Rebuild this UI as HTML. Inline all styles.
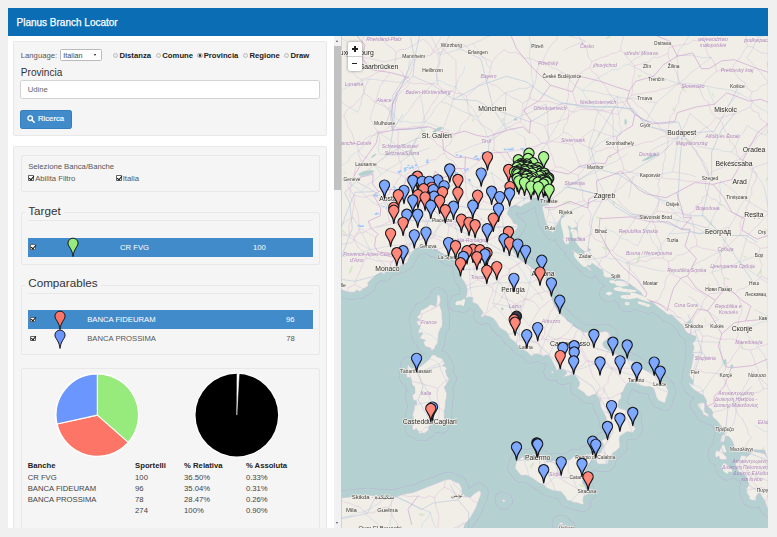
<!DOCTYPE html>
<html><head><meta charset="utf-8"><title>Planus Branch Locator</title>
<style>
html,body{margin:0;padding:0}
body{width:777px;height:537px;background:#f0f0f0;position:relative;overflow:hidden;font-family:"Liberation Sans","DejaVu Sans",sans-serif;font-size:7.7px;color:#444}
#page{position:absolute;left:8px;top:8px;width:760px;height:520px;background:#fff;overflow:hidden}
#blur{position:absolute;left:0;top:0;width:777px;height:537px;filter:blur(0.45px)}
.abs{position:absolute}
#hdr{left:0;top:0;width:760px;height:28px;background:#0b6db3}
#hdr span{position:absolute;left:8.5px;top:8.7px;font-size:10px;line-height:12px;color:#fff;font-weight:400;-webkit-text-stroke:0.25px #fff}
.well{position:absolute;background:#f5f5f5;border:1px solid #e8e8e8;border-radius:2px;box-sizing:border-box}
.t{position:absolute;white-space:nowrap;line-height:10px}
.b{font-weight:700;color:#222}
.leg{position:absolute;font-size:11.7px;line-height:14px;color:#333;white-space:nowrap}
.rad{position:absolute;width:5.4px;height:5.4px;border:0.7px solid #bdbdbd;border-radius:50%;background:#ececec;box-sizing:border-box}
.chk{position:absolute;width:5.6px;height:5.6px;border:0.7px solid #666;background:#fff;box-sizing:border-box;border-radius:0.8px}
.chk:after{content:"";position:absolute;left:0.9px;top:-1.2px;width:2px;height:4px;border:solid #111;border-width:0 1.1px 1.1px 0;transform:rotate(40deg)}
.row{position:absolute;left:19.7px;width:285px;height:19px}
.sel{background:#428bca}
.sel .t{color:#fff}
</style></head><body>
<div id="blur">
<div id="page">
<div id="hdr" class="abs"><span>Planus Branch Locator</span></div>

<!-- left panel (coords relative to #page: subtract 8) -->
<div class="well" style="left:5.3px;top:33px;width:313.5px;height:94.5px"></div>
<div class="t" style="left:12.8px;top:42.7px;color:#555">Language:</div>
<div class="abs" style="left:52.4px;top:41.3px;width:41.2px;height:11.4px;border:0.7px solid #bbb;background:#fff;box-sizing:border-box;border-radius:1.5px"></div>
<div class="t" style="left:55.3px;top:42.6px;font-size:7.2px;color:#444">Italian</div>
<div class="abs" style="left:86.3px;top:45.9px;width:0;height:0;border-left:1.7px solid transparent;border-right:1.7px solid transparent;border-top:2.6px solid #111"></div>

<div class="rad" style="left:105px;top:45px"></div><div class="t b" style="left:111.4px;top:43.2px">Distanza</div>
<div class="rad" style="left:147.8px;top:45px"></div><div class="t b" style="left:154.3px;top:43.2px">Comune</div>
<div class="rad" style="left:189.2px;top:45px;background:radial-gradient(circle,#222 0,#333 38%,#ddd 60%);border-color:#aaa"></div><div class="t b" style="left:195.7px;top:43.2px">Provincia</div>
<div class="rad" style="left:234.7px;top:45px"></div><div class="t b" style="left:241.5px;top:43.2px">Regione</div>
<div class="rad" style="left:276px;top:45px"></div><div class="t b" style="left:282.5px;top:43.2px">Draw</div>

<div class="leg" style="left:12.8px;top:57.6px;font-size:10.1px">Provincia</div>
<div class="abs" style="left:12.4px;top:71.6px;width:299.3px;height:19px;border:1px solid #d3d3d3;background:#fff;box-sizing:border-box;border-radius:2.2px"></div>
<div class="t" style="left:19.8px;top:76.9px;color:#666">Udine</div>
<div class="abs" style="left:12.4px;top:101.5px;width:51.4px;height:19px;background:#428bca;border:1px solid #357ebd;box-sizing:border-box;border-radius:2.2px"></div>
<svg class="abs" style="left:18.8px;top:106.6px" width="8" height="8" viewBox="0 0 8 8"><circle cx="3.2" cy="3.2" r="2.3" fill="none" stroke="#fff" stroke-width="1.3"/><path d="M4.9,4.9L7.2,7.2" stroke="#fff" stroke-width="1.5" stroke-linecap="round"/></svg>
<div class="t" style="left:30px;top:106.2px;color:#fff;-webkit-text-stroke:0.15px #fff">Ricerca</div>

<div class="well" style="left:5.1px;top:138.3px;width:313.6px;height:400px"></div>
<div class="well" style="left:12.9px;top:146.6px;width:298.7px;height:37px;background:#f5f5f5"></div>
<div class="t" style="left:20.2px;top:154.3px;color:#555">Selezione Banca/Banche</div>
<div class="chk" style="left:20.4px;top:167.2px"></div><div class="t" style="left:27.2px;top:165.6px;color:#555">Abilita Filtro</div>
<div class="chk" style="left:108px;top:167.2px"></div><div class="t" style="left:114.7px;top:165.6px;color:#555">Italia</div>

<!-- Target fieldset -->
<div class="well" style="left:12.9px;top:203.7px;width:298.7px;height:53px;background:#f5f5f5"></div>
<div class="leg" style="left:17.2px;top:195.8px;background:#f5f5f5;padding:0 3px">Target</div>
<div class="abs" style="left:19.7px;top:212px;width:285px;height:1px;background:#e8e8e8"></div>
<div class="row sel" style="top:230px">
 <div class="chk" style="left:2.8px;top:6.3px"></div>
 <div class="t" style="left:92.3px;top:4.6px">CR FVG</div>
 <div class="t" style="left:225.3px;top:4.6px">100</div>
</div>
<svg class="abs" style="left:57.4px;top:228.9px" width="16" height="21" viewBox="-8 -19.7 16 21"><path d="M0,-0.2L-0.45,-2.2C-0.55,-3.2 -0.8,-4.5 -1.3,-5.6C-1.9,-7 -3.0,-8.7 -3.75,-10.1A5.05,5.05 0 1 1 3.75,-10.1C3.0,-8.7 1.9,-7 1.3,-5.6C0.8,-4.5 0.55,-3.2 0.45,-2.2Z" fill="#97ea7c" stroke="#16161c" stroke-width="1"/></svg>

<!-- Comparables fieldset -->
<div class="well" style="left:12.9px;top:277px;width:298.7px;height:70.2px;background:#f5f5f5"></div>
<div class="leg" style="left:17.2px;top:268.2px;background:#f5f5f5;padding:0 3px">Comparables</div>
<div class="abs" style="left:19.7px;top:284.5px;width:285px;height:1px;background:#e8e8e8"></div>
<div class="row sel" style="top:302.3px">
 <div class="chk" style="left:2.8px;top:6.3px"></div>
 <div class="t" style="left:59.5px;top:4.6px">BANCA FIDEURAM</div>
 <div class="t" style="left:258.4px;top:4.6px">96</div>
</div>
<div class="row" style="top:321.3px">
 <div class="chk" style="left:2.8px;top:6.3px"></div>
 <div class="t" style="left:59.5px;top:4.6px;color:#555">BANCA PROSSIMA</div>
 <div class="t" style="left:258.6px;top:4.6px;color:#555">78</div>
</div>
<svg class="abs" style="left:43.5px;top:301.5px" width="16" height="40" viewBox="-8 -19.7 16 40"><path d="M0,-0.2L-0.45,-2.2C-0.55,-3.2 -0.8,-4.5 -1.3,-5.6C-1.9,-7 -3.0,-8.7 -3.75,-10.1A5.05,5.05 0 1 1 3.75,-10.1C3.0,-8.7 1.9,-7 1.3,-5.6C0.8,-4.5 0.55,-3.2 0.45,-2.2Z" fill="#fd7567" stroke="#16161c" stroke-width="1"/><path transform="translate(0,18.9)" d="M0,-0.2L-0.45,-2.2C-0.55,-3.2 -0.8,-4.5 -1.3,-5.6C-1.9,-7 -3.0,-8.7 -3.75,-10.1A5.05,5.05 0 1 1 3.75,-10.1C3.0,-8.7 1.9,-7 1.3,-5.6C0.8,-4.5 0.55,-3.2 0.45,-2.2Z" fill="#6b96fd" stroke="#16161c" stroke-width="1"/></svg>

<!-- chart well -->
<div class="well" style="left:12.9px;top:359.6px;width:298.7px;height:200px;background:#f5f5f5"></div>
<svg class="abs" style="left:40px;top:360px" width="250" height="95" viewBox="48 368 250 95">
 <circle cx="97.3" cy="415.1" r="42.2" fill="#fff"/>
 <g stroke="#fff" stroke-width="1.1" stroke-linejoin="round">
 <path d="M97.3,415.1 L97.30,373.90 A41.2,41.2 0 0 1 128.20,442.35 Z" fill="#97ea7c"/>
 <path d="M97.3,415.1 L128.20,442.35 A41.2,41.2 0 0 1 57.07,423.99 Z" fill="#fd7567"/>
 <path d="M97.3,415.1 L57.07,423.99 A41.2,41.2 0 0 1 97.30,373.90 Z" fill="#6b96fd"/>
 </g>
 <circle cx="236.8" cy="415.1" r="42.3" fill="#fff"/>
 <circle cx="236.8" cy="415.1" r="41.3" fill="#000"/>
 <path d="M236.8,415.1 L237.0,373.5 L239.2,373.6 Z" fill="#fff" stroke="#fff" stroke-width="0.5"/>
</svg>

<div class="t b" style="left:19.7px;top:453.1px">Banche</div><div class="t b" style="left:127.1px;top:453.1px">Sportelli</div><div class="t b" style="left:176.1px;top:453.1px">% Relativa</div><div class="t b" style="left:237.9px;top:453.1px">% Assoluta</div>
<div class="t" style="left:19.7px;top:464.8px">CR FVG</div><div class="t" style="left:127.1px;top:464.8px">100</div><div class="t" style="left:176.1px;top:464.8px">36.50%</div><div class="t" style="left:237.9px;top:464.8px">0.33%</div>
<div class="t" style="left:19.7px;top:476px">BANCA FIDEURAM</div><div class="t" style="left:127.1px;top:476px">96</div><div class="t" style="left:176.1px;top:476px">35.04%</div><div class="t" style="left:237.9px;top:476px">0.31%</div>
<div class="t" style="left:19.7px;top:486.8px">BANCA PROSSIMA</div><div class="t" style="left:127.1px;top:486.8px">78</div><div class="t" style="left:176.1px;top:486.8px">28.47%</div><div class="t" style="left:237.9px;top:486.8px">0.26%</div>
<div class="t" style="left:127.1px;top:498px">274</div><div class="t" style="left:176.1px;top:498px">100%</div><div class="t" style="left:237.9px;top:498px">0.90%</div>

<!-- scrollbar -->
<div class="abs" style="left:325.5px;top:28px;width:8px;height:492px;background:#f1f1f1"></div>
<div class="abs" style="left:325.8px;top:37.8px;width:7px;height:144.2px;background:#c1c1c1"></div>
<div class="abs" style="left:327.6px;top:32px;width:0;height:0;border-left:1.8px solid transparent;border-right:1.8px solid transparent;border-bottom:2.4px solid #555"></div>
<div class="abs" style="left:327.6px;top:513.5px;width:0;height:0;border-left:1.8px solid transparent;border-right:1.8px solid transparent;border-top:2.4px solid #555"></div>
</div>

<svg width="427" height="492" viewBox="341 36 427 492" style="position:absolute;left:341px;top:36px;display:block">
<defs><radialGradient id="gB" cx="0.5" cy="0.28" r="0.55"><stop offset="0" stop-color="#7ea9ff"/><stop offset="0.55" stop-color="#7ea9ff"/><stop offset="1" stop-color="#5c88f3"/></radialGradient><path id="pinB" d="M0,-0.2L-0.45,-2.2C-0.55,-3.2 -0.8,-4.5 -1.3,-5.6C-1.9,-7 -3.0,-8.7 -3.75,-10.1A5.05,5.05 0 1 1 3.75,-10.1C3.0,-8.7 1.9,-7 1.3,-5.6C0.8,-4.5 0.55,-3.2 0.45,-2.2Z" fill="url(#gB)" stroke="#14141a" stroke-width="1.15" stroke-linejoin="round"/><radialGradient id="gR" cx="0.5" cy="0.28" r="0.55"><stop offset="0" stop-color="#ff8a7c"/><stop offset="0.55" stop-color="#ff8a7c"/><stop offset="1" stop-color="#f3604f"/></radialGradient><path id="pinR" d="M0,-0.2L-0.45,-2.2C-0.55,-3.2 -0.8,-4.5 -1.3,-5.6C-1.9,-7 -3.0,-8.7 -3.75,-10.1A5.05,5.05 0 1 1 3.75,-10.1C3.0,-8.7 1.9,-7 1.3,-5.6C0.8,-4.5 0.55,-3.2 0.45,-2.2Z" fill="url(#gR)" stroke="#14141a" stroke-width="1.15" stroke-linejoin="round"/><radialGradient id="gG" cx="0.5" cy="0.28" r="0.55"><stop offset="0" stop-color="#a9f58f"/><stop offset="0.55" stop-color="#a9f58f"/><stop offset="1" stop-color="#7fdc63"/></radialGradient><path id="pinG" d="M0,-0.2L-0.45,-2.2C-0.55,-3.2 -0.8,-4.5 -1.3,-5.6C-1.9,-7 -3.0,-8.7 -3.75,-10.1A5.05,5.05 0 1 1 3.75,-10.1C3.0,-8.7 1.9,-7 1.3,-5.6C0.8,-4.5 0.55,-3.2 0.45,-2.2Z" fill="url(#gG)" stroke="#14141a" stroke-width="1.15" stroke-linejoin="round"/><radialGradient id="gD" cx="0.5" cy="0.28" r="0.55"><stop offset="0" stop-color="#3a3a48"/><stop offset="0.55" stop-color="#3a3a48"/><stop offset="1" stop-color="#15151c"/></radialGradient><path id="pinD" d="M0,-0.2L-0.45,-2.2C-0.55,-3.2 -0.8,-4.5 -1.3,-5.6C-1.9,-7 -3.0,-8.7 -3.75,-10.1A5.05,5.05 0 1 1 3.75,-10.1C3.0,-8.7 1.9,-7 1.3,-5.6C0.8,-4.5 0.55,-3.2 0.45,-2.2Z" fill="url(#gD)" stroke="#14141a" stroke-width="1.15" stroke-linejoin="round"/></defs>
<rect x="341" y="36" width="427" height="492" fill="#b5d0d0"/>
<g fill="none" stroke="#b9b3d6" stroke-width="15" stroke-linejoin="round">
<path d="M585.1,264.5 587.6,266.6 591.4,270.1 590.6,270.8 586.8,267.3 584.6,265.2Z"/>
<path d="M572.4,250.4 575.0,251.8 577.5,253.9 576.7,254.6 573.7,252.5 571.9,251.1Z"/>
<path d="M563.1,238.4 565.3,240.5 567.4,243.7 566.6,244.4 564.3,241.6 562.3,239.1Z"/>
<path d="M341.5,289.8 347.9,292.0 353.9,292.3 357.0,290.0 359.8,291.5 363.0,289.0 365.8,287.6 368.5,285.5 367.5,283.0 371.0,279.4 376.2,274.9 380.7,272.7 384.5,274.0 386.0,271.5 384.4,270.8 388.2,269.8 391.0,268.0 392.8,267.6 397.4,266.9 403.7,264.5 407.2,262.0 408.5,258.5 410.5,255.0 414.0,250.4 415.1,249.3 418.6,247.2 421.9,245.5 426.4,245.8 430.2,247.6 433.5,249.7 434.0,248.3 438.1,250.8 441.4,253.2 445.9,256.1 449.2,258.5 449.7,256.8 451.7,258.2 454.5,259.2 457.1,261.3 459.6,264.8 460.3,269.1 460.3,272.6 461.1,276.0 461.9,278.8 464.4,282.0 466.2,285.4 467.2,290.0 466.9,294.5 465.9,297.2 466.7,298.3 468.2,296.9 470.7,296.9 473.0,298.3 472.0,301.7 473.8,303.1 475.8,303.4 478.3,305.2 479.1,306.9 480.8,308.9 482.1,310.7 483.1,313.4 481.3,314.4 480.8,316.5 482.6,317.2 484.1,316.2 485.1,315.1 486.2,315.8 490.2,316.8 493.5,318.6 496.5,322.3 498.8,326.4 500.8,328.5 505.9,331.2 508.4,334.6 509.7,338.0 511.2,339.0 515.5,342.4 518.0,345.8 519.8,348.1 521.1,347.8 523.6,349.5 526.9,351.8 529.9,354.2 530.7,355.9 532.2,355.5 534.0,354.2 536.0,353.8 540.3,354.5 542.6,355.9 544.1,356.5 544.9,354.9 548.6,355.2 551.7,359.6 552.9,362.6 555.7,367.6 556.5,370.6 557.8,369.3 561.0,368.9 563.3,369.9 566.1,371.6 566.9,373.6 564.3,375.6 562.8,377.6 564.8,376.6 566.9,376.0 569.9,375.6 573.9,374.3 577.5,378.3 579.5,382.6 579.5,384.9 577.5,388.3 580.8,390.6 583.8,392.2 586.8,395.9 589.4,396.5 592.4,394.9 596.0,394.2 598.0,397.2 599.8,400.2 600.0,402.8 600.8,407.1 603.5,412.3 606.1,417.6 607.1,425.1 609.1,430.9 610.6,432.2 609.4,438.1 606.1,438.1 602.8,439.7 601.0,441.7 603.5,443.9 602.5,448.1 601.3,450.1 600.3,452.3 598.2,453.3 596.2,454.6 596.2,458.1 596.5,461.0 597.2,463.2 599.8,464.2 603.3,463.9 606.8,464.2 608.4,462.3 609.1,458.8 609.9,456.8 611.9,453.9 613.7,452.3 616.2,451.0 620.0,447.2 619.7,443.3 619.2,439.4 619.7,436.5 621.3,435.2 627.1,431.6 631.1,432.2 632.9,432.6 635.7,428.3 633.9,426.7 633.7,422.1 634.4,416.3 630.6,414.3 629.4,413.0 625.1,409.7 621.3,409.0 618.7,407.7 618.0,404.8 618.7,400.8 621.3,397.8 621.0,393.2 623.5,390.9 624.3,388.3 626.1,384.9 627.8,382.6 631.9,380.3 636.2,380.6 635.7,382.9 639.5,384.9 645.0,386.6 649.6,386.6 653.4,387.9 654.1,389.6 655.7,394.5 656.4,397.2 658.7,400.5 662.2,402.1 665.0,403.1 666.0,398.8 666.8,396.5 668.3,391.6 667.6,389.2 666.8,387.6 663.8,383.6 659.0,380.0 655.9,376.0 654.4,374.6 650.9,372.6 642.5,368.6 638.2,364.9 636.2,363.3 632.9,361.2 627.3,358.9 620.5,356.2 615.9,353.8 612.4,352.5 609.1,350.5 604.3,347.8 602.8,344.7 603.3,342.0 606.8,339.3 610.1,336.9 609.9,333.6 605.8,331.2 602.3,331.9 597.7,332.2 588.9,332.2 583.6,332.2 580.0,329.5 576.2,327.8 572.9,325.7 572.9,323.7 567.4,320.9 565.1,317.2 560.3,313.4 557.5,310.7 555.2,306.5 553.7,303.8 551.9,296.9 550.7,291.7 549.7,288.9 547.9,284.4 546.4,280.2 545.1,276.0 542.3,273.6 539.5,273.2 535.0,270.1 529.9,265.9 527.1,263.4 523.3,261.3 518.5,258.2 514.2,253.2 513.0,251.1 511.2,245.5 510.4,240.8 511.7,236.2 513.2,231.9 515.5,230.5 518.0,226.2 516.3,224.1 513.5,223.4 512.2,220.5 510.4,217.6 507.4,214.0 508.2,209.7 510.9,206.8 515.5,205.0 518.8,206.1 520.6,206.8 523.6,205.0 526.6,203.2 530.2,201.8 531.4,198.2 535.7,197.4 539.5,198.9 540.8,200.3 542.8,198.9 543.1,196.7 544.6,197.1 547.1,199.6 548.6,201.4 548.9,203.2 547.6,205.0 543.8,205.8 542.1,206.8 542.6,209.4 543.6,213.3 544.3,216.6 545.1,220.1 545.4,221.9 548.4,226.6 550.2,229.4 552.4,233.0 553.7,231.2 554.7,228.4 556.0,225.9 558.8,221.9 560.0,220.1 560.8,218.4 561.0,216.2 562.3,212.6 565.8,213.0 568.4,214.0 569.1,215.1 572.2,218.7 574.7,220.5 577.5,225.2 577.5,230.2 578.0,235.2 581.8,241.6 586.3,246.2 591.1,250.1 588.9,250.8 584.6,251.5 583.8,253.6 585.6,256.1 587.9,258.5 591.1,262.4 597.0,266.6 599.8,268.7 602.5,269.8 603.3,272.6 603.3,275.0 604.6,277.1 607.8,277.8 611.6,277.4 616.4,277.8 619.2,279.2 622.8,279.9 627.6,282.3 631.1,285.1 635.2,288.6 639.2,291.7 641.5,293.4 642.0,294.8 644.8,296.9 646.3,297.9 648.3,300.0 650.4,301.0 653.1,302.4 655.9,305.2 658.2,307.2 661.5,309.6 664.3,311.7 666.8,314.1 669.1,315.8 669.6,314.4 671.6,315.1 673.6,316.8 677.2,319.9 679.7,322.3 682.0,324.7 683.5,326.4 685.0,329.8 686.3,331.9 688.8,333.6 690.6,334.6 693.9,335.6 696.1,336.3 695.9,338.6 694.4,341.4 692.3,343.7 693.9,345.8 693.9,349.1 692.3,352.8 693.9,354.5 693.1,358.2 692.3,362.2 691.8,365.6 690.6,369.9 689.3,375.3 691.3,378.3 693.4,381.3 692.9,384.9 691.3,383.9 688.8,382.3 689.6,384.6 691.8,387.6 694.4,389.9 697.2,391.6 699.9,393.6 703.0,394.9 705.3,398.2 706.5,400.8 706.5,404.1 707.3,406.7 709.6,408.1 711.1,409.0 712.1,411.0 713.1,413.0 712.1,415.3 713.6,417.9 716.6,420.2 719.2,423.4 721.7,426.7 724.2,429.3 725.5,430.9 724.7,433.9 722.2,435.2 720.9,439.1 720.2,443.3 721.7,441.7 723.7,442.0 724.7,439.7 725.5,435.8 728.8,436.5 731.8,440.0 733.8,444.6 734.3,448.1 734.3,451.0 737.4,452.0 740.7,451.3 744.5,452.0 748.3,451.3 751.3,450.7 754.6,449.4 759.6,450.1 764.7,450.1 768.0,461.0 768.0,30.0 341.5,30.0Z"/>
<path d="M768.0,459.0 764.7,453.9 759.6,452.6 754.6,451.7 751.6,452.0 750.3,453.6 747.0,456.5 741.4,455.2 739.4,460.0 735.1,463.9 736.9,468.1 739.7,473.2 743.2,474.5 747.0,477.6 748.5,485.6 746.5,488.8 747.0,492.9 749.3,496.4 749.5,499.2 752.1,500.2 756.1,500.5 755.9,496.7 757.9,493.5 760.2,492.9 761.4,496.1 763.4,498.3 765.5,502.4 766.5,506.2 768.0,509.0Z"/>
<path d="M596.5,453.0 594.2,455.5 589.4,463.2 587.4,466.5 585.3,470.3 584.3,474.1 582.3,477.6 582.3,480.8 582.5,483.7 585.6,486.2 586.8,490.0 587.4,491.6 588.4,493.5 583.6,496.4 583.1,498.0 583.1,501.8 583.6,503.7 582.3,504.6 576.2,502.4 574.2,502.7 570.9,501.1 567.1,500.2 565.6,497.0 561.0,491.6 553.2,490.4 547.9,488.5 542.8,484.3 539.3,483.1 536.5,481.1 531.4,477.6 527.1,475.4 525.1,475.1 520.8,475.4 519.0,472.9 515.0,468.1 516.8,461.0 521.1,458.1 522.6,455.9 524.9,459.4 526.4,460.7 529.7,460.0 531.4,456.8 531.9,455.5 537.5,454.6 538.8,457.8 543.1,458.1 545.9,461.6 547.1,462.0 555.2,460.4 558.5,461.0 563.6,461.0 570.7,459.4 573.7,456.5 579.3,456.8 581.3,457.1 585.6,455.2 585.8,453.0 586.6,454.9 590.9,453.9 593.2,452.0Z"/>
<path d="M434.0,354.5 437.8,357.2 441.4,358.2 442.4,359.2 444.7,363.6 442.1,365.9 444.7,366.3 446.7,368.6 445.2,371.0 446.2,373.0 446.7,375.6 449.2,379.0 446.4,384.3 444.2,387.3 446.9,393.9 446.2,398.5 445.4,401.8 445.2,406.1 444.2,412.0 444.2,419.5 442.6,421.2 442.4,425.1 441.4,426.1 440.4,425.1 437.8,425.1 434.0,422.5 431.3,422.5 430.0,425.4 428.7,427.0 428.7,430.0 424.4,433.2 423.2,432.9 419.4,433.5 417.8,430.6 416.1,428.3 414.3,430.6 412.5,429.3 412.3,425.7 413.5,425.1 412.5,422.8 413.8,419.9 413.0,416.3 412.5,414.6 414.3,409.7 414.6,404.1 416.1,405.8 416.8,403.1 416.1,399.8 413.8,401.1 413.0,398.2 412.3,395.2 415.1,393.2 414.8,386.9 412.5,385.3 411.3,380.6 410.8,378.0 408.2,377.3 407.0,378.0 406.7,375.6 406.2,372.0 407.5,366.6 408.2,364.3 409.2,366.3 411.0,368.3 413.0,368.6 415.1,369.3 418.1,367.9 420.9,366.3 424.9,362.9 427.0,361.2 429.7,358.9 431.8,355.2 433.0,355.2Z"/>
<path d="M438.6,294.8 439.9,296.5 440.6,300.3 440.4,303.1 439.6,305.5 440.9,308.9 441.9,312.4 441.9,316.8 442.4,322.0 442.1,326.1 439.6,330.2 438.3,334.2 438.3,336.9 437.8,340.7 437.6,343.0 436.8,344.7 435.3,345.4 435.0,347.4 432.8,350.8 432.3,350.1 430.7,350.1 430.2,347.8 426.4,346.8 424.4,345.1 423.4,342.0 425.7,340.3 422.9,339.3 419.6,338.3 422.9,333.6 421.6,332.2 418.1,333.6 418.4,331.2 420.4,325.7 417.8,325.0 416.6,321.3 420.4,320.3 416.8,316.8 419.4,315.1 421.1,309.6 422.1,310.0 424.7,308.6 426.7,307.6 430.7,304.5 435.8,306.2 436.8,302.8 437.1,296.5 437.3,295.2Z"/>
<path d="M456.0,303.8 457.3,301.7 460.3,301.4 461.9,301.4 463.9,299.6 464.4,300.0 463.6,303.4 463.1,305.2 461.1,304.1 459.6,304.1 457.3,304.5Z"/>
<path d="M697.2,404.8 699.7,403.1 702.7,402.5 704.5,403.5 704.7,405.8 704.5,409.0 704.5,411.7 708.5,414.6 709.3,417.2 706.5,415.9 703.2,414.3 702.5,411.3 698.9,407.4Z"/>
<path d="M721.2,446.8 723.0,452.0 723.0,453.6 726.3,456.8 726.8,459.4 723.0,459.7 719.7,459.1 718.9,455.9 717.4,456.8 716.4,457.5 715.1,455.9 715.6,452.0 716.9,450.4 718.4,451.3 719.9,450.7 720.2,449.4Z"/>
<path d="M723.0,445.5 724.2,447.2 724.7,449.7 725.5,451.3 724.2,451.7 723.5,449.4 722.5,447.2Z"/>
<path d="M724.2,463.9 727.5,466.5 729.3,468.4 731.6,470.6 731.3,471.3 728.5,470.6 727.0,472.9 724.2,470.6 722.2,467.4Z"/>
<path d="M563.8,218.7 565.3,221.2 566.1,226.6 567.9,231.9 568.1,238.0 567.4,242.6 566.1,241.9 564.8,233.7 563.6,228.4 562.3,223.0 562.8,219.4Z"/>
<path d="M566.1,216.6 569.9,216.2 572.4,220.1 575.5,225.5 572.4,226.6 570.4,224.8 567.4,223.7 565.6,221.2Z"/>
<path d="M571.9,230.2 575.0,231.2 576.7,235.5 574.5,234.8Z"/>
<path d="M573.7,235.5 578.8,240.8 583.8,245.5 586.8,249.0 585.6,249.7 581.3,246.9 579.5,244.4 576.2,239.8Z"/>
<path d="M575.5,254.3 577.5,256.1 581.3,260.3 585.6,264.8 584.6,265.2 580.0,261.0 576.2,256.8Z"/>
<path d="M581.3,255.0 585.1,258.5 590.1,263.1 589.1,263.8 584.6,259.6 581.0,256.1Z"/>
<path d="M615.4,283.0 616.7,281.6 621.8,281.6 627.6,282.7 628.1,284.8 621.8,286.1 616.7,284.8Z"/>
<path d="M610.1,281.3 612.9,280.9 614.9,282.0 612.9,282.7 610.4,282.0Z"/>
<path d="M614.7,288.6 619.2,287.5 623.0,289.3 630.6,290.3 635.7,291.0 630.6,291.7 623.0,291.0 616.7,290.0 614.7,289.3Z"/>
<path d="M606.6,293.4 609.1,292.4 611.6,293.4 609.1,294.8Z"/>
<path d="M621.3,296.2 626.8,295.5 634.4,296.5 635.7,297.6 628.1,298.6 621.8,297.6Z"/>
<path d="M648.8,300.0 642.0,296.5 635.7,294.1 631.1,293.4 631.4,295.5 638.2,297.6 643.3,299.6 648.8,301.4Z"/>
<path d="M638.7,302.1 644.5,303.4 649.6,305.5 648.3,306.2 643.3,304.5 638.7,303.1Z"/>
<path d="M625.6,303.1 628.6,303.1 628.6,304.5 625.6,304.1Z"/>
<path d="M502.3,498.9 504.9,499.9 505.4,501.4 503.6,502.1 502.3,500.5Z"/>
<path d="M559.3,522.8 562.3,522.5 563.3,524.1 561.0,524.7 559.3,524.1Z"/>
<path d="M563.1,525.3 564.8,525.6 567.9,527.5 569.1,529.7 567.4,531.3 564.8,530.6 563.1,528.1Z"/>
<path d="M550.9,371.6 553.5,371.3 553.7,373.0 551.7,373.3Z"/>
<path d="M341.5,498.0 355.0,496.5 368.3,495.2 382.0,497.0 396.6,496.6 405.0,494.0 413.6,492.4 427.8,486.7 439.0,482.5 445.0,480.0 449.0,479.3 452.0,480.0 456.0,482.5 459.0,483.0 461.7,488.1 462.0,493.0 466.0,496.6 470.2,497.5 474.0,494.0 478.7,490.5 481.0,492.0 480.7,495.2 478.0,502.0 475.9,508.0 470.2,517.9 464.6,524.9 463.0,531.0 341.5,531.0Z"/>
</g><g fill="none" stroke="#b5d0d0" stroke-width="14" stroke-linejoin="round">
<path d="M585.1,264.5 587.6,266.6 591.4,270.1 590.6,270.8 586.8,267.3 584.6,265.2Z"/>
<path d="M572.4,250.4 575.0,251.8 577.5,253.9 576.7,254.6 573.7,252.5 571.9,251.1Z"/>
<path d="M563.1,238.4 565.3,240.5 567.4,243.7 566.6,244.4 564.3,241.6 562.3,239.1Z"/>
<path d="M341.5,289.8 347.9,292.0 353.9,292.3 357.0,290.0 359.8,291.5 363.0,289.0 365.8,287.6 368.5,285.5 367.5,283.0 371.0,279.4 376.2,274.9 380.7,272.7 384.5,274.0 386.0,271.5 384.4,270.8 388.2,269.8 391.0,268.0 392.8,267.6 397.4,266.9 403.7,264.5 407.2,262.0 408.5,258.5 410.5,255.0 414.0,250.4 415.1,249.3 418.6,247.2 421.9,245.5 426.4,245.8 430.2,247.6 433.5,249.7 434.0,248.3 438.1,250.8 441.4,253.2 445.9,256.1 449.2,258.5 449.7,256.8 451.7,258.2 454.5,259.2 457.1,261.3 459.6,264.8 460.3,269.1 460.3,272.6 461.1,276.0 461.9,278.8 464.4,282.0 466.2,285.4 467.2,290.0 466.9,294.5 465.9,297.2 466.7,298.3 468.2,296.9 470.7,296.9 473.0,298.3 472.0,301.7 473.8,303.1 475.8,303.4 478.3,305.2 479.1,306.9 480.8,308.9 482.1,310.7 483.1,313.4 481.3,314.4 480.8,316.5 482.6,317.2 484.1,316.2 485.1,315.1 486.2,315.8 490.2,316.8 493.5,318.6 496.5,322.3 498.8,326.4 500.8,328.5 505.9,331.2 508.4,334.6 509.7,338.0 511.2,339.0 515.5,342.4 518.0,345.8 519.8,348.1 521.1,347.8 523.6,349.5 526.9,351.8 529.9,354.2 530.7,355.9 532.2,355.5 534.0,354.2 536.0,353.8 540.3,354.5 542.6,355.9 544.1,356.5 544.9,354.9 548.6,355.2 551.7,359.6 552.9,362.6 555.7,367.6 556.5,370.6 557.8,369.3 561.0,368.9 563.3,369.9 566.1,371.6 566.9,373.6 564.3,375.6 562.8,377.6 564.8,376.6 566.9,376.0 569.9,375.6 573.9,374.3 577.5,378.3 579.5,382.6 579.5,384.9 577.5,388.3 580.8,390.6 583.8,392.2 586.8,395.9 589.4,396.5 592.4,394.9 596.0,394.2 598.0,397.2 599.8,400.2 600.0,402.8 600.8,407.1 603.5,412.3 606.1,417.6 607.1,425.1 609.1,430.9 610.6,432.2 609.4,438.1 606.1,438.1 602.8,439.7 601.0,441.7 603.5,443.9 602.5,448.1 601.3,450.1 600.3,452.3 598.2,453.3 596.2,454.6 596.2,458.1 596.5,461.0 597.2,463.2 599.8,464.2 603.3,463.9 606.8,464.2 608.4,462.3 609.1,458.8 609.9,456.8 611.9,453.9 613.7,452.3 616.2,451.0 620.0,447.2 619.7,443.3 619.2,439.4 619.7,436.5 621.3,435.2 627.1,431.6 631.1,432.2 632.9,432.6 635.7,428.3 633.9,426.7 633.7,422.1 634.4,416.3 630.6,414.3 629.4,413.0 625.1,409.7 621.3,409.0 618.7,407.7 618.0,404.8 618.7,400.8 621.3,397.8 621.0,393.2 623.5,390.9 624.3,388.3 626.1,384.9 627.8,382.6 631.9,380.3 636.2,380.6 635.7,382.9 639.5,384.9 645.0,386.6 649.6,386.6 653.4,387.9 654.1,389.6 655.7,394.5 656.4,397.2 658.7,400.5 662.2,402.1 665.0,403.1 666.0,398.8 666.8,396.5 668.3,391.6 667.6,389.2 666.8,387.6 663.8,383.6 659.0,380.0 655.9,376.0 654.4,374.6 650.9,372.6 642.5,368.6 638.2,364.9 636.2,363.3 632.9,361.2 627.3,358.9 620.5,356.2 615.9,353.8 612.4,352.5 609.1,350.5 604.3,347.8 602.8,344.7 603.3,342.0 606.8,339.3 610.1,336.9 609.9,333.6 605.8,331.2 602.3,331.9 597.7,332.2 588.9,332.2 583.6,332.2 580.0,329.5 576.2,327.8 572.9,325.7 572.9,323.7 567.4,320.9 565.1,317.2 560.3,313.4 557.5,310.7 555.2,306.5 553.7,303.8 551.9,296.9 550.7,291.7 549.7,288.9 547.9,284.4 546.4,280.2 545.1,276.0 542.3,273.6 539.5,273.2 535.0,270.1 529.9,265.9 527.1,263.4 523.3,261.3 518.5,258.2 514.2,253.2 513.0,251.1 511.2,245.5 510.4,240.8 511.7,236.2 513.2,231.9 515.5,230.5 518.0,226.2 516.3,224.1 513.5,223.4 512.2,220.5 510.4,217.6 507.4,214.0 508.2,209.7 510.9,206.8 515.5,205.0 518.8,206.1 520.6,206.8 523.6,205.0 526.6,203.2 530.2,201.8 531.4,198.2 535.7,197.4 539.5,198.9 540.8,200.3 542.8,198.9 543.1,196.7 544.6,197.1 547.1,199.6 548.6,201.4 548.9,203.2 547.6,205.0 543.8,205.8 542.1,206.8 542.6,209.4 543.6,213.3 544.3,216.6 545.1,220.1 545.4,221.9 548.4,226.6 550.2,229.4 552.4,233.0 553.7,231.2 554.7,228.4 556.0,225.9 558.8,221.9 560.0,220.1 560.8,218.4 561.0,216.2 562.3,212.6 565.8,213.0 568.4,214.0 569.1,215.1 572.2,218.7 574.7,220.5 577.5,225.2 577.5,230.2 578.0,235.2 581.8,241.6 586.3,246.2 591.1,250.1 588.9,250.8 584.6,251.5 583.8,253.6 585.6,256.1 587.9,258.5 591.1,262.4 597.0,266.6 599.8,268.7 602.5,269.8 603.3,272.6 603.3,275.0 604.6,277.1 607.8,277.8 611.6,277.4 616.4,277.8 619.2,279.2 622.8,279.9 627.6,282.3 631.1,285.1 635.2,288.6 639.2,291.7 641.5,293.4 642.0,294.8 644.8,296.9 646.3,297.9 648.3,300.0 650.4,301.0 653.1,302.4 655.9,305.2 658.2,307.2 661.5,309.6 664.3,311.7 666.8,314.1 669.1,315.8 669.6,314.4 671.6,315.1 673.6,316.8 677.2,319.9 679.7,322.3 682.0,324.7 683.5,326.4 685.0,329.8 686.3,331.9 688.8,333.6 690.6,334.6 693.9,335.6 696.1,336.3 695.9,338.6 694.4,341.4 692.3,343.7 693.9,345.8 693.9,349.1 692.3,352.8 693.9,354.5 693.1,358.2 692.3,362.2 691.8,365.6 690.6,369.9 689.3,375.3 691.3,378.3 693.4,381.3 692.9,384.9 691.3,383.9 688.8,382.3 689.6,384.6 691.8,387.6 694.4,389.9 697.2,391.6 699.9,393.6 703.0,394.9 705.3,398.2 706.5,400.8 706.5,404.1 707.3,406.7 709.6,408.1 711.1,409.0 712.1,411.0 713.1,413.0 712.1,415.3 713.6,417.9 716.6,420.2 719.2,423.4 721.7,426.7 724.2,429.3 725.5,430.9 724.7,433.9 722.2,435.2 720.9,439.1 720.2,443.3 721.7,441.7 723.7,442.0 724.7,439.7 725.5,435.8 728.8,436.5 731.8,440.0 733.8,444.6 734.3,448.1 734.3,451.0 737.4,452.0 740.7,451.3 744.5,452.0 748.3,451.3 751.3,450.7 754.6,449.4 759.6,450.1 764.7,450.1 768.0,461.0 768.0,30.0 341.5,30.0Z"/>
<path d="M768.0,459.0 764.7,453.9 759.6,452.6 754.6,451.7 751.6,452.0 750.3,453.6 747.0,456.5 741.4,455.2 739.4,460.0 735.1,463.9 736.9,468.1 739.7,473.2 743.2,474.5 747.0,477.6 748.5,485.6 746.5,488.8 747.0,492.9 749.3,496.4 749.5,499.2 752.1,500.2 756.1,500.5 755.9,496.7 757.9,493.5 760.2,492.9 761.4,496.1 763.4,498.3 765.5,502.4 766.5,506.2 768.0,509.0Z"/>
<path d="M596.5,453.0 594.2,455.5 589.4,463.2 587.4,466.5 585.3,470.3 584.3,474.1 582.3,477.6 582.3,480.8 582.5,483.7 585.6,486.2 586.8,490.0 587.4,491.6 588.4,493.5 583.6,496.4 583.1,498.0 583.1,501.8 583.6,503.7 582.3,504.6 576.2,502.4 574.2,502.7 570.9,501.1 567.1,500.2 565.6,497.0 561.0,491.6 553.2,490.4 547.9,488.5 542.8,484.3 539.3,483.1 536.5,481.1 531.4,477.6 527.1,475.4 525.1,475.1 520.8,475.4 519.0,472.9 515.0,468.1 516.8,461.0 521.1,458.1 522.6,455.9 524.9,459.4 526.4,460.7 529.7,460.0 531.4,456.8 531.9,455.5 537.5,454.6 538.8,457.8 543.1,458.1 545.9,461.6 547.1,462.0 555.2,460.4 558.5,461.0 563.6,461.0 570.7,459.4 573.7,456.5 579.3,456.8 581.3,457.1 585.6,455.2 585.8,453.0 586.6,454.9 590.9,453.9 593.2,452.0Z"/>
<path d="M434.0,354.5 437.8,357.2 441.4,358.2 442.4,359.2 444.7,363.6 442.1,365.9 444.7,366.3 446.7,368.6 445.2,371.0 446.2,373.0 446.7,375.6 449.2,379.0 446.4,384.3 444.2,387.3 446.9,393.9 446.2,398.5 445.4,401.8 445.2,406.1 444.2,412.0 444.2,419.5 442.6,421.2 442.4,425.1 441.4,426.1 440.4,425.1 437.8,425.1 434.0,422.5 431.3,422.5 430.0,425.4 428.7,427.0 428.7,430.0 424.4,433.2 423.2,432.9 419.4,433.5 417.8,430.6 416.1,428.3 414.3,430.6 412.5,429.3 412.3,425.7 413.5,425.1 412.5,422.8 413.8,419.9 413.0,416.3 412.5,414.6 414.3,409.7 414.6,404.1 416.1,405.8 416.8,403.1 416.1,399.8 413.8,401.1 413.0,398.2 412.3,395.2 415.1,393.2 414.8,386.9 412.5,385.3 411.3,380.6 410.8,378.0 408.2,377.3 407.0,378.0 406.7,375.6 406.2,372.0 407.5,366.6 408.2,364.3 409.2,366.3 411.0,368.3 413.0,368.6 415.1,369.3 418.1,367.9 420.9,366.3 424.9,362.9 427.0,361.2 429.7,358.9 431.8,355.2 433.0,355.2Z"/>
<path d="M438.6,294.8 439.9,296.5 440.6,300.3 440.4,303.1 439.6,305.5 440.9,308.9 441.9,312.4 441.9,316.8 442.4,322.0 442.1,326.1 439.6,330.2 438.3,334.2 438.3,336.9 437.8,340.7 437.6,343.0 436.8,344.7 435.3,345.4 435.0,347.4 432.8,350.8 432.3,350.1 430.7,350.1 430.2,347.8 426.4,346.8 424.4,345.1 423.4,342.0 425.7,340.3 422.9,339.3 419.6,338.3 422.9,333.6 421.6,332.2 418.1,333.6 418.4,331.2 420.4,325.7 417.8,325.0 416.6,321.3 420.4,320.3 416.8,316.8 419.4,315.1 421.1,309.6 422.1,310.0 424.7,308.6 426.7,307.6 430.7,304.5 435.8,306.2 436.8,302.8 437.1,296.5 437.3,295.2Z"/>
<path d="M456.0,303.8 457.3,301.7 460.3,301.4 461.9,301.4 463.9,299.6 464.4,300.0 463.6,303.4 463.1,305.2 461.1,304.1 459.6,304.1 457.3,304.5Z"/>
<path d="M697.2,404.8 699.7,403.1 702.7,402.5 704.5,403.5 704.7,405.8 704.5,409.0 704.5,411.7 708.5,414.6 709.3,417.2 706.5,415.9 703.2,414.3 702.5,411.3 698.9,407.4Z"/>
<path d="M721.2,446.8 723.0,452.0 723.0,453.6 726.3,456.8 726.8,459.4 723.0,459.7 719.7,459.1 718.9,455.9 717.4,456.8 716.4,457.5 715.1,455.9 715.6,452.0 716.9,450.4 718.4,451.3 719.9,450.7 720.2,449.4Z"/>
<path d="M723.0,445.5 724.2,447.2 724.7,449.7 725.5,451.3 724.2,451.7 723.5,449.4 722.5,447.2Z"/>
<path d="M724.2,463.9 727.5,466.5 729.3,468.4 731.6,470.6 731.3,471.3 728.5,470.6 727.0,472.9 724.2,470.6 722.2,467.4Z"/>
<path d="M563.8,218.7 565.3,221.2 566.1,226.6 567.9,231.9 568.1,238.0 567.4,242.6 566.1,241.9 564.8,233.7 563.6,228.4 562.3,223.0 562.8,219.4Z"/>
<path d="M566.1,216.6 569.9,216.2 572.4,220.1 575.5,225.5 572.4,226.6 570.4,224.8 567.4,223.7 565.6,221.2Z"/>
<path d="M571.9,230.2 575.0,231.2 576.7,235.5 574.5,234.8Z"/>
<path d="M573.7,235.5 578.8,240.8 583.8,245.5 586.8,249.0 585.6,249.7 581.3,246.9 579.5,244.4 576.2,239.8Z"/>
<path d="M575.5,254.3 577.5,256.1 581.3,260.3 585.6,264.8 584.6,265.2 580.0,261.0 576.2,256.8Z"/>
<path d="M581.3,255.0 585.1,258.5 590.1,263.1 589.1,263.8 584.6,259.6 581.0,256.1Z"/>
<path d="M615.4,283.0 616.7,281.6 621.8,281.6 627.6,282.7 628.1,284.8 621.8,286.1 616.7,284.8Z"/>
<path d="M610.1,281.3 612.9,280.9 614.9,282.0 612.9,282.7 610.4,282.0Z"/>
<path d="M614.7,288.6 619.2,287.5 623.0,289.3 630.6,290.3 635.7,291.0 630.6,291.7 623.0,291.0 616.7,290.0 614.7,289.3Z"/>
<path d="M606.6,293.4 609.1,292.4 611.6,293.4 609.1,294.8Z"/>
<path d="M621.3,296.2 626.8,295.5 634.4,296.5 635.7,297.6 628.1,298.6 621.8,297.6Z"/>
<path d="M648.8,300.0 642.0,296.5 635.7,294.1 631.1,293.4 631.4,295.5 638.2,297.6 643.3,299.6 648.8,301.4Z"/>
<path d="M638.7,302.1 644.5,303.4 649.6,305.5 648.3,306.2 643.3,304.5 638.7,303.1Z"/>
<path d="M625.6,303.1 628.6,303.1 628.6,304.5 625.6,304.1Z"/>
<path d="M502.3,498.9 504.9,499.9 505.4,501.4 503.6,502.1 502.3,500.5Z"/>
<path d="M559.3,522.8 562.3,522.5 563.3,524.1 561.0,524.7 559.3,524.1Z"/>
<path d="M563.1,525.3 564.8,525.6 567.9,527.5 569.1,529.7 567.4,531.3 564.8,530.6 563.1,528.1Z"/>
<path d="M550.9,371.6 553.5,371.3 553.7,373.0 551.7,373.3Z"/>
<path d="M341.5,498.0 355.0,496.5 368.3,495.2 382.0,497.0 396.6,496.6 405.0,494.0 413.6,492.4 427.8,486.7 439.0,482.5 445.0,480.0 449.0,479.3 452.0,480.0 456.0,482.5 459.0,483.0 461.7,488.1 462.0,493.0 466.0,496.6 470.2,497.5 474.0,494.0 478.7,490.5 481.0,492.0 480.7,495.2 478.0,502.0 475.9,508.0 470.2,517.9 464.6,524.9 463.0,531.0 341.5,531.0Z"/>
</g>
<g fill="#f1eee8" stroke="#cdc3da" stroke-width="0.5">
<path d="M585.1,264.5 587.6,266.6 591.4,270.1 590.6,270.8 586.8,267.3 584.6,265.2Z"/>
<path d="M572.4,250.4 575.0,251.8 577.5,253.9 576.7,254.6 573.7,252.5 571.9,251.1Z"/>
<path d="M563.1,238.4 565.3,240.5 567.4,243.7 566.6,244.4 564.3,241.6 562.3,239.1Z"/>
<path d="M341.5,289.8 347.9,292.0 353.9,292.3 357.0,290.0 359.8,291.5 363.0,289.0 365.8,287.6 368.5,285.5 367.5,283.0 371.0,279.4 376.2,274.9 380.7,272.7 384.5,274.0 386.0,271.5 384.4,270.8 388.2,269.8 391.0,268.0 392.8,267.6 397.4,266.9 403.7,264.5 407.2,262.0 408.5,258.5 410.5,255.0 414.0,250.4 415.1,249.3 418.6,247.2 421.9,245.5 426.4,245.8 430.2,247.6 433.5,249.7 434.0,248.3 438.1,250.8 441.4,253.2 445.9,256.1 449.2,258.5 449.7,256.8 451.7,258.2 454.5,259.2 457.1,261.3 459.6,264.8 460.3,269.1 460.3,272.6 461.1,276.0 461.9,278.8 464.4,282.0 466.2,285.4 467.2,290.0 466.9,294.5 465.9,297.2 466.7,298.3 468.2,296.9 470.7,296.9 473.0,298.3 472.0,301.7 473.8,303.1 475.8,303.4 478.3,305.2 479.1,306.9 480.8,308.9 482.1,310.7 483.1,313.4 481.3,314.4 480.8,316.5 482.6,317.2 484.1,316.2 485.1,315.1 486.2,315.8 490.2,316.8 493.5,318.6 496.5,322.3 498.8,326.4 500.8,328.5 505.9,331.2 508.4,334.6 509.7,338.0 511.2,339.0 515.5,342.4 518.0,345.8 519.8,348.1 521.1,347.8 523.6,349.5 526.9,351.8 529.9,354.2 530.7,355.9 532.2,355.5 534.0,354.2 536.0,353.8 540.3,354.5 542.6,355.9 544.1,356.5 544.9,354.9 548.6,355.2 551.7,359.6 552.9,362.6 555.7,367.6 556.5,370.6 557.8,369.3 561.0,368.9 563.3,369.9 566.1,371.6 566.9,373.6 564.3,375.6 562.8,377.6 564.8,376.6 566.9,376.0 569.9,375.6 573.9,374.3 577.5,378.3 579.5,382.6 579.5,384.9 577.5,388.3 580.8,390.6 583.8,392.2 586.8,395.9 589.4,396.5 592.4,394.9 596.0,394.2 598.0,397.2 599.8,400.2 600.0,402.8 600.8,407.1 603.5,412.3 606.1,417.6 607.1,425.1 609.1,430.9 610.6,432.2 609.4,438.1 606.1,438.1 602.8,439.7 601.0,441.7 603.5,443.9 602.5,448.1 601.3,450.1 600.3,452.3 598.2,453.3 596.2,454.6 596.2,458.1 596.5,461.0 597.2,463.2 599.8,464.2 603.3,463.9 606.8,464.2 608.4,462.3 609.1,458.8 609.9,456.8 611.9,453.9 613.7,452.3 616.2,451.0 620.0,447.2 619.7,443.3 619.2,439.4 619.7,436.5 621.3,435.2 627.1,431.6 631.1,432.2 632.9,432.6 635.7,428.3 633.9,426.7 633.7,422.1 634.4,416.3 630.6,414.3 629.4,413.0 625.1,409.7 621.3,409.0 618.7,407.7 618.0,404.8 618.7,400.8 621.3,397.8 621.0,393.2 623.5,390.9 624.3,388.3 626.1,384.9 627.8,382.6 631.9,380.3 636.2,380.6 635.7,382.9 639.5,384.9 645.0,386.6 649.6,386.6 653.4,387.9 654.1,389.6 655.7,394.5 656.4,397.2 658.7,400.5 662.2,402.1 665.0,403.1 666.0,398.8 666.8,396.5 668.3,391.6 667.6,389.2 666.8,387.6 663.8,383.6 659.0,380.0 655.9,376.0 654.4,374.6 650.9,372.6 642.5,368.6 638.2,364.9 636.2,363.3 632.9,361.2 627.3,358.9 620.5,356.2 615.9,353.8 612.4,352.5 609.1,350.5 604.3,347.8 602.8,344.7 603.3,342.0 606.8,339.3 610.1,336.9 609.9,333.6 605.8,331.2 602.3,331.9 597.7,332.2 588.9,332.2 583.6,332.2 580.0,329.5 576.2,327.8 572.9,325.7 572.9,323.7 567.4,320.9 565.1,317.2 560.3,313.4 557.5,310.7 555.2,306.5 553.7,303.8 551.9,296.9 550.7,291.7 549.7,288.9 547.9,284.4 546.4,280.2 545.1,276.0 542.3,273.6 539.5,273.2 535.0,270.1 529.9,265.9 527.1,263.4 523.3,261.3 518.5,258.2 514.2,253.2 513.0,251.1 511.2,245.5 510.4,240.8 511.7,236.2 513.2,231.9 515.5,230.5 518.0,226.2 516.3,224.1 513.5,223.4 512.2,220.5 510.4,217.6 507.4,214.0 508.2,209.7 510.9,206.8 515.5,205.0 518.8,206.1 520.6,206.8 523.6,205.0 526.6,203.2 530.2,201.8 531.4,198.2 535.7,197.4 539.5,198.9 540.8,200.3 542.8,198.9 543.1,196.7 544.6,197.1 547.1,199.6 548.6,201.4 548.9,203.2 547.6,205.0 543.8,205.8 542.1,206.8 542.6,209.4 543.6,213.3 544.3,216.6 545.1,220.1 545.4,221.9 548.4,226.6 550.2,229.4 552.4,233.0 553.7,231.2 554.7,228.4 556.0,225.9 558.8,221.9 560.0,220.1 560.8,218.4 561.0,216.2 562.3,212.6 565.8,213.0 568.4,214.0 569.1,215.1 572.2,218.7 574.7,220.5 577.5,225.2 577.5,230.2 578.0,235.2 581.8,241.6 586.3,246.2 591.1,250.1 588.9,250.8 584.6,251.5 583.8,253.6 585.6,256.1 587.9,258.5 591.1,262.4 597.0,266.6 599.8,268.7 602.5,269.8 603.3,272.6 603.3,275.0 604.6,277.1 607.8,277.8 611.6,277.4 616.4,277.8 619.2,279.2 622.8,279.9 627.6,282.3 631.1,285.1 635.2,288.6 639.2,291.7 641.5,293.4 642.0,294.8 644.8,296.9 646.3,297.9 648.3,300.0 650.4,301.0 653.1,302.4 655.9,305.2 658.2,307.2 661.5,309.6 664.3,311.7 666.8,314.1 669.1,315.8 669.6,314.4 671.6,315.1 673.6,316.8 677.2,319.9 679.7,322.3 682.0,324.7 683.5,326.4 685.0,329.8 686.3,331.9 688.8,333.6 690.6,334.6 693.9,335.6 696.1,336.3 695.9,338.6 694.4,341.4 692.3,343.7 693.9,345.8 693.9,349.1 692.3,352.8 693.9,354.5 693.1,358.2 692.3,362.2 691.8,365.6 690.6,369.9 689.3,375.3 691.3,378.3 693.4,381.3 692.9,384.9 691.3,383.9 688.8,382.3 689.6,384.6 691.8,387.6 694.4,389.9 697.2,391.6 699.9,393.6 703.0,394.9 705.3,398.2 706.5,400.8 706.5,404.1 707.3,406.7 709.6,408.1 711.1,409.0 712.1,411.0 713.1,413.0 712.1,415.3 713.6,417.9 716.6,420.2 719.2,423.4 721.7,426.7 724.2,429.3 725.5,430.9 724.7,433.9 722.2,435.2 720.9,439.1 720.2,443.3 721.7,441.7 723.7,442.0 724.7,439.7 725.5,435.8 728.8,436.5 731.8,440.0 733.8,444.6 734.3,448.1 734.3,451.0 737.4,452.0 740.7,451.3 744.5,452.0 748.3,451.3 751.3,450.7 754.6,449.4 759.6,450.1 764.7,450.1 768.0,461.0 768.0,30.0 341.5,30.0Z"/>
<path d="M768.0,459.0 764.7,453.9 759.6,452.6 754.6,451.7 751.6,452.0 750.3,453.6 747.0,456.5 741.4,455.2 739.4,460.0 735.1,463.9 736.9,468.1 739.7,473.2 743.2,474.5 747.0,477.6 748.5,485.6 746.5,488.8 747.0,492.9 749.3,496.4 749.5,499.2 752.1,500.2 756.1,500.5 755.9,496.7 757.9,493.5 760.2,492.9 761.4,496.1 763.4,498.3 765.5,502.4 766.5,506.2 768.0,509.0Z"/>
<path d="M596.5,453.0 594.2,455.5 589.4,463.2 587.4,466.5 585.3,470.3 584.3,474.1 582.3,477.6 582.3,480.8 582.5,483.7 585.6,486.2 586.8,490.0 587.4,491.6 588.4,493.5 583.6,496.4 583.1,498.0 583.1,501.8 583.6,503.7 582.3,504.6 576.2,502.4 574.2,502.7 570.9,501.1 567.1,500.2 565.6,497.0 561.0,491.6 553.2,490.4 547.9,488.5 542.8,484.3 539.3,483.1 536.5,481.1 531.4,477.6 527.1,475.4 525.1,475.1 520.8,475.4 519.0,472.9 515.0,468.1 516.8,461.0 521.1,458.1 522.6,455.9 524.9,459.4 526.4,460.7 529.7,460.0 531.4,456.8 531.9,455.5 537.5,454.6 538.8,457.8 543.1,458.1 545.9,461.6 547.1,462.0 555.2,460.4 558.5,461.0 563.6,461.0 570.7,459.4 573.7,456.5 579.3,456.8 581.3,457.1 585.6,455.2 585.8,453.0 586.6,454.9 590.9,453.9 593.2,452.0Z"/>
<path d="M434.0,354.5 437.8,357.2 441.4,358.2 442.4,359.2 444.7,363.6 442.1,365.9 444.7,366.3 446.7,368.6 445.2,371.0 446.2,373.0 446.7,375.6 449.2,379.0 446.4,384.3 444.2,387.3 446.9,393.9 446.2,398.5 445.4,401.8 445.2,406.1 444.2,412.0 444.2,419.5 442.6,421.2 442.4,425.1 441.4,426.1 440.4,425.1 437.8,425.1 434.0,422.5 431.3,422.5 430.0,425.4 428.7,427.0 428.7,430.0 424.4,433.2 423.2,432.9 419.4,433.5 417.8,430.6 416.1,428.3 414.3,430.6 412.5,429.3 412.3,425.7 413.5,425.1 412.5,422.8 413.8,419.9 413.0,416.3 412.5,414.6 414.3,409.7 414.6,404.1 416.1,405.8 416.8,403.1 416.1,399.8 413.8,401.1 413.0,398.2 412.3,395.2 415.1,393.2 414.8,386.9 412.5,385.3 411.3,380.6 410.8,378.0 408.2,377.3 407.0,378.0 406.7,375.6 406.2,372.0 407.5,366.6 408.2,364.3 409.2,366.3 411.0,368.3 413.0,368.6 415.1,369.3 418.1,367.9 420.9,366.3 424.9,362.9 427.0,361.2 429.7,358.9 431.8,355.2 433.0,355.2Z"/>
<path d="M438.6,294.8 439.9,296.5 440.6,300.3 440.4,303.1 439.6,305.5 440.9,308.9 441.9,312.4 441.9,316.8 442.4,322.0 442.1,326.1 439.6,330.2 438.3,334.2 438.3,336.9 437.8,340.7 437.6,343.0 436.8,344.7 435.3,345.4 435.0,347.4 432.8,350.8 432.3,350.1 430.7,350.1 430.2,347.8 426.4,346.8 424.4,345.1 423.4,342.0 425.7,340.3 422.9,339.3 419.6,338.3 422.9,333.6 421.6,332.2 418.1,333.6 418.4,331.2 420.4,325.7 417.8,325.0 416.6,321.3 420.4,320.3 416.8,316.8 419.4,315.1 421.1,309.6 422.1,310.0 424.7,308.6 426.7,307.6 430.7,304.5 435.8,306.2 436.8,302.8 437.1,296.5 437.3,295.2Z"/>
<path d="M456.0,303.8 457.3,301.7 460.3,301.4 461.9,301.4 463.9,299.6 464.4,300.0 463.6,303.4 463.1,305.2 461.1,304.1 459.6,304.1 457.3,304.5Z"/>
<path d="M697.2,404.8 699.7,403.1 702.7,402.5 704.5,403.5 704.7,405.8 704.5,409.0 704.5,411.7 708.5,414.6 709.3,417.2 706.5,415.9 703.2,414.3 702.5,411.3 698.9,407.4Z"/>
<path d="M721.2,446.8 723.0,452.0 723.0,453.6 726.3,456.8 726.8,459.4 723.0,459.7 719.7,459.1 718.9,455.9 717.4,456.8 716.4,457.5 715.1,455.9 715.6,452.0 716.9,450.4 718.4,451.3 719.9,450.7 720.2,449.4Z"/>
<path d="M723.0,445.5 724.2,447.2 724.7,449.7 725.5,451.3 724.2,451.7 723.5,449.4 722.5,447.2Z"/>
<path d="M724.2,463.9 727.5,466.5 729.3,468.4 731.6,470.6 731.3,471.3 728.5,470.6 727.0,472.9 724.2,470.6 722.2,467.4Z"/>
<path d="M563.8,218.7 565.3,221.2 566.1,226.6 567.9,231.9 568.1,238.0 567.4,242.6 566.1,241.9 564.8,233.7 563.6,228.4 562.3,223.0 562.8,219.4Z"/>
<path d="M566.1,216.6 569.9,216.2 572.4,220.1 575.5,225.5 572.4,226.6 570.4,224.8 567.4,223.7 565.6,221.2Z"/>
<path d="M571.9,230.2 575.0,231.2 576.7,235.5 574.5,234.8Z"/>
<path d="M573.7,235.5 578.8,240.8 583.8,245.5 586.8,249.0 585.6,249.7 581.3,246.9 579.5,244.4 576.2,239.8Z"/>
<path d="M575.5,254.3 577.5,256.1 581.3,260.3 585.6,264.8 584.6,265.2 580.0,261.0 576.2,256.8Z"/>
<path d="M581.3,255.0 585.1,258.5 590.1,263.1 589.1,263.8 584.6,259.6 581.0,256.1Z"/>
<path d="M615.4,283.0 616.7,281.6 621.8,281.6 627.6,282.7 628.1,284.8 621.8,286.1 616.7,284.8Z"/>
<path d="M610.1,281.3 612.9,280.9 614.9,282.0 612.9,282.7 610.4,282.0Z"/>
<path d="M614.7,288.6 619.2,287.5 623.0,289.3 630.6,290.3 635.7,291.0 630.6,291.7 623.0,291.0 616.7,290.0 614.7,289.3Z"/>
<path d="M606.6,293.4 609.1,292.4 611.6,293.4 609.1,294.8Z"/>
<path d="M621.3,296.2 626.8,295.5 634.4,296.5 635.7,297.6 628.1,298.6 621.8,297.6Z"/>
<path d="M648.8,300.0 642.0,296.5 635.7,294.1 631.1,293.4 631.4,295.5 638.2,297.6 643.3,299.6 648.8,301.4Z"/>
<path d="M638.7,302.1 644.5,303.4 649.6,305.5 648.3,306.2 643.3,304.5 638.7,303.1Z"/>
<path d="M625.6,303.1 628.6,303.1 628.6,304.5 625.6,304.1Z"/>
<path d="M502.3,498.9 504.9,499.9 505.4,501.4 503.6,502.1 502.3,500.5Z"/>
<path d="M559.3,522.8 562.3,522.5 563.3,524.1 561.0,524.7 559.3,524.1Z"/>
<path d="M563.1,525.3 564.8,525.6 567.9,527.5 569.1,529.7 567.4,531.3 564.8,530.6 563.1,528.1Z"/>
<path d="M550.9,371.6 553.5,371.3 553.7,373.0 551.7,373.3Z"/>
<path d="M341.5,498.0 355.0,496.5 368.3,495.2 382.0,497.0 396.6,496.6 405.0,494.0 413.6,492.4 427.8,486.7 439.0,482.5 445.0,480.0 449.0,479.3 452.0,480.0 456.0,482.5 459.0,483.0 461.7,488.1 462.0,493.0 466.0,496.6 470.2,497.5 474.0,494.0 478.7,490.5 481.0,492.0 480.7,495.2 478.0,502.0 475.9,508.0 470.2,517.9 464.6,524.9 463.0,531.0 341.5,531.0Z"/>
</g>
<g fill="#f1eee8" stroke="#f1eee8" stroke-width="1.5" stroke-linejoin="round">
<path d="M563.8,218.7 565.3,221.2 566.1,226.6 567.9,231.9 568.1,238.0 567.4,242.6 566.1,241.9 564.8,233.7 563.6,228.4 562.3,223.0 562.8,219.4Z" stroke-width="3.2"/>
<path d="M566.1,216.6 569.9,216.2 572.4,220.1 575.5,225.5 572.4,226.6 570.4,224.8 567.4,223.7 565.6,221.2Z" stroke-width="3.2"/>
<path d="M571.9,230.2 575.0,231.2 576.7,235.5 574.5,234.8Z" stroke-width="3.2"/>
<path d="M573.7,235.5 578.8,240.8 583.8,245.5 586.8,249.0 585.6,249.7 581.3,246.9 579.5,244.4 576.2,239.8Z" stroke-width="3.2"/>
<path d="M575.5,254.3 577.5,256.1 581.3,260.3 585.6,264.8 584.6,265.2 580.0,261.0 576.2,256.8Z" stroke-width="3.2"/>
<path d="M581.3,255.0 585.1,258.5 590.1,263.1 589.1,263.8 584.6,259.6 581.0,256.1Z" stroke-width="3.2"/>
<path d="M615.4,283.0 616.7,281.6 621.8,281.6 627.6,282.7 628.1,284.8 621.8,286.1 616.7,284.8Z"/>
<path d="M610.1,281.3 612.9,280.9 614.9,282.0 612.9,282.7 610.4,282.0Z"/>
<path d="M614.7,288.6 619.2,287.5 623.0,289.3 630.6,290.3 635.7,291.0 630.6,291.7 623.0,291.0 616.7,290.0 614.7,289.3Z"/>
<path d="M606.6,293.4 609.1,292.4 611.6,293.4 609.1,294.8Z"/>
<path d="M621.3,296.2 626.8,295.5 634.4,296.5 635.7,297.6 628.1,298.6 621.8,297.6Z"/>
<path d="M648.8,300.0 642.0,296.5 635.7,294.1 631.1,293.4 631.4,295.5 638.2,297.6 643.3,299.6 648.8,301.4Z"/>
<path d="M638.7,302.1 644.5,303.4 649.6,305.5 648.3,306.2 643.3,304.5 638.7,303.1Z"/>
<path d="M625.6,303.1 628.6,303.1 628.6,304.5 625.6,304.1Z"/>
<path d="M723.0,445.5 724.2,447.2 724.7,449.7 725.5,451.3 724.2,451.7 723.5,449.4 722.5,447.2Z"/>
<path d="M724.2,463.9 727.5,466.5 729.3,468.4 731.6,470.6 731.3,471.3 728.5,470.6 727.0,472.9 724.2,470.6 722.2,467.4Z"/>
<path d="M456.0,303.8 457.3,301.7 460.3,301.4 461.9,301.4 463.9,299.6 464.4,300.0 463.6,303.4 463.1,305.2 461.1,304.1 459.6,304.1 457.3,304.5Z"/>
</g>
<clipPath id="landclip">
<path d="M585.1,264.5 587.6,266.6 591.4,270.1 590.6,270.8 586.8,267.3 584.6,265.2Z"/>
<path d="M572.4,250.4 575.0,251.8 577.5,253.9 576.7,254.6 573.7,252.5 571.9,251.1Z"/>
<path d="M563.1,238.4 565.3,240.5 567.4,243.7 566.6,244.4 564.3,241.6 562.3,239.1Z"/>
<path d="M341.5,289.8 347.9,292.0 353.9,292.3 357.0,290.0 359.8,291.5 363.0,289.0 365.8,287.6 368.5,285.5 367.5,283.0 371.0,279.4 376.2,274.9 380.7,272.7 384.5,274.0 386.0,271.5 384.4,270.8 388.2,269.8 391.0,268.0 392.8,267.6 397.4,266.9 403.7,264.5 407.2,262.0 408.5,258.5 410.5,255.0 414.0,250.4 415.1,249.3 418.6,247.2 421.9,245.5 426.4,245.8 430.2,247.6 433.5,249.7 434.0,248.3 438.1,250.8 441.4,253.2 445.9,256.1 449.2,258.5 449.7,256.8 451.7,258.2 454.5,259.2 457.1,261.3 459.6,264.8 460.3,269.1 460.3,272.6 461.1,276.0 461.9,278.8 464.4,282.0 466.2,285.4 467.2,290.0 466.9,294.5 465.9,297.2 466.7,298.3 468.2,296.9 470.7,296.9 473.0,298.3 472.0,301.7 473.8,303.1 475.8,303.4 478.3,305.2 479.1,306.9 480.8,308.9 482.1,310.7 483.1,313.4 481.3,314.4 480.8,316.5 482.6,317.2 484.1,316.2 485.1,315.1 486.2,315.8 490.2,316.8 493.5,318.6 496.5,322.3 498.8,326.4 500.8,328.5 505.9,331.2 508.4,334.6 509.7,338.0 511.2,339.0 515.5,342.4 518.0,345.8 519.8,348.1 521.1,347.8 523.6,349.5 526.9,351.8 529.9,354.2 530.7,355.9 532.2,355.5 534.0,354.2 536.0,353.8 540.3,354.5 542.6,355.9 544.1,356.5 544.9,354.9 548.6,355.2 551.7,359.6 552.9,362.6 555.7,367.6 556.5,370.6 557.8,369.3 561.0,368.9 563.3,369.9 566.1,371.6 566.9,373.6 564.3,375.6 562.8,377.6 564.8,376.6 566.9,376.0 569.9,375.6 573.9,374.3 577.5,378.3 579.5,382.6 579.5,384.9 577.5,388.3 580.8,390.6 583.8,392.2 586.8,395.9 589.4,396.5 592.4,394.9 596.0,394.2 598.0,397.2 599.8,400.2 600.0,402.8 600.8,407.1 603.5,412.3 606.1,417.6 607.1,425.1 609.1,430.9 610.6,432.2 609.4,438.1 606.1,438.1 602.8,439.7 601.0,441.7 603.5,443.9 602.5,448.1 601.3,450.1 600.3,452.3 598.2,453.3 596.2,454.6 596.2,458.1 596.5,461.0 597.2,463.2 599.8,464.2 603.3,463.9 606.8,464.2 608.4,462.3 609.1,458.8 609.9,456.8 611.9,453.9 613.7,452.3 616.2,451.0 620.0,447.2 619.7,443.3 619.2,439.4 619.7,436.5 621.3,435.2 627.1,431.6 631.1,432.2 632.9,432.6 635.7,428.3 633.9,426.7 633.7,422.1 634.4,416.3 630.6,414.3 629.4,413.0 625.1,409.7 621.3,409.0 618.7,407.7 618.0,404.8 618.7,400.8 621.3,397.8 621.0,393.2 623.5,390.9 624.3,388.3 626.1,384.9 627.8,382.6 631.9,380.3 636.2,380.6 635.7,382.9 639.5,384.9 645.0,386.6 649.6,386.6 653.4,387.9 654.1,389.6 655.7,394.5 656.4,397.2 658.7,400.5 662.2,402.1 665.0,403.1 666.0,398.8 666.8,396.5 668.3,391.6 667.6,389.2 666.8,387.6 663.8,383.6 659.0,380.0 655.9,376.0 654.4,374.6 650.9,372.6 642.5,368.6 638.2,364.9 636.2,363.3 632.9,361.2 627.3,358.9 620.5,356.2 615.9,353.8 612.4,352.5 609.1,350.5 604.3,347.8 602.8,344.7 603.3,342.0 606.8,339.3 610.1,336.9 609.9,333.6 605.8,331.2 602.3,331.9 597.7,332.2 588.9,332.2 583.6,332.2 580.0,329.5 576.2,327.8 572.9,325.7 572.9,323.7 567.4,320.9 565.1,317.2 560.3,313.4 557.5,310.7 555.2,306.5 553.7,303.8 551.9,296.9 550.7,291.7 549.7,288.9 547.9,284.4 546.4,280.2 545.1,276.0 542.3,273.6 539.5,273.2 535.0,270.1 529.9,265.9 527.1,263.4 523.3,261.3 518.5,258.2 514.2,253.2 513.0,251.1 511.2,245.5 510.4,240.8 511.7,236.2 513.2,231.9 515.5,230.5 518.0,226.2 516.3,224.1 513.5,223.4 512.2,220.5 510.4,217.6 507.4,214.0 508.2,209.7 510.9,206.8 515.5,205.0 518.8,206.1 520.6,206.8 523.6,205.0 526.6,203.2 530.2,201.8 531.4,198.2 535.7,197.4 539.5,198.9 540.8,200.3 542.8,198.9 543.1,196.7 544.6,197.1 547.1,199.6 548.6,201.4 548.9,203.2 547.6,205.0 543.8,205.8 542.1,206.8 542.6,209.4 543.6,213.3 544.3,216.6 545.1,220.1 545.4,221.9 548.4,226.6 550.2,229.4 552.4,233.0 553.7,231.2 554.7,228.4 556.0,225.9 558.8,221.9 560.0,220.1 560.8,218.4 561.0,216.2 562.3,212.6 565.8,213.0 568.4,214.0 569.1,215.1 572.2,218.7 574.7,220.5 577.5,225.2 577.5,230.2 578.0,235.2 581.8,241.6 586.3,246.2 591.1,250.1 588.9,250.8 584.6,251.5 583.8,253.6 585.6,256.1 587.9,258.5 591.1,262.4 597.0,266.6 599.8,268.7 602.5,269.8 603.3,272.6 603.3,275.0 604.6,277.1 607.8,277.8 611.6,277.4 616.4,277.8 619.2,279.2 622.8,279.9 627.6,282.3 631.1,285.1 635.2,288.6 639.2,291.7 641.5,293.4 642.0,294.8 644.8,296.9 646.3,297.9 648.3,300.0 650.4,301.0 653.1,302.4 655.9,305.2 658.2,307.2 661.5,309.6 664.3,311.7 666.8,314.1 669.1,315.8 669.6,314.4 671.6,315.1 673.6,316.8 677.2,319.9 679.7,322.3 682.0,324.7 683.5,326.4 685.0,329.8 686.3,331.9 688.8,333.6 690.6,334.6 693.9,335.6 696.1,336.3 695.9,338.6 694.4,341.4 692.3,343.7 693.9,345.8 693.9,349.1 692.3,352.8 693.9,354.5 693.1,358.2 692.3,362.2 691.8,365.6 690.6,369.9 689.3,375.3 691.3,378.3 693.4,381.3 692.9,384.9 691.3,383.9 688.8,382.3 689.6,384.6 691.8,387.6 694.4,389.9 697.2,391.6 699.9,393.6 703.0,394.9 705.3,398.2 706.5,400.8 706.5,404.1 707.3,406.7 709.6,408.1 711.1,409.0 712.1,411.0 713.1,413.0 712.1,415.3 713.6,417.9 716.6,420.2 719.2,423.4 721.7,426.7 724.2,429.3 725.5,430.9 724.7,433.9 722.2,435.2 720.9,439.1 720.2,443.3 721.7,441.7 723.7,442.0 724.7,439.7 725.5,435.8 728.8,436.5 731.8,440.0 733.8,444.6 734.3,448.1 734.3,451.0 737.4,452.0 740.7,451.3 744.5,452.0 748.3,451.3 751.3,450.7 754.6,449.4 759.6,450.1 764.7,450.1 768.0,461.0 768.0,30.0 341.5,30.0Z"/>
<path d="M768.0,459.0 764.7,453.9 759.6,452.6 754.6,451.7 751.6,452.0 750.3,453.6 747.0,456.5 741.4,455.2 739.4,460.0 735.1,463.9 736.9,468.1 739.7,473.2 743.2,474.5 747.0,477.6 748.5,485.6 746.5,488.8 747.0,492.9 749.3,496.4 749.5,499.2 752.1,500.2 756.1,500.5 755.9,496.7 757.9,493.5 760.2,492.9 761.4,496.1 763.4,498.3 765.5,502.4 766.5,506.2 768.0,509.0Z"/>
<path d="M596.5,453.0 594.2,455.5 589.4,463.2 587.4,466.5 585.3,470.3 584.3,474.1 582.3,477.6 582.3,480.8 582.5,483.7 585.6,486.2 586.8,490.0 587.4,491.6 588.4,493.5 583.6,496.4 583.1,498.0 583.1,501.8 583.6,503.7 582.3,504.6 576.2,502.4 574.2,502.7 570.9,501.1 567.1,500.2 565.6,497.0 561.0,491.6 553.2,490.4 547.9,488.5 542.8,484.3 539.3,483.1 536.5,481.1 531.4,477.6 527.1,475.4 525.1,475.1 520.8,475.4 519.0,472.9 515.0,468.1 516.8,461.0 521.1,458.1 522.6,455.9 524.9,459.4 526.4,460.7 529.7,460.0 531.4,456.8 531.9,455.5 537.5,454.6 538.8,457.8 543.1,458.1 545.9,461.6 547.1,462.0 555.2,460.4 558.5,461.0 563.6,461.0 570.7,459.4 573.7,456.5 579.3,456.8 581.3,457.1 585.6,455.2 585.8,453.0 586.6,454.9 590.9,453.9 593.2,452.0Z"/>
<path d="M434.0,354.5 437.8,357.2 441.4,358.2 442.4,359.2 444.7,363.6 442.1,365.9 444.7,366.3 446.7,368.6 445.2,371.0 446.2,373.0 446.7,375.6 449.2,379.0 446.4,384.3 444.2,387.3 446.9,393.9 446.2,398.5 445.4,401.8 445.2,406.1 444.2,412.0 444.2,419.5 442.6,421.2 442.4,425.1 441.4,426.1 440.4,425.1 437.8,425.1 434.0,422.5 431.3,422.5 430.0,425.4 428.7,427.0 428.7,430.0 424.4,433.2 423.2,432.9 419.4,433.5 417.8,430.6 416.1,428.3 414.3,430.6 412.5,429.3 412.3,425.7 413.5,425.1 412.5,422.8 413.8,419.9 413.0,416.3 412.5,414.6 414.3,409.7 414.6,404.1 416.1,405.8 416.8,403.1 416.1,399.8 413.8,401.1 413.0,398.2 412.3,395.2 415.1,393.2 414.8,386.9 412.5,385.3 411.3,380.6 410.8,378.0 408.2,377.3 407.0,378.0 406.7,375.6 406.2,372.0 407.5,366.6 408.2,364.3 409.2,366.3 411.0,368.3 413.0,368.6 415.1,369.3 418.1,367.9 420.9,366.3 424.9,362.9 427.0,361.2 429.7,358.9 431.8,355.2 433.0,355.2Z"/>
<path d="M438.6,294.8 439.9,296.5 440.6,300.3 440.4,303.1 439.6,305.5 440.9,308.9 441.9,312.4 441.9,316.8 442.4,322.0 442.1,326.1 439.6,330.2 438.3,334.2 438.3,336.9 437.8,340.7 437.6,343.0 436.8,344.7 435.3,345.4 435.0,347.4 432.8,350.8 432.3,350.1 430.7,350.1 430.2,347.8 426.4,346.8 424.4,345.1 423.4,342.0 425.7,340.3 422.9,339.3 419.6,338.3 422.9,333.6 421.6,332.2 418.1,333.6 418.4,331.2 420.4,325.7 417.8,325.0 416.6,321.3 420.4,320.3 416.8,316.8 419.4,315.1 421.1,309.6 422.1,310.0 424.7,308.6 426.7,307.6 430.7,304.5 435.8,306.2 436.8,302.8 437.1,296.5 437.3,295.2Z"/>
<path d="M456.0,303.8 457.3,301.7 460.3,301.4 461.9,301.4 463.9,299.6 464.4,300.0 463.6,303.4 463.1,305.2 461.1,304.1 459.6,304.1 457.3,304.5Z"/>
<path d="M697.2,404.8 699.7,403.1 702.7,402.5 704.5,403.5 704.7,405.8 704.5,409.0 704.5,411.7 708.5,414.6 709.3,417.2 706.5,415.9 703.2,414.3 702.5,411.3 698.9,407.4Z"/>
<path d="M721.2,446.8 723.0,452.0 723.0,453.6 726.3,456.8 726.8,459.4 723.0,459.7 719.7,459.1 718.9,455.9 717.4,456.8 716.4,457.5 715.1,455.9 715.6,452.0 716.9,450.4 718.4,451.3 719.9,450.7 720.2,449.4Z"/>
<path d="M723.0,445.5 724.2,447.2 724.7,449.7 725.5,451.3 724.2,451.7 723.5,449.4 722.5,447.2Z"/>
<path d="M724.2,463.9 727.5,466.5 729.3,468.4 731.6,470.6 731.3,471.3 728.5,470.6 727.0,472.9 724.2,470.6 722.2,467.4Z"/>
<path d="M563.8,218.7 565.3,221.2 566.1,226.6 567.9,231.9 568.1,238.0 567.4,242.6 566.1,241.9 564.8,233.7 563.6,228.4 562.3,223.0 562.8,219.4Z"/>
<path d="M566.1,216.6 569.9,216.2 572.4,220.1 575.5,225.5 572.4,226.6 570.4,224.8 567.4,223.7 565.6,221.2Z"/>
<path d="M571.9,230.2 575.0,231.2 576.7,235.5 574.5,234.8Z"/>
<path d="M573.7,235.5 578.8,240.8 583.8,245.5 586.8,249.0 585.6,249.7 581.3,246.9 579.5,244.4 576.2,239.8Z"/>
<path d="M575.5,254.3 577.5,256.1 581.3,260.3 585.6,264.8 584.6,265.2 580.0,261.0 576.2,256.8Z"/>
<path d="M581.3,255.0 585.1,258.5 590.1,263.1 589.1,263.8 584.6,259.6 581.0,256.1Z"/>
<path d="M615.4,283.0 616.7,281.6 621.8,281.6 627.6,282.7 628.1,284.8 621.8,286.1 616.7,284.8Z"/>
<path d="M610.1,281.3 612.9,280.9 614.9,282.0 612.9,282.7 610.4,282.0Z"/>
<path d="M614.7,288.6 619.2,287.5 623.0,289.3 630.6,290.3 635.7,291.0 630.6,291.7 623.0,291.0 616.7,290.0 614.7,289.3Z"/>
<path d="M606.6,293.4 609.1,292.4 611.6,293.4 609.1,294.8Z"/>
<path d="M621.3,296.2 626.8,295.5 634.4,296.5 635.7,297.6 628.1,298.6 621.8,297.6Z"/>
<path d="M648.8,300.0 642.0,296.5 635.7,294.1 631.1,293.4 631.4,295.5 638.2,297.6 643.3,299.6 648.8,301.4Z"/>
<path d="M638.7,302.1 644.5,303.4 649.6,305.5 648.3,306.2 643.3,304.5 638.7,303.1Z"/>
<path d="M625.6,303.1 628.6,303.1 628.6,304.5 625.6,304.1Z"/>
<path d="M502.3,498.9 504.9,499.9 505.4,501.4 503.6,502.1 502.3,500.5Z"/>
<path d="M559.3,522.8 562.3,522.5 563.3,524.1 561.0,524.7 559.3,524.1Z"/>
<path d="M563.1,525.3 564.8,525.6 567.9,527.5 569.1,529.7 567.4,531.3 564.8,530.6 563.1,528.1Z"/>
<path d="M550.9,371.6 553.5,371.3 553.7,373.0 551.7,373.3Z"/>
<path d="M341.5,498.0 355.0,496.5 368.3,495.2 382.0,497.0 396.6,496.6 405.0,494.0 413.6,492.4 427.8,486.7 439.0,482.5 445.0,480.0 449.0,479.3 452.0,480.0 456.0,482.5 459.0,483.0 461.7,488.1 462.0,493.0 466.0,496.6 470.2,497.5 474.0,494.0 478.7,490.5 481.0,492.0 480.7,495.2 478.0,502.0 475.9,508.0 470.2,517.9 464.6,524.9 463.0,531.0 341.5,531.0Z"/>
</clipPath><g clip-path="url(#landclip)">
<g fill="none" stroke="#cfa0d6" stroke-width="0.5" opacity="0.62" stroke-linejoin="round">
<path d="M368.5,513.1 373.8,512.7 378.6,510.1 383.4,507.4 388.9,507.4 M422.1,578.8 420.6,573.7 416.7,569.7 414.9,564.8 414.4,559.2 410.2,555.4 409.7,549.8 406.0,545.8 405.2,540.3 401.9,536.1 400.1,531.1 398.3,526.2 396.1,521.4 392.5,517.3 391.6,511.9 388.9,507.4 M756.9,173.2 756.4,178.4 754.6,183.2 751.6,187.6 751.9,193.1 749.7,197.7 749.1,202.9 746.2,207.3 745.9,212.6 743.5,217.2 M368.5,513.1 363.6,511.0 359.8,506.9 354.4,505.8 349.9,503.2 344.5,502.0 340.2,498.9 335.3,496.8 331.4,493.0 326.1,491.7 322.0,488.3 M666.0,556.5 662.3,552.6 659.3,548.1 657.9,542.7 654.7,538.4 650.9,534.5 648.1,530.0 645.1,525.6 642.9,520.7 640.0,516.2 636.0,512.5 634.0,507.4 M634.0,507.4 630.0,510.6 624.8,511.6 620.8,514.8 615.8,516.0 611.9,519.5 607.5,522.0 603.0,524.3 597.9,525.4 M540.6,565.2 543.7,560.7 545.0,555.5 545.7,550.0 548.7,545.5 551.6,541.0 552.6,535.6 556.4,531.5 557.7,526.2 M597.9,525.4 592.6,522.9 589.1,518.1 M557.7,526.2 562.9,525.0 568.2,523.7 573.2,521.3 579.0,522.2 583.9,519.6 589.1,518.1 M609.1,477.7 604.7,481.9 598.6,483.5 594.8,488.6 588.7,490.2 584.0,493.9 M609.1,477.7 612.8,482.1 617.6,485.3 623.2,487.5 627.5,491.3 630.4,496.7 635.5,499.6 M635.5,499.6 634.0,507.4 M589.1,518.1 588.9,511.8 585.9,506.1 586.6,499.7 584.0,493.9 M690.2,213.9 694.3,210.7 696.2,205.4 701.4,203.1 702.8,197.5 707.4,194.6 M690.2,213.9 691.7,219.1 693.1,224.4 694.2,229.7 694.4,235.2 696.8,240.2 696.5,245.8 M707.4,194.6 710.9,198.8 716.5,199.9 720.0,204.0 724.9,206.2 728.2,210.6 733.1,212.7 737.5,215.5 741.8,218.5 M696.5,245.8 702.0,248.2 707.9,249.2 713.7,250.4 719.4,252.2 M719.4,252.2 723.0,247.8 728.4,245.7 732.2,241.7 736.1,237.7 740.4,234.2 M741.8,218.5 739.9,223.6 741.0,229.0 740.4,234.2 M743.5,217.2 741.8,218.5 M760.0,248.3 755.5,244.2 749.6,242.1 745.0,238.1 740.4,234.2 M760.0,248.3 765.0,248.0 769.8,246.2 775.1,247.7 780.0,246.9 784.8,245.2 789.8,244.7 794.6,242.7 799.7,243.5 804.7,243.1 809.5,241.2 814.5,240.8 819.5,240.3 824.3,238.4 829.1,237.1 834.2,236.8 839.3,237.2 844.3,236.8 849.3,236.7 854.0,234.3 858.9,233.3 864.0,233.4 868.8,231.9 873.8,231.5 878.9,231.5 883.9,231.3 888.6,228.9 893.6,228.4 898.7,228.6 903.7,228.1 908.5,226.3 913.6,227.1 918.5,226.1 923.7,226.6 928.6,225.8 933.4,224.2 938.2,221.9 943.3,222.5 948.1,221.0 953.1,220.3 958.0,219.0 963.2,220.2 968.1,219.4 972.9,217.5 977.8,216.7 983.1,218.3 987.9,216.2 992.9,216.0 997.7,213.9 1002.9,215.3 1007.8,213.9 1012.6,212.6 1017.4,210.7 1022.5,211.0 1027.3,209.1 1032.3,208.9 1037.5,209.9 1042.2,207.2 1047.2,206.8 1052.2,206.5 1057.4,207.7 1062.0,204.6 1067.1,204.6 1072.1,204.3 1076.8,202.1 1082.0,203.0 1086.8,200.8 1091.8,200.9 1096.8,200.2 1102.0,201.5 1106.7,199.1 1111.6,198.0 1116.6,197.4 1121.5,196.6 1126.4,195.5 1131.4,195.2 1136.6,195.7 1141.4,194.0 1146.3,192.9 1151.1,191.6 1156.4,193.1 1161.2,191.0 1166.1,190.2 1171.3,191.2 1176.3,190.9 1181.1,188.9 1185.8,186.8 1191.1,188.4 1196.0,187.5 1200.7,184.6 1205.7,184.7 1210.9,185.6 1215.7,183.8 1220.6,182.2 1225.9,183.9 1230.5,180.9 1235.4,180.1 1240.6,181.0 1245.7,181.1 1250.5,179.6 1255.2,176.9 1260.1,176.2 1265.2,176.0 1270.3,176.7 1275.4,176.9 1280.1,174.8 M740.6,158.5 737.1,154.6 736.2,149.3 733.8,144.9 729.7,141.3 729.6,135.6 725.6,132.0 723.4,127.5 722.1,122.4 718.9,118.4 M740.6,158.5 744.1,154.3 747.7,150.2 749.9,144.9 754.6,141.8 757.0,136.7 762.0,133.7 765.3,129.4 768.1,124.7 M718.9,118.4 724.3,116.9 729.5,114.9 735.1,113.9 740.2,111.5 745.3,109.3 750.4,106.7 M768.1,124.7 764.2,121.4 760.0,118.5 758.5,112.8 753.0,111.2 750.4,106.7 M740.5,159.2 740.6,158.5 M740.5,159.2 745.5,161.7 748.5,166.4 751.8,170.8 756.9,173.2 M705.9,181.5 700.3,181.2 694.8,181.4 689.2,181.5 683.7,180.6 678.2,179.5 672.7,179.1 667.2,178.9 661.7,177.7 M705.9,181.5 708.8,174.5 M708.8,174.5 707.3,169.2 705.0,164.3 702.4,159.6 697.8,156.0 696.5,150.5 692.5,146.5 690.9,141.3 M661.7,177.7 662.4,172.6 663.2,167.6 663.5,162.5 665.6,157.6 664.7,152.3 667.2,147.5 667.8,142.5 667.8,137.3 M667.8,137.3 673.5,138.7 679.5,138.1 685.3,139.2 690.9,141.3 M740.5,159.2 735.6,160.6 730.8,162.3 727.3,166.4 722.2,167.5 717.5,169.4 712.9,171.3 708.8,174.5 M707.4,194.6 705.5,188.2 705.9,181.5 M715.9,117.6 718.9,118.4 M715.9,117.6 712.3,122.2 708.4,126.5 703.0,129.0 699.5,133.7 694.6,136.9 690.9,141.3 M690.2,213.9 684.5,214.5 679.1,212.6 673.4,213.3 667.9,212.3 662.3,211.4 656.7,211.3 M661.7,177.7 659.6,179.4 M659.6,179.4 657.8,184.6 659.6,190.1 657.3,195.3 659.0,200.8 658.2,206.1 656.7,211.3 M668.4,261.6 673.4,259.5 677.2,255.2 683.0,254.6 687.7,252.1 691.4,247.7 696.5,245.8 M668.4,261.6 663.3,258.4 M663.3,258.4 662.4,252.9 660.8,247.7 660.3,242.1 657.4,237.1 655.6,231.9 655.6,226.2 652.4,221.4 651.6,215.8 M656.7,211.3 651.6,215.8 M768.5,491.3 763.6,488.1 757.9,487.3 M768.5,491.3 773.4,490.0 778.4,489.2 783.7,489.6 788.6,488.4 793.3,485.8 798.6,486.3 803.7,486.4 808.4,483.8 813.5,483.3 818.6,482.7 823.6,482.0 828.4,480.2 833.4,479.2 838.3,477.7 843.5,478.2 848.4,476.4 853.6,476.8 858.2,473.7 863.6,475.0 868.3,472.3 873.7,473.5 878.7,472.4 883.4,470.2 888.3,468.5 893.3,467.9 898.3,467.0 903.7,468.4 908.7,467.0 913.2,463.8 918.2,462.9 923.5,463.6 928.5,462.4 933.5,461.8 938.7,461.7 943.7,460.8 948.3,457.8 953.7,459.4 958.5,457.0 963.5,456.1 968.3,454.3 973.4,453.7 978.3,452.6 983.4,452.0 988.5,451.7 M751.2,437.7 747.9,442.0 745.4,446.8 742.2,451.2 738.4,455.1 M757.9,487.3 754.2,483.3 751.3,478.8 750.6,472.9 746.6,469.0 743.9,464.4 740.3,460.3 738.4,455.1 M750.4,106.7 752.4,101.9 750.1,96.5 752.2,91.7 M796.8,67.0 792.0,68.8 788.6,73.2 783.8,75.0 779.0,76.9 774.6,79.5 769.8,81.3 765.5,84.1 760.8,86.2 757.3,90.4 752.2,91.7 M377.9,468.4 371.8,468.0 365.7,467.2 359.7,465.6 353.7,464.6 M377.9,468.4 379.6,463.4 380.6,458.1 382.6,453.2 384.3,448.2 386.1,443.3 389.7,439.0 392.4,434.4 393.3,429.1 394.9,424.1 M353.7,464.6 352.0,459.6 352.4,454.3 351.3,449.2 349.9,444.2 350.7,438.9 348.3,434.0 348.3,428.8 M394.9,424.1 389.8,425.2 384.7,426.5 379.4,426.4 374.0,424.9 369.0,426.8 363.7,426.5 358.6,427.8 353.5,429.0 348.3,428.8 M428.2,203.9 432.0,207.4 435.1,211.6 439.0,215.1 442.0,219.3 446.6,222.2 449.0,227.0 M428.2,203.9 431.9,200.3 435.3,196.4 439.9,193.9 443.9,190.7 448.6,188.2 452.5,184.8 456.4,181.5 459.5,177.2 463.5,174.0 M449.0,227.0 453.0,223.3 458.3,221.5 461.4,216.5 466.2,214.0 469.9,210.0 475.6,208.6 479.8,205.3 483.8,201.5 M463.5,174.0 465.9,179.3 471.0,182.6 472.8,188.3 476.5,192.7 480.3,197.0 483.8,201.5 M421.8,258.9 426.1,255.9 431.1,253.9 434.9,250.3 440.1,248.6 444.5,245.7 448.2,241.8 M421.8,258.9 424.6,263.5 426.7,268.5 429.5,273.2 430.8,278.7 433.4,283.4 437.1,287.6 439.7,292.3 441.9,297.3 M448.2,241.8 453.3,244.1 457.6,247.8 462.5,250.6 467.4,253.3 472.5,255.7 M441.9,297.3 446.4,295.2 451.1,293.3 454.7,289.3 459.8,288.4 464.6,286.7 469.1,284.6 473.7,282.6 477.8,279.6 M472.5,255.7 474.6,261.5 473.9,267.9 475.1,273.9 477.8,279.6 M347.8,186.6 350.7,181.5 353.9,176.6 354.9,170.5 357.5,165.2 361.0,160.4 M361.0,160.4 358.8,155.4 358.4,150.0 356.9,144.8 M354.7,143.4 356.9,144.8 M591.8,285.8 595.6,289.3 600.7,290.5 604.2,294.5 608.7,296.8 614.2,297.3 618.6,299.9 621.4,304.9 626.5,306.2 M591.8,285.8 591.2,280.4 590.6,275.0 M590.6,275.0 594.5,271.4 597.9,267.5 599.8,262.4 602.4,257.8 607.6,255.4 610.0,250.6 M626.5,306.2 628.1,300.8 626.8,295.3 627.9,289.9 626.2,284.3 629.3,279.0 628.6,273.5 630.0,268.1 628.9,262.6 M628.9,262.6 625.1,259.1 620.4,256.9 615.9,254.4 612.4,250.6 M612.4,250.6 610.0,250.6 M574.5,305.2 578.0,301.4 582.3,298.2 585.0,293.6 588.5,289.7 591.8,285.8 M574.5,305.2 578.2,310.1 581.3,315.3 583.3,321.2 M628.3,309.6 624.2,313.8 619.5,317.3 614.6,320.6 610.0,324.1 M628.3,309.6 626.5,306.2 M583.3,321.2 588.5,323.1 594.0,321.7 599.4,322.1 604.6,324.3 610.0,324.1 M591.5,234.3 595.3,239.4 601.3,241.9 605.8,246.1 610.0,250.6 M591.5,234.3 586.3,236.6 581.4,239.7 576.0,241.8 570.2,242.6 565.2,245.6 559.6,246.9 M559.6,246.9 562.3,253.0 562.5,259.7 565.3,265.7 M565.3,265.7 570.4,267.5 575.4,269.6 580.3,271.7 585.3,273.8 590.6,275.0 M663.3,258.4 657.4,257.9 651.6,258.4 646.2,261.7 640.2,260.5 634.8,263.3 628.9,262.6 M635.8,215.9 641.0,214.8 646.3,215.1 651.6,215.8 M635.8,215.9 633.8,220.9 630.8,225.2 627.7,229.4 623.3,232.7 620.4,237.1 618.2,241.9 615.2,246.2 612.4,250.6 M449.0,227.0 447.8,234.3 448.2,241.8 M483.8,201.5 491.8,204.5 M472.5,255.7 476.6,252.4 479.6,247.8 484.3,245.1 487.8,241.1 492.3,238.2 497.3,235.8 500.3,231.2 M491.8,204.5 494.4,209.5 495.7,215.0 496.7,220.6 498.1,226.0 500.3,231.2 M522.1,259.8 522.7,252.5 524.4,245.3 M522.1,259.8 518.5,263.5 514.5,266.7 509.9,269.2 507.9,274.6 502.4,276.1 499.3,280.3 494.8,283.0 491.9,287.3 M491.9,287.3 487.0,285.0 482.7,281.8 477.8,279.6 M500.3,231.2 505.8,232.8 510.4,236.1 514.6,240.0 519.9,242.0 524.4,245.3 M631.6,310.7 633.9,315.5 635.0,321.0 638.5,325.2 640.5,330.2 643.2,334.9 646.4,339.3 646.8,345.1 650.8,349.2 652.8,354.2 M631.6,310.7 636.1,307.4 641.5,306.6 646.6,304.6 651.4,302.1 656.7,301.0 M652.8,354.2 656.3,350.5 659.1,346.2 664.6,344.5 667.3,340.1 670.4,336.0 674.6,333.1 678.3,329.6 681.5,325.7 685.3,322.4 M685.3,322.4 681.8,318.6 677.1,316.4 673.8,312.2 669.4,309.5 665.2,306.7 660.2,304.9 656.7,301.0 M668.4,261.6 668.8,267.3 670.3,272.8 M628.3,309.6 631.6,310.7 M670.3,272.8 666.8,276.8 665.0,281.8 664.8,287.5 661.8,291.9 660.3,297.0 656.7,301.0 M684.3,472.6 681.1,477.3 677.7,481.9 675.5,487.2 673.2,492.5 M684.3,472.6 689.6,475.3 695.2,477.2 700.5,480.0 706.2,481.8 711.8,484.0 M673.2,492.5 674.5,497.6 678.4,501.6 679.7,506.7 681.4,511.7 685.1,515.8 686.0,521.1 M686.0,521.1 691.1,519.3 696.6,518.3 700.7,514.0 706.4,513.8 711.5,511.8 716.3,509.2 M711.8,484.0 713.0,489.7 715.1,495.1 718.7,499.9 M716.3,509.2 718.7,499.9 M666.0,556.5 668.8,552.3 671.2,547.8 673.4,543.2 675.9,538.7 678.8,534.5 680.6,529.7 684.3,525.9 686.0,521.1 M635.5,499.6 640.4,495.3 M640.4,495.3 645.9,494.9 651.3,494.1 656.8,493.9 662.3,494.0 667.8,493.9 673.2,492.5 M743.8,546.6 741.5,541.9 738.2,537.9 734.0,534.6 730.3,530.8 727.6,526.5 724.4,522.4 722.4,517.5 718.3,514.1 716.3,509.2 M757.9,487.3 753.1,489.0 747.9,489.7 743.3,492.2 738.0,492.6 733.5,495.6 728.5,496.8 723.8,499.0 718.7,499.9 M738.4,455.1 733.4,457.2 727.9,457.0 M727.9,457.0 725.0,461.4 723.5,466.6 720.7,471.0 717.7,475.3 713.9,479.1 711.8,484.0 M743.8,546.6 747.1,542.6 747.1,537.0 749.2,532.4 753.3,528.7 754.3,523.6 756.9,519.3 759.5,514.9 760.7,509.9 761.6,504.8 765.7,501.1 767.5,496.4 768.5,491.3 M605.9,362.2 605.0,356.6 608.4,351.5 608.1,345.9 607.4,340.4 608.7,335.0 608.8,329.5 610.0,324.1 M605.9,362.2 612.0,367.3 M652.6,356.8 648.1,359.4 644.8,363.6 641.4,367.6 636.7,369.9 M652.6,356.8 652.8,354.2 M612.0,367.3 618.1,369.1 624.4,368.1 630.6,368.3 636.7,369.9 M727.9,457.0 723.5,453.2 717.9,451.2 714.0,446.7 709.0,443.8 704.4,440.3 M684.3,472.6 681.0,466.2 679.8,459.2 M679.8,459.2 684.7,457.1 688.3,453.3 691.3,448.7 696.9,447.6 700.5,443.8 704.4,440.3 M734.5,405.7 736.0,410.7 738.5,415.2 742.5,418.9 744.5,423.7 747.3,428.1 748.0,433.6 751.2,437.7 M734.5,405.7 729.2,406.2 724.9,409.1 720.1,410.7 715.0,411.6 710.7,414.7 706.0,416.6 M706.0,416.6 705.8,422.5 705.9,428.5 703.3,434.3 704.4,440.3 M715.9,117.6 712.1,113.2 709.6,108.2 708.6,102.3 703.7,98.6 701.4,93.4 699.5,88.0 M699.5,88.0 703.8,83.9 707.3,79.2 711.8,75.4 716.3,71.5 M752.2,91.7 747.2,88.2 744.6,82.4 739.3,79.1 735.8,74.2 732.3,69.3 M716.3,71.5 721.5,69.6 727.0,70.6 732.3,69.3 M796.8,67.0 791.6,65.7 787.1,62.7 781.6,62.0 777.3,58.5 772.1,57.0 767.9,53.3 762.2,53.2 757.4,50.8 753.1,47.1 747.8,46.1 M732.3,69.3 734.3,63.9 738.5,60.0 741.6,55.3 744.2,50.4 747.8,46.1 M629.3,98.2 634.0,101.3 637.4,105.8 642.4,108.6 646.4,112.3 649.9,116.7 653.8,120.7 658.0,124.2 661.1,129.0 665.6,132.3 M629.3,98.2 631.3,95.6 M631.3,95.6 636.2,94.2 641.2,93.7 646.2,92.5 651.2,91.8 656.3,91.3 660.9,89.1 666.0,88.4 670.8,86.9 675.4,84.3 680.6,84.5 M665.6,132.3 668.5,127.6 669.6,122.2 670.2,116.6 674.2,112.2 675.5,106.9 678.7,102.3 679.2,96.6 681.3,91.6 683.4,86.5 M683.4,86.5 680.6,84.5 M666.4,136.0 665.6,132.3 M666.4,136.0 667.8,137.3 M699.5,88.0 694.2,86.3 688.9,85.7 683.4,86.5 M631.3,95.6 632.6,90.7 632.1,85.6 632.6,80.5 634.0,75.6 635.0,70.7 634.3,65.5 M680.6,84.5 678.4,79.3 676.9,73.8 674.4,68.8 672.3,63.6 669.2,58.8 667.9,53.3 M667.9,53.3 663.3,55.6 658.5,57.5 653.0,57.2 649.2,61.6 644.2,62.8 639.4,64.6 634.3,65.5 M437.8,388.7 437.0,394.0 437.6,399.3 438.9,404.6 439.7,409.8 438.2,415.2 438.9,420.4 M437.8,388.7 432.6,386.5 427.2,385.3 422.0,383.6 416.5,382.4 411.1,381.2 M421.4,431.5 425.0,427.5 430.6,426.7 435.1,424.1 438.9,420.4 M421.4,431.5 415.8,430.9 410.8,428.8 406.0,425.5 400.8,424.0 395.1,423.9 M395.1,423.9 394.9,417.7 393.8,411.6 390.6,406.0 390.4,399.8 M411.1,381.2 406.2,384.1 402.2,387.9 399.3,393.0 393.7,395.1 390.4,399.8 M504.5,49.8 499.7,53.3 495.3,57.3 492.0,62.4 M504.5,49.8 509.2,52.8 515.2,52.4 520.2,54.5 524.6,58.2 530.4,58.3 535.3,60.6 540.3,62.9 M540.3,62.9 538.0,67.8 536.4,72.9 536.2,78.4 534.8,83.5 532.5,88.4 530.2,93.2 530.2,98.7 M522.8,103.4 530.2,98.7 M522.8,103.4 518.5,100.2 513.5,98.1 508.8,95.5 504.2,92.8 500.4,88.9 496.1,85.8 490.8,84.2 486.7,80.7 M486.7,80.7 489.2,74.8 490.6,68.6 492.0,62.4 M492.0,62.4 487.4,59.4 482.6,56.7 477.8,54.2 472.4,52.5 468.5,48.3 464.0,45.2 459.1,42.8 M393.0,125.3 392.5,119.6 391.1,114.3 388.1,109.5 M393.0,125.3 388.3,127.3 384.5,131.0 379.0,131.6 375.1,135.2 369.8,136.2 365.3,138.7 362.0,143.4 356.9,144.8 M343.8,116.0 346.2,111.4 349.6,107.6 354.3,105.1 357.3,101.0 361.0,97.5 364.1,93.5 M343.8,116.0 346.5,121.3 347.9,127.1 351.5,132.0 353.4,137.6 354.7,143.4 M388.1,109.5 383.7,105.7 378.0,103.7 373.1,100.8 369.1,96.3 364.1,93.5 M428.1,203.9 425.8,199.0 422.3,195.1 418.8,191.3 415.0,187.7 410.1,185.1 407.0,180.9 404.4,176.2 M428.1,203.9 428.2,203.9 M463.5,174.0 463.4,173.2 M463.4,173.2 459.8,169.0 455.9,165.1 452.8,160.5 447.3,158.2 444.5,153.2 M444.5,153.2 439.9,155.4 436.2,159.4 430.7,160.2 427.3,164.5 422.2,166.0 417.4,167.8 412.6,169.9 408.4,172.9 404.4,176.2 M361.0,160.4 365.7,163.1 371.2,163.5 375.9,166.3 381.0,167.9 386.0,169.6 390.9,171.7 396.1,173.1 401.1,175.1 M393.0,125.3 397.8,128.2 M397.8,128.2 398.5,133.4 397.7,138.7 398.4,143.9 397.8,149.1 398.3,154.3 399.1,159.5 401.5,164.6 400.7,169.9 401.1,175.1 M347.8,186.6 350.9,191.0 354.0,195.3 M354.0,195.3 359.0,196.6 364.1,197.4 369.3,195.7 374.4,195.6 379.3,198.5 384.5,197.9 M384.5,197.9 389.0,194.3 390.9,188.7 394.9,184.7 397.8,179.8 401.4,175.6 M401.1,175.1 401.4,175.6 M437.8,388.7 441.5,384.4 446.1,380.9 450.2,377.0 454.6,373.4 457.8,368.6 M473.7,431.1 468.6,429.9 463.8,428.1 458.7,426.7 454.2,423.6 448.8,423.4 444.2,420.8 438.9,420.4 M473.7,431.1 478.1,427.3 479.0,421.1 484.0,417.7 485.6,412.0 489.8,408.0 M457.8,368.6 461.0,372.5 463.9,376.7 468.4,379.6 470.4,384.5 473.4,388.7 477.4,392.0 480.1,396.3 483.6,399.9 487.4,403.4 489.8,408.0 M439.7,303.9 444.0,307.6 446.1,313.2 450.5,316.8 454.4,320.7 458.2,324.8 M439.7,303.9 441.9,297.3 M491.9,287.3 493.1,290.1 M458.2,324.8 464.3,324.8 470.2,323.9 476.1,322.7 481.9,320.9 M493.1,290.1 491.5,295.3 489.3,300.3 488.0,305.7 486.9,311.1 482.6,315.3 481.9,320.9 M444.8,472.7 445.7,480.0 444.1,487.3 M444.8,472.7 440.4,469.5 437.0,465.0 431.8,462.9 428.7,458.1 423.7,455.6 M423.7,455.6 420.7,460.1 416.5,463.1 411.9,465.8 407.6,468.7 403.3,471.7 399.2,474.9 395.4,478.4 392.1,482.5 M434.4,497.8 438.6,491.9 444.1,487.3 M434.4,497.8 429.6,495.8 424.3,498.2 419.4,496.4 414.4,496.2 409.3,496.7 404.4,495.7 399.7,492.8 394.5,493.8 M392.1,482.5 391.9,488.4 394.5,493.8 M473.7,431.1 475.8,437.2 475.6,444.0 478.7,449.8 M421.4,431.5 421.2,437.6 423.9,443.4 422.8,449.6 423.7,455.6 M478.7,449.8 475.0,453.4 470.6,456.1 465.6,457.8 462.3,462.0 457.8,464.5 454.1,468.2 449.4,470.2 444.8,472.7 M395.1,423.9 394.9,424.1 M377.9,468.4 383.1,472.7 388.2,477.0 392.1,482.5 M422.1,578.8 423.4,573.2 426.6,568.5 428.0,563.0 432.7,559.0 433.2,553.1 435.8,548.1 437.3,542.7 440.9,538.1 M388.9,507.4 392.6,500.9 394.5,493.8 M440.9,538.1 439.1,533.2 438.0,528.3 438.1,523.1 438.9,517.8 438.1,512.7 435.9,507.9 435.5,502.8 434.4,497.8 M322.0,488.3 325.7,483.9 331.7,482.5 336.0,478.8 339.6,474.2 345.2,472.2 348.5,467.2 353.7,464.6 M494.0,134.6 493.9,139.7 494.3,144.7 493.4,149.7 M494.0,134.6 499.4,132.2 504.3,128.8 509.9,127.0 514.8,123.7 520.4,121.8 M493.4,149.7 498.6,151.8 502.7,155.4 505.7,160.3 510.6,162.8 514.8,166.2 M520.4,121.8 524.6,126.0 528.4,130.5 533.5,133.9 537.8,138.0 541.3,142.9 M541.3,142.9 537.7,146.4 533.2,149.0 529.5,152.3 526.2,156.3 522.1,159.3 519.0,163.4 514.8,166.2 M463.4,173.2 468.5,170.9 472.2,166.8 476.8,163.9 480.3,159.5 485.0,156.6 489.5,153.6 493.4,149.7 M491.8,204.5 496.9,201.3 502.3,198.6 506.5,194.1 512.3,192.2 516.9,188.2 M514.8,166.2 515.8,171.6 515.8,177.2 517.4,182.6 516.9,188.2 M548.6,209.6 545.2,205.8 543.3,200.9 538.1,198.6 536.2,193.7 M548.6,209.6 548.3,215.3 546.0,220.5 544.5,225.9 543.2,231.4 542.5,237.0 M542.5,237.0 536.3,239.2 530.2,241.9 524.4,245.3 M536.2,193.7 531.4,192.0 526.2,192.0 521.7,189.5 516.9,188.2 M763.7,388.8 761.4,384.2 758.9,379.6 758.6,374.3 758.2,369.0 755.1,364.6 754.2,359.5 752.1,354.8 750.1,350.0 M763.7,388.8 768.9,388.1 773.6,390.4 778.4,392.4 783.5,392.1 788.6,391.7 793.3,394.2 798.4,394.2 803.2,395.7 808.2,396.2 813.3,396.1 818.3,396.5 823.2,397.3 828.2,397.4 833.0,399.7 838.2,398.3 842.8,401.5 848.1,400.3 853.0,401.3 857.9,402.5 862.9,402.3 867.8,403.9 873.0,403.0 877.6,406.1 882.8,404.5 887.5,407.5 892.4,408.2 897.4,408.7 902.4,409.3 907.6,408.3 912.4,410.1 917.6,409.3 922.2,412.0 927.2,412.9 932.4,411.9 937.2,413.3 942.3,412.9 947.0,415.3 952.0,416.1 957.2,414.9 961.9,417.3 966.8,418.8 972.0,417.4 976.7,420.3 981.9,419.1 987.0,419.0 991.9,419.9 996.6,422.6 1001.8,421.7 1006.4,424.3 1011.6,423.8 1016.7,423.4 1021.3,426.3 1026.5,425.6 1031.5,425.7 1036.5,426.0 1041.4,427.6 1046.3,428.8 1051.2,429.6 1056.1,430.6 1061.3,429.8 1066.3,430.2 1070.9,433.6 1076.0,432.9 1080.8,434.5 1085.7,435.7 1090.8,435.5 1095.7,436.6 1100.9,435.8 1105.8,436.5 1110.7,438.1 1115.4,440.2 1120.4,440.8 1125.7,439.4 1130.5,440.9 M750.1,350.0 755.1,348.9 759.8,346.4 764.8,345.0 769.6,343.3 775.2,343.8 779.6,340.5 784.6,339.2 789.2,336.6 794.8,337.2 799.1,333.5 804.7,334.1 809.1,330.9 814.1,329.3 818.8,327.2 824.0,326.6 829.5,326.8 834.1,323.9 M734.5,405.7 735.4,403.7 M735.4,403.7 739.9,400.9 744.6,398.3 749.9,396.9 753.9,393.1 759.4,392.0 763.7,388.8 M760.0,248.3 758.9,253.9 759.6,259.5 762.3,264.9 760.4,270.6 761.6,276.1 M761.6,276.1 766.2,278.5 771.0,280.0 776.0,280.9 781.3,281.1 785.6,284.3 790.6,285.5 795.5,286.8 800.1,289.1 805.4,289.0 810.1,291.0 814.7,293.3 819.3,295.6 824.1,297.4 829.0,298.6 834.4,298.4 839.1,300.4 843.8,302.2 848.7,303.5 853.9,304.0 858.5,306.3 862.8,309.5 868.2,309.4 872.6,312.4 877.4,313.9 882.6,314.4 887.0,317.1 891.8,318.8 897.1,318.9 M685.6,374.1 686.8,379.2 684.8,384.1 683.5,389.1 685.2,394.3 684.8,399.3 684.2,404.3 M685.6,374.1 693.7,369.2 M735.4,403.7 732.1,399.3 731.8,393.5 728.7,389.0 726.5,384.1 724.2,379.2 721.7,374.5 M684.2,404.3 688.0,407.8 692.9,409.3 697.2,411.8 701.7,414.0 706.0,416.6 M693.7,369.2 699.4,369.8 704.6,372.7 710.4,372.8 716.1,373.4 721.7,374.5 M750.1,350.0 744.7,349.3 740.3,346.3 M721.7,374.5 725.1,370.0 726.7,364.3 730.9,360.3 733.4,355.2 736.9,350.8 740.3,346.3 M685.6,374.1 680.5,372.3 675.7,369.9 671.3,366.8 666.2,365.2 661.7,362.4 657.6,358.7 652.6,356.8 M636.7,369.9 638.7,374.8 637.4,380.3 639.5,385.2 641.0,390.3 641.0,395.5 M684.2,404.3 679.1,405.9 675.0,409.3 670.1,411.2 M641.0,395.5 646.0,397.8 651.4,399.4 656.0,402.5 659.8,407.2 665.3,408.6 670.1,411.2 M734.8,-19.2 732.5,-14.6 729.7,-10.3 728.6,-5.1 726.0,-0.7 721.7,2.8 719.9,7.6 718.3,12.6 714.4,16.3 713.5,21.6 710.7,25.9 707.3,29.9 704.7,34.3 703.2,39.3 M703.2,39.3 698.5,41.1 693.1,40.3 688.8,43.7 683.9,44.7 678.9,45.2 673.9,46.2 669.1,47.5 M667.9,53.3 669.1,47.5 M634.3,65.5 631.0,61.7 627.5,58.1 624.8,53.7 620.8,50.6 M620.8,50.6 621.0,45.5 622.4,40.6 624.0,35.8 625.6,30.9 624.6,25.6 625.8,20.7 627.1,15.8 627.4,10.8 629.0,5.9 631.2,1.2 630.0,-4.1 632.7,-8.8 633.8,-13.7 633.5,-18.9 634.0,-23.9 635.3,-28.8 M591.8,61.7 588.5,57.4 587.4,52.0 585.9,46.9 582.4,42.7 579.8,38.0 579.1,32.5 575.0,28.6 573.8,23.3 572.1,18.2 569.1,13.7 M591.8,61.7 596.6,59.9 601.2,57.4 606.4,56.4 611.0,53.8 616.1,52.9 620.8,50.6 M569.1,13.7 570.1,8.8 570.2,3.8 570.3,-1.2 568.4,-6.3 569.0,-11.3 570.3,-16.3 570.3,-21.3 571.2,-26.2 569.9,-31.3 568.9,-36.3 569.1,-41.3 569.1,-46.3 570.7,-51.3 570.2,-56.3 569.4,-61.3 572.2,-66.2 569.7,-71.3 570.7,-76.3 572.1,-81.3 571.9,-86.3 570.7,-91.3 573.0,-96.2 571.6,-101.3 572.8,-106.3 571.7,-111.3 572.5,-116.3 573.6,-121.3 571.0,-126.3 572.6,-131.3 572.8,-136.3 574.1,-141.3 573.1,-146.3 572.2,-151.3 571.9,-156.3 573.3,-161.3 572.2,-166.3 572.9,-171.3 574.8,-176.3 572.6,-181.3 572.8,-186.3 574.3,-191.3 573.9,-196.3 575.3,-201.3 573.6,-206.3 575.0,-211.3 574.1,-216.3 576.0,-221.3 575.9,-226.3 573.8,-231.3 574.5,-236.3 574.9,-241.3 575.0,-246.3 575.5,-251.3 575.9,-256.3 574.4,-261.3 576.0,-266.3 576.6,-271.3 575.5,-276.3 575.2,-281.3 575.3,-286.3 576.4,-291.3 575.1,-296.3 575.5,-301.3 575.9,-306.3 577.1,-311.3 577.4,-316.3 576.9,-321.3 575.9,-326.3 576.6,-331.3 575.8,-336.3 578.8,-341.3 577.3,-346.3 578.5,-351.3 576.9,-356.3 577.1,-361.3 576.8,-366.3 577.6,-371.3 578.6,-376.3 578.3,-381.3 577.8,-386.3 577.3,-391.4 577.9,-396.3 579.5,-401.3 577.8,-406.4 578.9,-411.3 M716.3,71.5 715.5,65.6 712.9,60.4 708.8,55.8 706.2,50.6 706.3,44.3 703.2,39.3 M747.8,46.1 745.5,41.3 746.3,35.9 744.8,31.0 743.5,26.0 743.0,20.9 740.4,16.2 741.5,10.8 740.8,5.7 737.4,1.1 737.2,-4.0 737.8,-9.4 734.9,-14.0 734.8,-19.2 M423.3,39.4 428.8,43.3 432.2,49.4 437.5,53.4 M459.1,42.8 453.0,44.1 447.6,46.8 443.3,51.6 437.5,53.4 M540.3,62.9 542.8,62.2 M542.8,62.2 544.3,57.2 546.3,52.7 549.0,48.4 551.9,44.3 556.0,40.8 557.8,36.1 558.7,30.9 561.7,26.8 564.4,22.6 565.8,17.7 569.1,13.7 M354.0,195.3 354.7,201.1 353.6,206.6 352.6,212.2 352.8,217.8 349.3,223.1 348.7,228.7 349.4,234.4 M349.4,234.4 344.3,235.3 339.2,236.2 333.9,236.7 328.6,236.7 323.7,238.7 318.3,238.0 313.1,238.7 308.3,241.6 303.0,241.5 297.6,241.2 292.8,243.9 287.3,242.7 282.4,245.0 277.1,245.3 272.2,247.8 266.9,247.7 261.7,247.8 256.7,249.9 251.2,248.4 246.3,251.0 241.1,251.3 235.9,252.3 M455.4,360.0 458.4,365.3 M455.4,360.0 450.8,357.1 445.2,356.3 440.7,353.1 435.8,350.9 430.8,348.6 425.3,347.8 420.4,345.6 415.6,343.0 M411.1,381.2 410.2,376.1 408.6,371.2 407.5,366.1 406.6,361.0 405.9,355.8 404.0,351.0 M457.8,368.6 458.4,365.3 M415.6,343.0 410.4,347.9 404.0,351.0 M439.7,303.9 435.8,307.2 431.6,309.9 426.6,311.4 422.3,313.9 M458.2,324.8 458.7,329.9 456.1,334.8 457.9,340.0 456.8,345.0 455.4,349.9 456.5,355.1 455.4,360.0 M415.6,343.0 415.7,336.9 417.5,331.2 420.2,325.7 420.5,319.6 422.3,313.9 M401.5,228.3 396.1,223.6 389.4,221.3 M401.5,228.3 404.3,233.7 405.7,239.5 407.0,245.4 409.3,250.9 410.7,256.7 M389.4,221.3 384.5,224.0 379.7,226.7 374.1,227.8 368.7,229.3 364.1,232.6 358.2,233.1 353.7,236.6 M401.0,263.0 396.1,262.0 391.0,262.0 386.0,261.3 380.9,260.9 375.8,260.7 371.0,258.9 366.0,258.1 M401.0,263.0 405.9,260.0 410.7,256.7 M366.0,258.1 363.7,252.3 358.8,248.0 355.6,242.7 353.7,236.6 M428.1,203.9 423.5,206.5 420.8,211.2 416.3,213.9 412.1,217.0 409.6,221.8 406.0,225.5 401.5,228.3 M384.5,197.9 384.9,203.9 387.5,209.4 388.2,215.4 389.4,221.3 M404.4,176.2 401.4,175.6 M421.8,258.9 415.9,259.3 410.7,256.7 M349.4,234.4 353.7,236.6 M354.6,284.7 359.4,287.2 364.5,289.2 369.7,290.9 374.6,293.2 378.5,297.6 383.5,299.9 388.9,301.1 M354.6,284.7 356.4,279.1 358.7,273.8 361.0,268.5 363.3,263.2 366.0,258.1 M390.3,300.5 388.9,301.1 M390.3,300.5 391.5,295.1 394.7,290.2 393.5,284.1 396.0,279.0 398.1,273.8 399.8,268.5 401.0,263.0 M422.3,313.9 416.8,312.1 411.9,308.8 406.2,307.4 400.6,305.9 396.1,301.6 390.3,300.5 M354.6,284.7 347.8,287.9 M470.1,114.3 467.9,118.9 463.8,122.2 460.4,125.9 459.4,131.4 455.1,134.5 452.2,138.6 450.4,143.4 446.1,146.6 444.3,151.4 M470.1,114.3 467.8,108.5 467.7,102.3 466.5,96.4 M466.5,96.4 462.0,93.6 456.7,93.5 452.2,91.1 446.9,91.0 442.1,89.3 M442.1,89.3 438.9,93.8 436.4,98.7 433.0,103.0 430.1,107.6 427.3,112.3 424.3,116.9 422.9,122.4 419.3,126.6 M419.3,126.6 422.5,130.5 425.8,134.3 429.5,137.8 434.3,140.1 437.0,144.4 441.8,146.9 444.3,151.4 M494.0,134.6 491.0,130.2 486.3,127.5 481.6,125.0 478.3,120.8 473.7,118.1 470.1,114.3 M444.5,153.2 444.3,151.4 M520.4,121.8 521.4,115.6 522.8,109.6 522.8,103.4 M486.7,80.7 482.0,83.0 477.7,85.8 474.3,89.7 470.4,93.1 466.5,96.4 M437.6,84.4 437.7,79.2 436.6,74.1 436.2,68.9 438.7,63.7 439.0,58.6 437.5,53.4 M437.6,84.4 442.1,89.3 M437.6,84.4 432.2,83.1 426.5,84.6 421.0,83.0 415.4,83.9 409.9,82.6 M409.9,82.6 406.7,87.4 401.9,91.0 398.0,95.2 396.5,101.4 391.1,104.5 388.1,109.5 M397.8,128.2 403.2,128.4 408.6,128.0 413.8,125.9 419.3,126.6 M396.0,52.9 395.7,58.9 394.4,64.8 M396.0,52.9 393.2,48.7 388.6,46.1 385.1,42.4 382.4,38.0 378.3,34.9 375.1,31.0 371.4,27.4 368.8,23.0 M394.4,64.8 390.0,67.7 385.4,70.0 380.3,71.2 375.6,73.5 371.1,76.1 366.3,78.1 361.2,79.3 M368.8,23.0 367.0,28.2 365.8,33.6 363.0,38.4 361.6,43.8 357.6,48.1 357.2,53.9 354.1,58.5 353.0,64.0 349.8,68.6 M349.8,68.6 353.2,72.6 356.4,76.8 361.2,79.3 M423.3,39.4 418.5,41.1 414.8,45.0 410.1,47.0 405.6,49.3 400.1,49.6 396.0,52.9 M409.9,82.6 405.1,79.0 402.7,73.2 398.9,68.7 394.4,64.8 M364.1,93.5 363.6,86.2 361.2,79.3 M522.1,259.8 525.6,264.2 528.9,268.7 532.3,273.0 534.9,278.0 538.6,282.2 541.4,287.1 545.2,291.2 M493.1,290.1 497.6,292.8 501.3,296.6 506.1,298.9 511.0,300.9 515.0,304.3 M515.0,304.3 520.0,301.9 524.8,299.2 530.6,298.9 534.6,294.4 540.0,293.2 545.2,291.2 M574.5,305.2 569.5,304.5 564.6,303.1 559.3,303.6 554.6,301.6 M565.3,265.7 561.9,269.8 560.1,275.0 556.7,279.1 553.5,283.4 551.1,288.1 546.9,291.7 M554.6,301.6 551.9,295.7 546.9,291.7 M559.6,246.9 553.2,244.8 548.8,239.2 542.5,237.0 M545.2,291.2 546.9,291.7 M482.7,504.2 485.6,511.1 M482.7,504.2 484.1,499.4 485.7,494.5 485.5,489.4 486.2,484.4 486.8,479.4 487.9,474.5 488.1,469.4 488.5,464.4 490.3,459.6 M489.3,513.4 494.4,513.2 499.5,513.5 504.6,513.6 509.7,513.0 514.6,511.4 M489.3,513.4 485.6,511.1 M514.6,511.4 518.7,508.2 521.8,503.8 526.4,501.0 529.5,496.6 534.8,494.7 537.9,490.4 M500.4,459.9 495.4,459.0 490.3,459.6 M500.4,459.9 504.8,462.9 509.1,466.2 512.2,470.8 517.3,473.1 522.1,475.6 525.2,480.4 529.8,483.1 534.6,485.8 538.0,490.0 M538.0,490.0 537.9,490.4 M440.9,538.1 445.9,536.3 449.4,532.0 453.8,529.2 458.8,527.4 462.9,524.0 467.5,521.5 472.1,519.1 477.3,517.6 481.3,514.0 485.6,511.1 M444.1,487.3 449.0,489.2 453.4,492.5 458.1,494.8 462.9,496.9 468.8,496.6 472.7,500.8 477.6,502.9 482.7,504.2 M478.7,449.8 482.2,453.6 486.0,456.8 490.3,459.6 M540.6,565.2 538.7,560.1 535.1,555.8 534.7,550.0 531.9,545.3 528.1,541.1 526.5,535.8 523.2,531.4 521.0,526.4 519.7,521.0 516.0,516.8 514.6,511.4 M557.7,526.2 553.9,522.5 553.0,517.1 550.6,512.6 548.9,507.7 544.1,504.5 542.4,499.6 539.4,495.4 537.9,490.4 M489.8,408.0 495.0,407.6 499.6,405.7 503.7,402.2 508.7,401.5 513.5,400.0 M513.5,400.0 516.5,404.6 520.0,408.7 523.7,412.8 527.0,417.1 531.2,420.8 534.9,424.8 537.3,429.9 M537.3,429.9 533.8,434.0 529.1,436.5 525.7,440.7 520.2,442.3 517.2,447.0 513.6,451.0 508.3,452.9 504.2,456.2 500.4,459.9 M559.3,460.8 557.5,465.8 557.3,471.1 556.1,476.2 M559.3,460.8 557.3,455.2 553.7,450.6 551.3,445.3 547.9,440.6 543.6,436.5 541.1,431.2 M556.1,476.2 551.7,479.8 547.6,483.8 542.3,486.3 538.0,490.0 M541.1,431.2 537.3,429.9 M556.1,476.2 560.9,478.9 565.5,482.0 570.3,484.7 575.2,487.2 579.2,491.2 584.0,493.9 M666.4,136.0 661.3,136.9 656.8,139.5 652.1,141.7 646.8,141.8 641.9,143.3 637.1,145.1 632.0,145.8 627.0,147.1 622.3,149.1 617.6,151.4 M659.6,179.4 654.6,177.7 649.8,175.3 644.4,175.0 639.2,173.7 633.8,173.2 628.8,171.5 623.8,169.5 M617.6,151.4 620.1,157.3 622.4,163.3 623.8,169.5 M635.8,215.9 631.0,212.5 626.5,208.8 622.0,205.1 618.6,200.2 614.1,196.4 M623.8,169.5 622.1,175.0 619.1,180.0 617.4,185.4 614.8,190.6 614.1,196.4 M591.5,234.3 592.3,229.1 589.4,224.1 590.6,218.9 590.9,213.7 587.9,208.8 588.7,203.5 M614.1,196.4 609.3,198.9 604.3,200.6 599.1,201.6 593.4,200.8 588.7,203.5 M548.6,209.6 553.9,209.5 558.5,206.1 563.6,204.5 568.7,203.5 574.4,204.5 579.1,201.7 584.4,201.0 M588.7,203.5 584.4,201.0 M547.4,143.8 549.2,149.6 551.8,155.1 553.6,160.8 555.4,166.6 M547.4,143.8 553.0,140.3 558.8,137.2 563.4,132.3 M563.4,132.3 568.7,133.9 572.8,137.6 577.0,141.1 581.6,144.1 586.5,146.5 591.7,148.3 596.0,151.7 M555.4,166.6 561.5,167.4 567.0,170.1 572.2,173.2 577.9,175.1 M577.9,175.1 582.5,171.2 585.4,165.9 589.0,161.2 592.1,156.2 596.0,151.7 M541.3,142.9 547.4,143.8 M536.2,193.7 540.0,189.6 543.7,185.5 545.7,180.1 549.3,175.9 552.3,171.1 555.4,166.6 M584.4,201.0 582.4,196.0 583.0,190.4 579.3,185.8 579.0,180.4 577.9,175.1 M617.6,151.4 613.3,147.8 M613.3,147.8 607.2,147.9 601.7,150.2 596.0,151.7 M617.7,103.1 612.6,110.4 M617.7,103.1 614.3,99.3 610.8,95.8 608.1,91.5 605.9,86.9 602.6,83.1 599.4,79.3 597.0,74.8 592.6,71.9 589.8,67.8 M612.6,110.4 607.2,111.1 601.7,110.1 596.2,109.3 590.8,110.0 585.3,109.6 579.9,109.7 574.4,112.2 568.9,110.8 M589.8,67.8 584.7,70.0 580.4,73.6 575.0,75.0 570.4,78.0 M570.4,78.0 568.7,83.5 567.8,89.0 568.8,94.9 567.4,100.3 566.2,105.8 M566.2,105.8 568.9,110.8 M629.3,98.2 623.9,101.6 617.7,103.1 M613.3,147.8 614.2,142.5 613.7,137.1 613.2,131.8 613.1,126.4 613.5,121.1 612.6,115.7 612.6,110.4 M591.8,61.7 589.8,67.8 M563.4,132.3 563.8,126.7 567.5,121.9 568.3,116.4 568.9,110.8 M542.8,62.2 547.4,64.8 551.9,67.6 557.1,69.3 561.6,72.1 566.5,74.2 570.4,78.0 M530.2,98.7 535.2,100.2 540.3,101.7 545.7,101.1 550.9,101.9 555.9,103.6 561.1,104.2 566.2,105.8 M736.4,340.1 730.9,338.7 725.1,339.5 719.6,338.8 714.0,337.8 708.6,335.8 702.8,336.2 M736.4,340.1 738.0,334.7 737.2,328.9 738.2,323.5 738.9,318.0 741.6,312.8 742.1,307.3 M706.3,296.8 703.1,301.6 701.5,307.3 698.4,312.2 694.0,316.4 692.1,322.0 M706.3,296.8 710.4,293.5 715.8,293.4 720.6,291.6 724.8,288.7 M692.1,322.0 695.3,327.0 699.7,331.1 702.8,336.2 M742.1,307.3 740.3,302.4 738.4,297.6 734.9,293.7 M724.8,288.7 729.8,291.4 734.9,293.7 M693.7,369.2 695.6,363.8 697.1,358.3 699.5,353.1 701.2,347.6 701.8,341.8 702.8,336.2 M740.3,346.3 736.4,340.1 M685.3,322.4 692.1,322.0 M670.3,272.8 674.9,275.7 680.0,277.8 683.8,281.7 688.4,284.6 692.5,288.2 697.3,290.7 702.2,293.1 706.3,296.8 M719.4,252.2 721.1,257.3 720.2,262.7 721.5,267.9 721.7,273.2 724.2,278.1 724.2,283.5 724.8,288.7 M761.6,276.1 757.8,280.0 753.2,282.8 748.5,285.3 744.2,288.4 738.6,289.6 734.9,293.7 M612.0,367.3 611.4,372.6 608.5,377.1 607.9,382.4 603.9,386.5 604.3,392.1 600.4,396.3 600.2,401.7 598.3,406.5 596.1,411.3 M641.0,395.5 638.6,400.2 634.0,403.1 632.0,408.1 627.3,410.9 624.4,415.1 M624.4,415.1 618.7,414.3 613.0,414.2 607.5,412.4 601.9,411.4 596.1,411.3 M559.3,460.8 563.5,457.6 569.2,457.9 573.8,455.7 578.4,453.5 583.3,451.8 587.3,448.1 592.2,446.5 M573.5,405.5 570.1,409.6 565.5,412.1 560.5,414.2 556.9,417.9 554.0,422.5 548.7,424.2 544.6,427.2 541.1,431.2 M573.5,405.5 578.4,407.2 583.1,409.6 587.8,412.0 593.1,412.8 M593.1,412.8 593.2,418.4 591.9,424.0 592.4,429.6 591.6,435.2 591.3,440.9 592.2,446.5 M609.1,477.7 608.0,472.7 608.1,467.7 609.3,462.6 609.1,457.6 M592.2,446.5 596.6,448.9 600.9,451.6 605.7,453.6 609.1,457.6 M678.6,458.5 676.0,453.4 675.0,447.6 670.9,443.2 667.9,438.3 665.8,432.9 663.7,427.6 M678.6,458.5 673.3,459.1 668.3,461.7 663.0,462.1 657.5,461.9 652.4,463.3 647.0,463.8 M663.7,427.6 657.8,428.8 652.6,432.3 647.0,434.3 640.5,433.7 635.2,436.7 M647.0,463.8 643.7,459.3 639.6,455.6 635.7,451.7 631.6,448.0 M631.6,448.0 632.5,442.1 635.2,436.7 M679.8,459.2 678.6,458.5 M670.1,411.2 669.0,417.1 666.0,422.2 663.7,427.6 M640.4,495.3 642.1,490.1 642.5,484.7 643.7,479.5 643.6,474.0 647.2,469.3 647.0,463.8 M624.4,415.1 627.8,420.2 630.1,425.7 631.7,431.7 635.2,436.7 M609.1,457.6 615.2,456.4 620.2,452.4 625.9,450.3 631.6,448.0 M593.1,412.8 596.1,411.3 M348.3,428.8 344.8,423.8 339.8,420.3 334.8,416.8 331.4,411.8 M390.4,399.8 384.8,397.2 379.8,393.6 374.8,389.9 M374.8,389.9 370.7,393.7 365.8,396.0 359.8,396.2 355.1,398.7 350.3,401.2 346.2,405.0 341.3,407.3 335.7,408.2 331.4,411.8 M331.4,411.8 326.2,411.4 321.8,408.6 316.9,407.1 312.5,404.4 307.7,402.9 303.2,400.3 298.4,398.7 293.3,398.1 288.8,395.5 283.7,394.8 278.6,394.2 274.1,391.7 269.1,390.7 264.9,387.2 260.0,385.9 254.6,386.2 250.3,382.9 245.5,381.3 240.9,379.3 235.5,379.4 231.1,376.7 M458.4,365.3 463.5,363.9 468.2,360.9 473.5,360.1 478.5,358.3 483.5,356.7 488.6,355.2 493.8,353.9 498.4,351.1 503.8,350.5 M513.5,400.0 514.2,398.2 M514.2,398.2 513.1,392.9 510.7,387.9 511.3,382.2 508.2,377.3 508.4,371.8 505.8,366.8 507.0,361.0 506.3,355.6 503.8,350.5 M481.9,320.9 484.6,325.4 488.5,328.9 491.8,332.9 494.3,337.5 499.2,340.3 501.8,344.8 504.7,349.1 M515.0,304.3 515.8,309.4 517.4,314.4 517.3,319.7 518.3,324.8 519.6,329.8 519.0,335.1 519.9,340.2 M519.9,340.2 514.9,343.4 510.3,347.1 504.7,349.1 M503.8,350.5 504.7,349.1 M388.4,348.8 385.6,344.6 382.0,341.0 380.0,336.2 376.5,332.4 374.0,328.0 M388.4,348.8 384.3,352.5 380.9,356.9 378.6,362.2 374.2,365.6 370.1,369.4 M370.1,369.4 365.5,367.3 360.2,367.1 355.7,364.5 350.9,362.9 346.1,361.3 341.1,360.4 335.9,360.0 331.1,358.5 325.9,358.2 321.2,356.3 316.3,355.0 311.6,352.9 M374.0,328.0 368.5,326.9 363.0,326.8 357.5,327.2 351.9,326.6 346.4,327.3 M346.4,327.3 342.2,330.7 337.4,333.4 333.6,337.3 329.8,341.3 324.6,343.3 319.6,345.6 315.9,349.7 311.6,352.9 M404.0,351.0 399.0,349.1 393.6,349.9 388.4,348.8 M388.9,301.1 387.1,306.0 384.8,310.6 381.7,314.7 379.5,319.3 377.5,324.1 374.0,328.0 M374.8,389.9 373.1,384.9 373.8,379.4 372.1,374.3 370.1,369.4 M347.8,287.9 347.8,293.6 348.2,299.2 347.2,304.8 347.5,310.5 346.4,316.0 347.2,321.7 346.4,327.3 M541.7,339.0 538.1,341.6 M541.7,339.0 547.0,339.5 552.3,339.9 557.7,338.5 563.1,338.4 568.4,339.5 573.8,339.3 M538.1,341.6 540.0,346.8 541.2,352.2 543.5,357.2 546.6,361.8 548.6,366.9 549.9,372.3 552.7,377.1 M573.8,339.3 576.6,344.9 580.9,349.6 583.3,355.4 586.0,361.0 M586.0,361.0 583.0,365.2 578.2,367.2 574.2,370.3 570.7,374.0 568.1,378.6 563.5,380.9 M563.5,380.9 558.0,379.2 552.7,377.1 M554.6,301.6 554.1,307.4 550.4,312.1 548.3,317.4 548.0,323.3 544.7,328.1 544.8,334.1 541.7,339.0 M519.9,340.2 526.1,339.6 531.9,342.4 538.1,341.6 M583.3,321.2 581.7,326.1 578.1,330.0 575.0,334.2 573.8,339.3 M514.2,398.2 519.4,396.3 523.8,392.8 528.5,390.1 533.3,387.4 537.8,384.1 543.5,383.1 548.0,379.8 552.7,377.1 M605.9,362.2 599.3,361.0 592.6,361.5 586.0,361.0 M573.5,405.5 570.7,400.9 568.8,395.9 566.4,391.2 566.1,385.6 563.5,380.9"/>
</g>
<path d="M698.5,415.1 699.6,406.9 702.6,399.1 703.4,390.8 M698.5,415.1 692.0,420.5 686.6,427.0 679.8,432.1 M744.9,199.3 740.5,205.9 737.2,213.2 733.5,220.3 729.2,226.9 M423.5,446.8 428.9,453.1 435.4,458.5 441.6,464.1 M747.1,236.1 744.6,244.7 742.4,253.4 739.6,262.0 M440.1,55.1 437.2,48.5 434.0,42.0 430.8,35.4 428.0,28.7 M419.3,202.9 414.1,208.0 408.8,213.1 403.1,217.7 397.5,222.4 M759.1,37.0 754.8,43.9 751.4,51.2 746.8,57.8 M538.7,414.9 544.9,406.4 549.6,397.0 M441.1,101.7 448.5,94.4 455.7,86.9 M363.0,512.1 370.7,508.4 377.9,503.7 384.6,498.2 392.3,494.4 M547.6,335.3 554.9,339.2 562.9,341.8 569.6,346.8 577.5,349.7 M389.5,310.8 384.1,316.1 378.3,321.1 373.6,327.1 368.1,332.4 M696.1,176.7 688.3,174.4 680.3,173.1 672.3,171.9 M690.4,533.2 685.6,527.0 681.5,520.4 677.1,514.0 673.8,506.8 669.0,500.8 M436.4,80.3 431.1,85.6 426.0,91.1 420.0,95.5 M740.7,395.3 739.3,402.5 736.4,409.3 735.4,416.6 733.7,423.7 M605.7,256.7 595.8,258.8 585.7,259.7 M769.1,212.7 760.7,208.9 752.7,204.1 744.9,199.3 M649.6,436.2 642.4,439.4 634.9,441.5 627.7,444.5 620.2,446.7 M489.3,249.9 482.5,254.5 476.3,259.9 469.0,263.9 M775.2,319.3 768.0,316.4 761.2,312.9 754.3,309.6 M645.3,123.5 640.0,117.9 634.6,112.4 628.3,107.8 622.7,102.5 617.6,96.7 M676.7,55.9 679.5,49.3 684.2,43.8 687.9,37.8 690.4,31.0 694.2,25.0 M646.5,227.4 642.1,236.5 637.9,245.8 M649.6,436.2 657.1,434.5 664.7,434.2 672.2,432.6 679.8,432.1 M411.7,54.3 404.9,56.7 398.0,58.5 391.0,60.3 384.0,61.8 M608.6,316.8 616.9,315.2 625.2,313.0 633.4,310.8 641.8,309.3 M335.3,66.6 333.0,75.6 332.3,84.8 330.4,93.8 M754.9,476.7 764.6,479.5 773.9,483.5 M740.5,530.8 743.8,524.0 745.7,516.6 748.4,509.6 751.7,502.7 M488.5,455.7 492.0,448.7 494.9,441.4 498.0,434.2 500.6,426.8 504.0,419.7 M619.8,531.8 628.6,533.3 637.1,535.8 645.6,538.4 M470.3,287.7 470.1,279.8 469.3,271.8 469.0,263.9 M335.8,229.1 343.9,222.6 352.7,217.1 M752.8,168.0 751.3,175.9 748.9,183.7 746.9,191.5 744.9,199.3 M505.0,233.5 512.7,236.4 519.9,240.5 527.3,244.1 534.8,247.5 M771.3,461.6 771.4,469.0 772.9,476.2 773.9,483.5 M680.5,317.9 672.9,315.5 665.1,313.9 657.4,312.3 649.4,311.6 641.8,309.3 M425.1,121.8 423.4,113.0 422.5,104.1 420.0,95.5 M551.7,434.9 548.0,427.8 542.5,421.9 538.7,414.9 M358.4,299.3 348.1,300.6 337.8,302.4 M722.4,365.4 717.6,371.7 712.2,377.6 707.8,384.2 703.4,390.8 M622.9,502.2 619.1,495.8 614.7,489.6 609.8,483.9 M535.2,514.4 534.6,506.2 533.0,498.2 531.5,490.2 529.9,482.2 528.4,474.2 M410.6,243.7 402.6,245.1 394.4,245.3 386.4,246.4 378.4,248.3 370.4,249.6 M759.1,37.0 765.9,35.2 771.9,31.2 778.8,29.2 M455.7,86.9 460.0,93.1 464.7,99.0 469.2,105.1 474.2,110.8 478.0,117.4 M400.4,122.0 405.2,115.3 410.1,108.7 414.7,101.9 420.0,95.5 M721.9,251.0 724.5,243.0 726.3,234.8 729.2,226.9 M645.3,123.5 651.7,126.5 658.1,129.4 664.7,131.9 671.5,133.6 678.1,136.2 M532.0,170.4 530.4,177.5 529.0,184.7 525.6,191.3 524.4,198.6 M490.0,139.6 483.1,142.5 476.0,144.9 468.9,147.3 462.2,150.6 455.1,152.9 M664.0,527.6 658.1,531.6 651.5,534.3 645.6,538.4 M368.1,332.4 376.3,332.1 384.5,331.5 392.7,331.3 M602.0,279.2 596.1,273.1 591.8,265.7 585.7,259.7 M521.5,310.4 520.6,318.0 519.2,325.5 517.9,333.1 M375.9,226.5 383.2,225.8 390.4,224.2 397.5,222.4 M722.4,365.4 722.1,357.7 720.4,350.2 719.8,342.5 M335.8,229.1 342.4,233.6 349.7,237.1 356.3,241.7 363.4,245.6 370.4,249.6 M368.7,79.0 375.7,79.5 382.7,80.6 389.7,81.3 396.7,82.2 403.7,82.7 M505.9,92.4 505.7,100.4 505.3,108.3 505.0,116.3 504.0,124.2 M409.1,155.5 402.9,150.6 396.5,145.8 390.8,140.3 383.9,136.1 377.9,130.9 M546.1,104.1 547.7,112.5 547.9,121.1 547.7,129.7 548.8,138.2 M705.4,232.6 713.3,230.5 721.4,229.4 729.2,226.9 M546.1,104.1 538.1,107.6 530.6,112.4 522.3,115.6 M609.8,483.9 619.9,483.4 629.8,482.2 M499.0,377.1 506.5,376.9 513.9,378.2 521.4,378.0 528.8,379.0 536.3,378.4 M430.3,512.1 420.7,508.8 411.5,504.5 M529.5,283.1 521.8,282.4 514.0,283.6 506.2,282.6 498.5,282.8 M386.7,427.9 383.0,421.0 378.5,414.7 374.2,408.2 369.2,402.2 364.7,395.8 M606.6,461.6 613.2,454.0 620.2,446.7 M712.3,454.2 716.2,447.8 721.2,442.2 724.5,435.5 729.1,429.6 733.7,423.7 M672.3,171.9 674.2,164.9 675.4,157.8 676.3,150.6 677.3,143.4 678.1,136.2 M369.3,438.3 363.6,432.2 357.9,426.1 353.2,419.2 M681.2,339.0 679.0,346.5 678.1,354.4 675.4,361.8 673.4,369.3 M431.7,234.5 424.8,237.9 417.5,240.3 410.6,243.7 M597.4,423.8 598.9,431.5 601.7,438.8 603.4,446.4 605.1,454.0 606.6,461.6 M664.0,527.6 664.9,518.5 666.6,509.6 669.0,500.8 M413.2,348.9 414.6,356.8 417.3,364.5 418.3,372.5 M334.0,519.5 338.9,525.2 343.6,531.0 348.6,536.6 M649.6,436.2 655.0,441.2 659.5,447.2 665.1,452.0 M647.2,50.1 641.6,55.5 634.7,59.0 629.0,64.3 M645.2,289.4 640.4,282.7 636.2,275.6 630.2,269.8 625.8,262.8 M563.5,305.5 563.0,298.3 563.5,291.2 564.2,284.1 565.2,277.0 565.1,269.8 565.2,262.7 M541.4,455.3 544.7,462.5 546.6,470.2 549.5,477.6 553.3,484.5 555.4,492.2 M606.9,199.1 603.7,192.5 601.0,185.8 597.6,179.4 595.4,172.5 M582.4,90.3 576.3,86.5 571.0,81.7 565.9,76.6 560.2,72.3 M548.8,138.2 553.0,132.1 556.7,125.7 560.2,119.2 564.0,112.9 567.2,106.1 M650.6,151.1 657.2,146.9 664.4,143.7 671.5,140.4 678.1,136.2 M439.0,363.8 446.1,358.9 453.7,354.9 461.1,350.5 M431.7,234.5 428.7,226.5 425.7,218.6 421.7,211.1 419.3,202.9 M598.3,504.3 606.5,503.8 614.8,503.6 622.9,502.2 M680.8,483.5 688.1,482.7 694.8,480.0 702.0,478.9 709.0,477.4 716.0,475.6 M362.9,35.8 354.2,35.5 345.6,35.0 337.0,33.4 M549.6,397.0 556.1,401.3 563.5,403.8 570.1,407.9 577.0,411.4 M656.5,102.5 662.0,97.7 667.8,93.2 672.9,87.8 678.7,83.4 M332.7,174.7 334.0,167.4 336.1,160.3 336.2,152.7 339.1,145.7 339.7,138.3 M340.0,389.7 339.3,382.4 337.1,375.2 336.2,368.0 336.4,360.5 334.9,353.3 M754.9,476.7 759.8,471.1 765.9,466.7 771.3,461.6 M391.5,397.2 390.9,405.0 390.0,412.7 388.7,420.4 386.7,427.9 M400.4,122.0 394.8,116.8 390.8,110.3 384.8,105.6 380.1,99.6 M389.5,310.8 392.0,320.9 392.7,331.3 M635.1,375.5 641.4,379.1 648.1,382.0 654.7,384.8 660.5,389.4 667.4,391.9 673.8,395.3 M658.5,252.4 650.5,255.6 642.0,257.1 633.7,259.4 625.8,262.8 M598.2,111.7 595.6,119.0 594.8,126.8 592.4,134.2 590.0,141.6 588.6,149.3 M362.8,475.1 371.0,473.7 378.6,469.9 386.8,468.5 M440.1,55.1 448.5,52.6 456.8,50.1 464.7,46.3 472.9,43.6 M752.0,371.2 748.6,379.4 744.1,387.1 740.7,395.3 M746.9,125.7 743.5,132.5 738.6,138.5 735.9,145.6 731.7,151.9 M423.5,446.8 413.7,449.4 403.8,450.9 M678.7,83.4 670.9,81.0 663.2,78.3 654.9,77.3 647.3,74.2 M445.8,264.6 438.4,263.2 431.4,260.7 424.3,258.5 M505.9,92.4 500.0,97.0 494.9,102.6 489.2,107.5 483.0,111.8 478.0,117.4 M361.1,191.4 366.1,196.4 371.3,201.2 377.1,205.3 M535.2,514.4 538.0,521.5 542.0,528.1 544.3,535.4 M445.8,264.6 440.4,270.5 435.4,276.6 430.0,282.5 424.6,288.4 M614.4,341.5 618.7,335.9 623.0,330.3 627.6,325.0 633.1,320.4 637.6,315.0 641.8,309.3 M358.8,150.4 365.6,144.4 371.5,137.4 377.9,130.9 M739.6,262.0 732.9,265.1 725.7,267.2 718.8,270.1 711.8,272.4 M348.9,338.0 358.7,336.0 368.1,332.4 M595.4,172.5 602.0,168.5 608.4,164.3 615.6,161.5 622.1,157.3 628.4,153.0 M524.4,198.6 518.8,194.4 513.0,190.4 507.3,186.2 502.3,181.2 496.8,176.8 491.2,172.5 M524.4,198.6 531.8,199.1 539.0,200.1 546.3,201.3 M389.5,310.8 396.9,309.8 404.1,308.2 411.2,306.1 M459.8,243.8 465.0,236.9 470.7,230.4 477.2,224.5 482.3,217.6 M442.6,192.6 434.8,195.9 426.9,199.1 419.3,202.9 M633.5,176.6 631.3,183.9 630.3,191.3 628.5,198.6 M563.5,305.5 560.1,313.3 554.7,320.0 551.3,327.7 547.6,335.3 M764.0,354.6 759.2,349.2 754.9,343.3 750.0,338.1 745.1,332.8 740.0,327.6 M676.7,55.9 678.2,65.0 677.7,74.2 678.7,83.4 M767.1,61.5 768.3,69.3 769.6,77.0 771.0,84.7 M617.6,96.7 625.3,98.4 633.3,98.2 641.0,99.4 648.6,102.0 656.5,102.5 M568.2,471.8 572.8,478.5 576.0,485.9 580.7,492.4 M538.7,414.9 546.4,414.4 554.1,413.8 561.6,412.2 569.3,411.9 577.0,411.4 M746.8,57.8 751.9,63.0 756.8,68.3 761.7,73.6 765.9,79.6 771.0,84.7 M716.8,134.6 709.7,129.7 703.0,124.4 696.4,119.1 690.0,113.4 M441.1,101.7 448.8,104.2 455.9,107.9 463.0,111.6 470.6,114.4 478.0,117.4 M752.8,168.0 759.4,165.4 766.1,163.4 772.6,160.6 779.2,158.0 M449.2,387.6 445.7,379.8 441.7,372.0 439.0,363.8 M646.5,227.4 650.6,220.8 653.2,213.4 656.7,206.5 659.9,199.4 M381.3,174.6 388.0,169.4 395.3,165.2 402.4,160.5 409.1,155.5 M769.1,212.7 767.4,204.1 765.9,195.4 764.0,186.8 M500.8,31.5 493.9,34.6 486.6,37.0 479.9,40.6 472.9,43.6 M521.5,310.4 514.4,308.4 507.4,306.1 500.1,304.6 492.8,303.3 M712.3,454.2 705.9,449.7 698.9,446.0 692.5,441.5 686.5,436.2 679.8,432.1 M680.8,483.5 683.4,474.8 686.6,466.3 688.9,457.6 M551.7,434.9 558.6,429.7 564.0,422.8 570.6,417.3 577.0,411.4 M529.5,283.1 528.2,290.2 526.1,296.9 524.2,303.8 521.5,310.4 M774.4,116.9 773.8,108.8 771.9,100.9 772.6,92.7 771.0,84.7 M705.4,232.6 709.5,224.9 713.2,216.9 717.0,209.1 720.6,201.2 M335.3,66.6 336.1,58.3 335.6,50.0 336.4,41.7 337.0,33.4 M487.9,337.5 493.3,342.2 499.2,346.4 503.9,351.9 510.2,355.6 515.4,360.5 M504.0,419.7 497.0,422.8 490.2,426.6 482.7,428.5 475.7,431.5 468.8,435.0 M361.3,371.7 362.7,379.7 364.1,387.7 364.7,395.8 M497.3,197.8 495.8,189.3 493.7,180.8 491.2,172.5 M681.2,339.0 688.9,339.9 696.6,340.9 704.3,341.8 712.0,342.0 719.8,342.5 M703.4,390.8 696.1,392.8 688.5,392.5 681.1,393.4 673.8,395.3 M765.6,135.3 756.0,130.9 746.9,125.7 M490.0,139.6 496.8,131.7 504.0,124.2 M718.8,319.7 712.8,314.8 706.3,310.7 700.3,306.1 695.0,300.4 688.4,296.3 M752.8,168.0 755.9,174.7 760.7,180.3 764.0,186.8 M544.3,535.4 536.2,533.3 528.0,531.6 520.5,527.7 512.1,526.7 504.2,523.8 M386.8,468.5 394.1,470.0 400.7,473.6 408.2,474.7 415.3,476.6 422.2,479.3 M608.6,316.8 607.3,309.3 606.7,301.6 605.1,294.2 603.0,286.8 602.0,279.2 M332.7,174.7 331.7,182.9 333.0,191.2 331.6,199.4 331.6,207.7 M562.3,188.7 568.6,184.9 575.5,182.1 582.0,178.7 588.4,175.0 595.4,172.5 M529.5,283.1 537.0,279.6 543.5,274.4 550.9,270.8 558.4,267.3 565.2,262.7 M389.0,532.0 396.3,531.7 403.5,532.0 410.8,532.4 418.0,532.9 M376.2,351.5 371.6,358.5 365.7,364.5 361.3,371.7 M724.4,517.6 726.2,510.6 727.9,503.7 729.7,496.7 731.8,489.9 M363.0,512.1 369.5,517.1 375.7,522.5 382.2,527.5 389.0,532.0 M459.8,243.8 452.8,241.2 445.8,239.0 438.9,236.4 431.7,234.5 M453.1,211.7 448.2,217.8 442.4,223.1 437.3,229.0 431.7,234.5 M605.3,227.2 605.7,234.6 605.1,242.0 606.1,249.3 605.7,256.7 M705.4,232.6 699.0,229.3 692.8,225.8 687.1,221.5 681.1,217.5 M440.1,55.1 443.8,48.1 446.9,40.9 450.0,33.6 452.6,26.2 M547.6,335.3 544.3,342.5 541.2,349.9 537.0,356.7 M606.6,461.6 607.5,469.1 609.6,476.4 609.8,483.9 M442.6,192.6 446.6,183.3 451.2,174.2 M593.6,363.9 600.8,365.0 607.5,367.5 614.4,369.5 621.2,372.0 628.1,373.9 635.1,375.5 M593.6,363.9 584.0,367.7 574.1,370.8 M499.0,377.1 496.7,384.2 494.1,391.1 492.6,398.4 M529.5,283.1 534.3,288.6 539.2,294.0 543.1,300.1 M431.3,401.5 428.4,394.1 425.2,386.8 420.8,380.1 418.3,372.5 M425.1,121.8 422.0,128.6 419.1,135.4 415.4,142.0 412.1,148.6 409.1,155.5 M751.7,502.7 754.9,509.0 757.8,515.5 761.7,521.4 M565.2,262.7 569.7,269.0 572.8,276.1 576.7,282.8 581.0,289.2 585.3,295.6 M585.6,41.3 578.2,38.2 570.3,36.2 563.1,32.4 555.3,30.1 547.6,27.7 M602.6,388.0 607.0,395.2 610.9,402.8 614.0,410.6 M544.3,535.4 552.1,533.9 559.9,533.2 567.8,532.7 575.7,532.3 583.5,530.9 M515.4,360.5 522.6,366.2 529.7,371.9 536.3,378.4 M566.2,242.1 571.0,235.6 575.1,228.6 578.7,221.3 583.8,215.0 M353.2,419.2 346.2,416.0 339.7,412.2 332.6,409.3 M488.5,455.7 483.9,450.2 478.1,445.8 474.1,439.8 468.8,435.0 M721.9,251.0 714.1,254.4 706.6,258.5 698.9,262.1 691.5,266.4 M707.3,86.1 715.3,88.0 723.5,89.0 731.6,90.6 739.4,93.2 M538.7,414.9 531.8,415.6 524.8,416.4 517.9,417.9 511.1,419.6 504.0,419.7 M533.1,85.9 530.5,93.3 527.9,100.8 525.5,108.4 522.3,115.6 M500.8,31.5 509.8,30.5 518.5,27.7 527.3,26.1 M353.2,419.2 350.0,411.7 346.9,404.3 342.8,397.3 340.0,389.7 M538.7,414.9 531.7,409.3 524.1,404.5 517.3,398.7 M463.2,496.7 459.3,489.8 453.9,484.1 450.7,476.8 446.7,470.1 441.6,464.1 M385.2,285.0 385.1,274.9 384.4,264.8 M430.3,512.1 432.3,520.2 435.5,527.8 438.4,535.6 M488.5,455.7 494.8,460.8 502.0,464.7 508.4,469.7 M740.5,530.8 747.5,527.6 754.8,525.0 761.7,521.4 M560.1,513.0 558.5,506.0 557.1,499.1 555.4,492.2 M705.4,232.6 698.2,233.3 690.9,232.2 683.7,232.9 676.4,233.6 669.2,233.9 M486.3,487.0 493.7,490.8 500.1,496.0 506.5,501.3 513.9,505.1 M422.2,479.3 414.8,483.3 407.3,486.9 399.5,490.1 392.3,494.4 M606.9,199.1 613.4,193.2 620.3,187.9 626.8,182.2 633.5,176.6 M441.1,101.7 435.2,107.9 430.9,115.5 425.1,121.8 M669.0,500.8 661.8,504.3 654.8,508.1 647.4,511.0 M739.6,262.0 744.8,266.7 750.3,271.2 756.3,274.9 761.9,279.1 767.8,283.0 773.1,287.7 M334.0,519.5 336.5,512.4 337.2,504.9 339.3,497.7 341.1,490.4 M769.1,212.7 763.7,218.7 758.5,224.8 752.5,230.1 747.1,236.1 M492.8,303.3 494.8,296.5 496.2,289.5 498.5,282.8 M711.6,57.3 702.8,57.7 694.2,55.8 685.5,55.4 676.7,55.9 M568.2,471.8 568.3,464.4 568.2,457.1 567.2,449.7 M386.7,427.9 390.5,434.0 395.6,439.2 399.7,445.0 403.8,450.9 M629.0,64.3 638.3,68.9 647.3,74.2 M361.2,57.4 368.9,58.1 376.5,59.8 384.0,61.8 M650.4,343.5 647.7,350.1 644.0,356.2 641.7,362.9 638.4,369.2 635.1,375.5 M463.4,523.0 469.5,526.5 475.4,530.3 481.5,533.7 M423.0,176.7 421.1,185.4 420.6,194.2 419.3,202.9 M711.6,57.3 704.9,62.3 698.2,67.5 691.4,72.3 685.5,78.4 678.7,83.4 M765.6,135.3 769.7,125.9 774.4,116.9 M384.4,264.8 391.0,270.8 398.1,276.1 405.7,280.7 M449.2,387.6 455.4,382.9 461.4,378.0 468.1,374.0 474.2,369.2 479.8,363.8 M472.9,390.2 469.2,396.2 465.3,402.1 461.5,408.1 458.7,414.7 454.8,420.5 M696.2,146.1 703.3,147.3 710.3,148.9 717.5,149.4 724.5,151.6 731.7,151.9 M361.3,371.7 354.4,367.5 347.7,363.0 341.6,357.7 334.9,353.3 M400.1,192.7 392.8,197.6 385.1,201.8 377.1,205.3 M598.3,504.3 603.2,511.6 608.7,518.4 614.8,524.7 619.8,531.8 M369.3,438.3 378.1,433.2 386.7,427.9 M348.9,338.0 342.9,334.0 337.1,329.7 331.4,325.1 M487.9,337.5 495.3,335.7 502.9,335.3 510.3,333.8 517.9,333.1 M645.3,123.5 648.6,116.3 652.6,109.4 656.5,102.5 M690.0,113.4 686.8,121.4 682.9,129.0 678.1,136.2 M384.4,264.8 377.2,257.4 370.4,249.6 M505.9,92.4 512.8,91.1 519.3,88.4 526.5,88.3 533.1,85.9 M763.1,253.1 755.3,256.1 747.5,259.2 739.6,262.0 M449.9,130.6 441.4,128.2 433.3,124.8 425.1,121.8 M410.6,243.7 409.2,251.0 409.5,258.6 407.4,265.8 407.3,273.4 405.7,280.7 M409.1,155.5 401.8,154.9 394.3,155.1 386.9,154.7 379.6,154.1 M431.3,401.5 424.2,403.0 417.1,404.0 410.1,405.5 M549.6,397.0 555.0,392.2 559.4,386.5 564.3,381.2 569.7,376.5 574.1,370.8 M774.6,391.8 769.1,386.4 763.3,381.5 757.7,376.3 752.0,371.2 M688.9,457.6 685.3,449.3 683.1,440.5 679.8,432.1 M505.0,233.5 503.3,226.4 502.7,219.0 501.1,211.9 499.0,204.9 497.3,197.8 M532.0,170.4 534.8,163.7 538.8,157.6 541.3,150.7 545.8,144.8 548.8,138.2 M331.0,439.1 330.8,431.7 332.1,424.3 331.5,416.8 332.6,409.3 M720.6,181.2 726.8,185.4 732.9,190.0 738.3,195.4 744.9,199.3 M403.7,82.7 406.5,75.8 408.4,68.7 409.3,61.3 411.7,54.3 M497.3,197.8 506.3,198.7 515.4,197.7 524.4,198.6 M357.8,112.3 350.6,108.2 343.7,103.6 337.2,98.6 330.4,93.8 M487.9,337.5 484.6,346.1 482.9,355.2 479.8,363.8 M411.2,306.1 410.1,297.5 407.2,289.2 405.7,280.7 M352.7,217.1 356.8,223.2 359.4,230.3 363.8,236.3 366.7,243.2 370.4,249.6 M513.9,505.1 512.3,498.1 512.1,490.9 510.5,483.9 510.1,476.7 508.4,469.7 M585.6,41.3 578.0,43.7 570.7,46.8 563.7,50.5 M519.0,439.8 523.4,433.1 528.3,426.9 533.9,421.2 538.7,414.9 M368.7,79.0 365.3,87.1 362.6,95.4 360.8,104.0 357.8,112.3 M504.0,419.7 499.5,413.0 495.9,405.8 492.6,398.4 M739.4,93.2 734.6,98.4 729.9,103.6 724.8,108.6 719.8,113.6 M535.2,514.4 539.8,508.5 544.9,503.0 550.8,498.2 555.4,492.2 M470.3,287.7 477.3,286.3 484.5,285.9 491.4,283.8 498.5,282.8 M444.9,441.4 444.1,449.0 442.6,456.5 441.6,464.1 M431.0,308.8 437.8,305.7 443.8,301.2 450.5,297.9 457.6,295.5 464.0,291.7 470.3,287.7 M424.6,288.4 423.6,280.9 424.6,273.4 424.8,266.0 424.3,258.5 M410.6,243.7 406.6,236.4 402.3,229.2 397.5,222.4 M409.1,155.5 416.0,152.7 423.1,150.3 430.1,147.7 M707.3,86.1 700.3,84.6 693.1,84.1 686.0,83.3 678.7,83.4 M721.9,251.0 718.4,258.1 714.6,265.0 711.8,272.4 M720.9,290.7 717.0,281.2 711.8,272.4 M608.6,316.8 602.7,311.5 597.2,305.9 591.7,300.2 585.3,295.6 M468.8,435.0 468.9,442.4 470.6,449.7 470.9,457.1 471.4,464.5 473.0,471.8 M582.4,90.3 589.6,90.9 596.6,92.1 603.5,94.1 610.6,94.9 617.6,96.7 M577.0,411.4 583.5,405.7 589.3,399.1 595.8,393.4 602.6,388.0 M440.1,55.1 439.7,63.6 436.9,71.8 436.4,80.3 M439.0,363.8 432.0,366.4 425.4,370.1 418.3,372.5 M664.9,271.5 657.0,270.2 649.1,268.6 641.4,266.4 633.5,265.1 625.8,262.8 M524.6,137.3 525.7,145.8 528.3,153.9 529.7,162.2 532.0,170.4 M774.6,391.8 772.2,384.4 769.7,377.1 767.9,369.6 766.7,361.9 764.0,354.6 M752.8,168.0 746.1,162.3 738.5,157.7 731.7,151.9" fill="none" stroke="#9fb2d2" stroke-width="0.5" opacity="0.55"/>
<path d="M470.3,287.7 471.2,293.0 472.6,298.2 473.7,303.4 474.3,308.8 475.7,314.0 477.6,319.0 M751.7,502.7 755.5,498.2 760.7,495.3 765.6,491.9 769.0,486.9 773.9,483.5 M455.7,86.9 457.4,81.5 459.8,76.5 463.5,72.1 464.8,66.6 M582.4,90.3 587.1,86.2 592.0,82.4 597.0,78.7 602.3,75.4 M707.3,86.1 708.9,90.9 710.8,95.6 712.9,100.1 714.6,104.9 717.8,109.0 719.8,113.6 M779.6,438.3 774.8,435.1 769.7,432.6 763.9,431.1 758.9,428.2 754.2,424.9 M598.2,111.7 601.5,115.8 605.3,119.5 609.1,123.3 612.5,127.3 616.2,131.1 620.8,133.9 M633.5,176.6 638.9,174.9 644.7,176.5 650.2,175.0 655.8,175.1 661.3,173.8 666.8,173.0 672.3,171.9 M513.3,259.4 517.5,263.4 520.1,268.6 523.8,273.1 526.2,278.4 529.5,283.1 M497.3,197.8 501.4,200.9 504.7,204.9 509.2,207.6 512.1,211.9 515.3,216.1 519.7,218.9 M340.0,389.7 344.8,391.8 350.1,391.5 354.6,394.4 359.9,394.0 364.7,395.8 M334.9,353.3 332.9,347.8 333.8,342.0 332.8,336.4 331.8,330.8 331.4,325.1 M519.0,439.8 519.7,444.9 521.5,449.7 522.8,454.6 524.6,459.4 525.2,464.5 527.4,469.2 528.4,474.2 M519.7,218.9 523.7,215.3 528.1,212.3 532.9,210.0 536.9,206.4 541.6,203.9 546.3,201.3 M566.2,242.1 569.6,246.2 573.9,249.2 577.3,253.3 581.1,257.0 585.7,259.7 M348.9,338.0 348.0,332.7 346.4,327.6 344.1,322.8 341.9,317.9 342.1,312.2 339.1,307.6 337.8,302.4 M560.1,513.0 564.2,508.9 568.5,504.9 571.9,500.1 575.8,495.8 580.7,492.4 M463.4,523.0 458.7,526.1 453.4,528.0 448.8,531.2 442.9,532.0 438.4,535.6 M774.4,116.9 775.2,122.0 775.7,127.1 776.9,132.2 776.5,137.5 777.3,142.6 777.3,147.8 779.5,152.7 779.2,158.0 M535.2,514.4 530.4,517.1 524.7,517.0 519.4,518.3 514.5,520.6 509.7,523.3 504.2,523.8 M555.3,223.4 550.3,222.2 545.2,221.6 540.1,220.8 534.9,221.6 529.9,220.3 524.8,219.8 519.7,218.9 M673.4,369.3 677.5,372.6 681.8,375.7 686.8,377.7 690.9,381.1 694.3,385.3 699.6,387.0 703.4,390.8 M389.0,532.0 389.7,526.7 390.2,521.3 391.3,516.0 391.3,510.6 391.5,505.2 391.5,499.8 392.3,494.4 M477.4,187.8 481.3,184.4 483.7,179.6 487.1,175.8 491.2,172.5 M588.6,149.3 589.6,155.3 591.7,160.9 594.8,166.3 595.4,172.5 M455.7,86.9 450.7,85.8 445.9,84.0 441.5,81.1 436.4,80.3 M504.0,124.2 509.0,122.9 513.3,120.2 517.4,117.1 522.3,115.6 M537.0,356.7 533.1,353.3 529.8,349.5 527.5,344.9 523.5,341.6 520.4,337.6 517.9,333.1 M551.7,434.9 555.5,438.7 559.3,442.5 562.8,446.5 567.2,449.7 M759.1,37.0 754.1,35.3 749.3,33.4 743.7,34.0 739.1,31.4 734.1,29.7 729.0,28.8 M529.5,283.1 530.9,278.1 530.5,272.9 531.9,267.9 532.4,262.7 534.4,257.8 533.3,252.5 534.8,247.5 M517.3,398.7 514.2,393.8 509.6,390.4 507.1,385.1 502.1,381.9 499.0,377.1 M629.0,64.3 623.3,65.5 618.7,69.5 612.6,69.8 607.4,72.6 602.3,75.4 M775.2,319.3 770.4,321.7 765.0,320.9 760.1,322.7 755.2,324.7 750.4,326.5 745.1,326.6 740.0,327.6 M515.4,360.5 514.6,354.9 515.8,349.5 515.9,344.0 517.5,338.6 517.9,333.1 M486.3,487.0 487.8,491.9 491.1,496.1 494.2,500.2 494.6,505.7 497.2,510.1 498.8,515.1 502.5,519.0 504.2,523.8 M605.3,227.2 609.5,230.7 614.9,232.0 618.6,236.3 623.3,238.9 628.7,240.3 632.8,243.9 637.9,245.8 M463.2,496.7 468.3,495.9 472.1,492.1 477.3,491.6 481.8,489.2 486.3,487.0 M416.2,326.6 410.5,328.7 404.3,328.5 398.4,329.5 392.7,331.3 M381.3,174.6 377.2,177.8 373.2,181.3 368.6,183.9 364.9,187.7 361.1,191.4 M530.0,50.2 530.6,44.0 529.5,38.0 529.1,32.0 527.3,26.1 M439.0,363.8 434.2,360.2 428.1,358.8 423.3,355.3 418.4,351.8 413.2,348.9 M400.1,192.7 399.9,198.6 400.1,204.7 397.6,210.4 398.0,216.5 397.5,222.4 M574.1,370.8 568.6,371.5 563.3,372.9 557.8,373.5 552.5,375.2 547.1,376.1 541.7,377.5 536.3,378.4 M598.2,111.7 603.6,108.7 607.5,103.6 612.2,99.8 617.6,96.7 M519.0,439.8 516.9,435.1 513.6,431.4 510.5,427.4 507.2,423.6 504.0,419.7 M490.4,69.0 487.2,65.0 485.5,59.9 481.7,56.2 479.7,51.4 476.1,47.7 472.9,43.6 M530.0,50.2 529.4,55.4 530.0,60.5 531.4,65.5 531.6,70.6 531.5,75.7 532.6,80.8 533.1,85.9 M669.2,233.9 673.1,230.5 675.9,226.3 677.5,221.1 681.1,217.5 M363.0,512.1 356.9,512.6 351.5,515.6 345.6,516.8 339.7,517.9 334.0,519.5 M739.4,93.2 743.9,96.0 748.6,98.5 752.6,101.9 756.4,105.7 760.7,108.8 765.7,110.9 769.7,114.4 774.4,116.9 M488.5,455.7 484.6,459.7 479.9,463.0 477.4,468.3 473.0,471.8 M646.5,227.4 649.6,232.1 650.7,237.7 652.8,242.9 657.3,246.9 658.5,252.4 M377.9,130.9 379.4,136.7 379.9,142.4 377.9,148.4 379.6,154.1 M468.8,435.0 464.4,432.2 461.6,427.9 458.1,424.3 454.8,420.5 M332.7,174.7 336.5,171.3 339.8,167.4 343.8,164.2 348.2,161.4 350.5,156.4 354.6,153.4 358.8,150.4 M617.6,96.7 617.2,102.1 617.6,107.4 618.3,112.7 619.7,118.0 619.1,123.4 621.3,128.5 620.8,133.9 M423.5,446.8 418.7,444.7 414.6,441.5 410.1,438.8 404.7,438.1 400.9,434.1 395.4,433.5 390.9,431.1 386.7,427.9 M513.3,259.4 508.9,256.4 504.1,254.6 499.2,252.9 493.7,252.9 489.3,249.9 M597.4,423.8 593.3,427.9 589.6,432.2 583.6,434.0 579.6,438.0 575.2,441.6 571.2,445.7 567.2,449.7 M681.2,339.0 686.3,337.3 690.5,333.9 695.2,331.5 699.8,328.9 704.4,326.4 709.0,323.6 714.0,321.8 718.8,319.7 M362.8,475.1 358.2,477.9 354.5,481.9 349.1,483.4 344.7,486.3 341.1,490.4 M453.1,211.7 454.2,217.0 455.5,222.3 455.7,227.9 457.3,233.1 457.7,238.6 459.8,243.8 M392.3,494.4 396.9,497.3 401.7,499.8 406.9,501.5 411.5,504.5 M645.6,538.4 645.5,532.9 647.1,527.5 647.1,522.0 647.4,516.5 647.4,511.0 M452.0,316.8 452.9,322.6 453.8,328.4 457.0,333.5 456.8,339.6 459.0,345.0 461.1,350.5 M477.4,187.8 472.0,185.3 466.9,182.5 461.6,179.9 456.6,176.5 451.2,174.2 M353.2,419.2 355.6,414.5 356.6,409.3 360.6,405.4 363.5,401.0 364.7,395.8 M653.6,475.2 655.8,470.5 658.0,465.8 659.7,460.9 662.4,456.4 665.1,452.0 M606.6,461.6 601.9,459.1 597.1,457.5 592.0,456.4 586.8,455.8 582.3,453.1 576.7,453.9 571.8,452.2 567.2,449.7 M486.3,487.0 491.3,484.2 494.9,479.7 500.1,477.2 504.0,473.1 508.4,469.7 M368.7,79.0 363.7,80.2 358.9,82.2 354.2,84.2 349.4,86.1 344.9,88.6 340.3,90.8 335.3,92.2 330.4,93.8 M453.1,211.7 451.1,206.6 447.0,202.6 444.5,197.8 442.6,192.6 M606.6,461.6 604.0,466.1 599.4,468.7 596.7,473.0 593.2,476.7 591.1,481.5 587.8,485.3 584.8,489.3 580.7,492.4 M386.8,468.5 382.9,464.0 381.9,457.9 378.3,453.2 375.6,448.1 371.7,443.6 369.3,438.3 M563.5,305.5 566.5,310.4 568.6,315.7 569.4,321.6 572.4,326.5 M334.6,258.9 339.4,256.4 344.9,256.4 349.7,254.0 355.0,253.3 360.5,253.3 365.5,251.6 370.4,249.6 M658.5,252.4 660.6,247.5 663.1,242.7 666.2,238.3 669.2,233.9 M555.3,223.4 553.3,217.8 550.7,212.4 549.0,206.6 546.3,201.3 M348.9,338.0 349.5,332.3 351.9,327.0 353.1,321.5 353.2,315.6 355.7,310.4 357.5,304.9 358.4,299.3 M490.0,139.6 486.7,135.6 485.6,130.5 482.7,126.3 480.1,122.0 478.0,117.4 M659.9,199.4 663.8,203.4 668.3,206.8 673.0,209.8 676.2,214.7 681.1,217.5 M381.3,174.6 378.5,169.7 374.3,166.1 370.9,161.8 366.9,157.9 361.7,155.3 358.8,150.4 M431.3,401.5 434.6,405.4 439.5,407.4 443.2,410.8 446.2,415.1 451.2,416.9 454.8,420.5 M400.4,122.0 406.6,121.5 412.7,123.1 418.9,122.7 425.1,121.8 M400.1,192.7 405.1,190.1 408.9,185.8 413.3,182.3 419.2,181.0 423.0,176.7 M582.4,90.3 584.7,95.3 587.7,99.6 592.5,102.7 594.3,107.9 598.2,111.7 M532.0,170.4 535.2,175.2 537.3,180.4 538.3,186.2 541.8,190.8 543.7,196.2 546.3,201.3 M644.0,405.7 642.0,400.8 641.2,395.6 638.6,390.9 637.5,385.7 636.4,380.6 635.1,375.5 M698.5,415.1 694.6,411.6 690.1,408.7 685.7,405.7 681.2,402.9 677.4,399.2 673.8,395.3 M588.6,149.3 593.5,147.6 597.9,145.1 601.9,141.7 606.6,139.6 611.1,137.2 616.0,135.6 620.8,133.9 M410.6,243.7 413.9,247.5 418.2,250.4 421.0,254.7 424.3,258.5 M720.6,181.2 719.7,186.2 720.5,191.2 719.5,196.2 720.6,201.2 M440.3,342.4 435.6,339.0 431.3,335.1 425.5,333.4 421.4,329.2 416.2,326.6 M422.2,479.3 420.2,473.9 416.9,469.3 412.0,465.8 408.9,461.1 405.9,456.3 403.8,450.9 M605.7,256.7 610.5,259.0 616.1,258.7 621.0,260.3 625.8,262.8 M332.7,174.7 337.7,176.9 342.2,180.2 347.4,182.0 352.0,185.2 356.8,187.8 361.1,191.4 M524.6,137.3 519.1,134.5 514.6,130.3 509.1,127.5 504.0,124.2 M524.4,198.6 523.9,203.8 522.5,208.8 521.4,213.9 519.7,218.9 M361.2,57.4 357.2,53.4 354.0,48.5 349.8,44.7 345.7,40.7 340.2,38.2 337.0,33.4 M430.3,512.1 428.0,517.8 423.3,522.0 421.2,527.8 418.0,532.9 M492.8,303.3 496.0,307.9 500.6,311.3 503.8,315.8 507.8,319.8 510.4,324.9 514.7,328.5 517.9,333.1 M376.2,351.5 381.5,350.7 386.8,351.3 392.1,349.9 397.4,351.0 402.6,348.6 408.0,350.4 413.2,348.9 M453.1,211.7 447.6,209.8 442.0,208.1 436.2,207.2 430.3,206.8 425.1,203.9 419.3,202.9" fill="none" stroke="#a9cbe6" stroke-width="0.5" opacity="0.7"/>
<g fill="#b5e0a0" opacity="0.45"><ellipse cx="775.2" cy="274.6" rx="2.2" ry="0.7" transform="rotate(82 775.2 274.6)"/><ellipse cx="423.2" cy="132.3" rx="3.5" ry="1.1" transform="rotate(116 423.2 132.3)"/><ellipse cx="639.3" cy="76.0" rx="2.1" ry="1.1" transform="rotate(159 639.3 76.0)"/><ellipse cx="532.1" cy="465.2" rx="3.6" ry="1.1" transform="rotate(123 532.1 465.2)"/><ellipse cx="605.8" cy="248.4" rx="4.2" ry="0.9" transform="rotate(21 605.8 248.4)"/><ellipse cx="711.2" cy="223.4" rx="2.3" ry="0.7" transform="rotate(116 711.2 223.4)"/><ellipse cx="598.8" cy="134.9" rx="3.0" ry="0.8" transform="rotate(103 598.8 134.9)"/><ellipse cx="599.0" cy="217.7" rx="3.1" ry="0.8" transform="rotate(4 599.0 217.7)"/><ellipse cx="638.5" cy="258.9" rx="4.7" ry="1.0" transform="rotate(106 638.5 258.9)"/><ellipse cx="373.7" cy="351.9" rx="3.2" ry="0.8" transform="rotate(32 373.7 351.9)"/><ellipse cx="567.4" cy="202.1" rx="4.4" ry="0.9" transform="rotate(171 567.4 202.1)"/><ellipse cx="677.9" cy="370.8" rx="4.9" ry="1.1" transform="rotate(164 677.9 370.8)"/><ellipse cx="767.8" cy="230.8" rx="4.2" ry="0.7" transform="rotate(23 767.8 230.8)"/><ellipse cx="735.0" cy="491.6" rx="2.8" ry="1.1" transform="rotate(83 735.0 491.6)"/><ellipse cx="421.7" cy="514.6" rx="3.1" ry="1.2" transform="rotate(4 421.7 514.6)"/><ellipse cx="545.5" cy="242.6" rx="4.1" ry="1.1" transform="rotate(102 545.5 242.6)"/><ellipse cx="741.8" cy="345.8" rx="4.6" ry="0.6" transform="rotate(84 741.8 345.8)"/><ellipse cx="745.1" cy="256.9" rx="2.8" ry="0.7" transform="rotate(32 745.1 256.9)"/><ellipse cx="613.7" cy="202.9" rx="2.1" ry="1.2" transform="rotate(87 613.7 202.9)"/><ellipse cx="332.1" cy="161.9" rx="4.5" ry="0.6" transform="rotate(109 332.1 161.9)"/><ellipse cx="420.6" cy="446.7" rx="4.9" ry="0.8" transform="rotate(25 420.6 446.7)"/><ellipse cx="331.8" cy="275.9" rx="4.9" ry="1.0" transform="rotate(139 331.8 275.9)"/><ellipse cx="608.3" cy="37.4" rx="2.7" ry="1.1" transform="rotate(149 608.3 37.4)"/><ellipse cx="343.0" cy="231.2" rx="3.7" ry="0.9" transform="rotate(37 343.0 231.2)"/><ellipse cx="680.2" cy="428.3" rx="3.3" ry="0.8" transform="rotate(103 680.2 428.3)"/><ellipse cx="461.6" cy="340.0" rx="4.7" ry="0.8" transform="rotate(91 461.6 340.0)"/><ellipse cx="350.9" cy="269.7" rx="4.1" ry="1.1" transform="rotate(111 350.9 269.7)"/><ellipse cx="767.4" cy="178.5" rx="3.9" ry="0.8" transform="rotate(129 767.4 178.5)"/><ellipse cx="436.1" cy="451.6" rx="3.9" ry="1.0" transform="rotate(71 436.1 451.6)"/><ellipse cx="683.5" cy="89.1" rx="4.3" ry="0.7" transform="rotate(48 683.5 89.1)"/><ellipse cx="631.1" cy="334.2" rx="3.6" ry="1.1" transform="rotate(10 631.1 334.2)"/><ellipse cx="415.9" cy="277.5" rx="2.7" ry="1.1" transform="rotate(7 415.9 277.5)"/><ellipse cx="590.1" cy="293.0" rx="4.7" ry="0.6" transform="rotate(151 590.1 293.0)"/><ellipse cx="632.9" cy="396.0" rx="2.6" ry="1.0" transform="rotate(99 632.9 396.0)"/><ellipse cx="553.1" cy="418.3" rx="2.3" ry="0.8" transform="rotate(43 553.1 418.3)"/><ellipse cx="387.2" cy="153.6" rx="1.8" ry="1.0" transform="rotate(117 387.2 153.6)"/><ellipse cx="723.3" cy="239.6" rx="2.5" ry="0.4" transform="rotate(77 723.3 239.6)"/><ellipse cx="594.5" cy="288.8" rx="1.6" ry="0.9" transform="rotate(45 594.5 288.8)"/><ellipse cx="472.9" cy="120.4" rx="1.7" ry="0.8" transform="rotate(88 472.9 120.4)"/><ellipse cx="410.7" cy="391.3" rx="3.8" ry="1.0" transform="rotate(112 410.7 391.3)"/><ellipse cx="510.8" cy="232.8" rx="1.6" ry="0.8" transform="rotate(114 510.8 232.8)"/><ellipse cx="583.1" cy="486.2" rx="4.9" ry="0.9" transform="rotate(15 583.1 486.2)"/><ellipse cx="582.8" cy="274.7" rx="4.5" ry="0.4" transform="rotate(116 582.8 274.7)"/><ellipse cx="503.1" cy="119.9" rx="1.8" ry="1.1" transform="rotate(86 503.1 119.9)"/><ellipse cx="762.4" cy="449.8" rx="3.4" ry="0.7" transform="rotate(126 762.4 449.8)"/><ellipse cx="492.7" cy="367.0" rx="3.3" ry="0.9" transform="rotate(26 492.7 367.0)"/><ellipse cx="472.5" cy="247.2" rx="3.4" ry="0.6" transform="rotate(176 472.5 247.2)"/><ellipse cx="665.6" cy="440.5" rx="3.8" ry="0.5" transform="rotate(22 665.6 440.5)"/><ellipse cx="402.7" cy="329.0" rx="2.1" ry="0.6" transform="rotate(93 402.7 329.0)"/><ellipse cx="759.2" cy="273.1" rx="3.8" ry="1.0" transform="rotate(121 759.2 273.1)"/><ellipse cx="502.7" cy="26.2" rx="1.5" ry="1.1" transform="rotate(79 502.7 26.2)"/><ellipse cx="449.8" cy="443.9" rx="3.0" ry="0.5" transform="rotate(137 449.8 443.9)"/><ellipse cx="352.8" cy="530.6" rx="1.9" ry="0.8" transform="rotate(129 352.8 530.6)"/><ellipse cx="673.6" cy="109.5" rx="2.0" ry="0.9" transform="rotate(67 673.6 109.5)"/><ellipse cx="573.2" cy="269.6" rx="4.0" ry="1.1" transform="rotate(176 573.2 269.6)"/><ellipse cx="708.5" cy="287.8" rx="4.1" ry="1.2" transform="rotate(94 708.5 287.8)"/><ellipse cx="596.9" cy="450.0" rx="4.0" ry="0.6" transform="rotate(177 596.9 450.0)"/><ellipse cx="705.2" cy="320.6" rx="3.5" ry="0.4" transform="rotate(82 705.2 320.6)"/><ellipse cx="688.9" cy="141.5" rx="2.6" ry="0.6" transform="rotate(2 688.9 141.5)"/><ellipse cx="650.2" cy="432.2" rx="2.4" ry="1.1" transform="rotate(28 650.2 432.2)"/><ellipse cx="698.6" cy="403.1" rx="5.0" ry="0.5" transform="rotate(85 698.6 403.1)"/><ellipse cx="444.1" cy="184.2" rx="1.8" ry="1.2" transform="rotate(53 444.1 184.2)"/><ellipse cx="344.7" cy="172.9" rx="2.1" ry="0.5" transform="rotate(151 344.7 172.9)"/><ellipse cx="713.2" cy="95.3" rx="2.7" ry="0.6" transform="rotate(64 713.2 95.3)"/><ellipse cx="508.7" cy="516.2" rx="2.4" ry="1.1" transform="rotate(57 508.7 516.2)"/><ellipse cx="456.7" cy="370.1" rx="3.3" ry="1.1" transform="rotate(131 456.7 370.1)"/><ellipse cx="548.6" cy="239.9" rx="2.9" ry="0.6" transform="rotate(151 548.6 239.9)"/><ellipse cx="727.0" cy="278.7" rx="3.3" ry="0.7" transform="rotate(24 727.0 278.7)"/><ellipse cx="721.2" cy="205.1" rx="2.0" ry="0.7" transform="rotate(45 721.2 205.1)"/><ellipse cx="610.2" cy="157.0" rx="1.8" ry="1.1" transform="rotate(66 610.2 157.0)"/></g>
</g><clipPath id="mc"><rect x="341.5" y="36" width="426.5" height="492"/></clipPath><g clip-path="url(#mc)">
<g fill="none" stroke="#9fb4d6" stroke-width="0.55" opacity="0.75" stroke-linejoin="round">
<path d="M394.6,222.3 418.1,214.0 433.0,208.3 451.0,205.0 478.6,209.0 501.1,210.1 512.5,206.8 529.4,196.0 544.6,196.0 548.9,201.4"/>
<path d="M433.0,208.3 445.9,223.0 461.9,231.9 476.8,237.3 487.4,243.0 485.1,268.0 501.6,284.8 511.7,312.4 516.8,332.9 537.0,343.0 554.7,359.9 561.0,368.3 574.2,374.0 592.7,386.6 605.3,406.4 611.6,419.5 612.9,432.6 602.8,448.8 596.5,458.1"/>
<path d="M487.4,243.0 505.4,252.5 518.5,258.2 542.1,274.3 552.2,298.6 560.0,313.8 580.0,329.5 593.9,347.8 612.9,353.2 627.3,359.2 635.7,376.6 636.4,381.0"/>
<path d="M627.3,359.2 654.4,375.6 660.2,384.9"/>
<path d="M426.4,245.8 425.7,228.4 433.0,208.3"/>
<path d="M426.4,245.8 415.1,249.3 392.8,267.3 384.4,270.8 375.1,276.0 354.8,281.3 342.2,279.5"/>
<path d="M426.4,245.8 449.2,256.8 461.1,270.1 485.1,268.0"/>
<path d="M478.6,209.0 481.3,186.2 487.7,170.4 488.9,141.9 506.6,129.6 493.5,109.2"/>
<path d="M493.5,109.2 480.8,58.9 452.3,45.2"/>
<path d="M493.5,109.2 476.3,100.5 453.5,99.3 432.8,84.8 413.0,76.3 414.8,56.9 420.1,33.4"/>
<path d="M493.5,109.2 530.2,122.0 562.3,103.1 595.2,106.9 614.7,106.9 633.1,108.8 646.6,126.6 682.2,133.3 698.9,155.7 710.3,179.6 702.2,215.8 718.2,231.2 754.6,284.1"/>
<path d="M614.7,106.9 591.1,149.4 596.5,168.6 567.4,186.9 548.9,201.4"/>
<path d="M567.4,186.9 604.8,195.6 630.6,214.0 666.0,217.6 696.4,224.8 718.2,231.2"/>
<path d="M604.8,195.6 592.7,217.6 587.6,249.7 602.8,269.1 616.4,277.4 635.7,288.2 642.0,293.4"/>
<path d="M604.8,195.6 565.8,213.0 550.9,229.4"/>
<path d="M682.2,133.3 714.1,131.4 726.3,110.7 738.1,87.1"/>
<path d="M682.2,133.3 661.0,153.8 630.6,172.2 615.4,174.1"/>
<path d="M538.5,457.8 554.7,463.2 561.5,477.6 582.3,477.6 587.4,491.3"/>
<path d="M582.3,477.6 594.2,455.5"/>
<path d="M538.5,457.8 516.8,461.0"/>
<path d="M538.5,457.8 544.1,483.7"/>
<path d="M417.1,372.3 423.2,386.6 418.1,399.8 431.0,422.1"/>
<path d="M417.1,372.3 440.9,365.9"/>
<path d="M394.8,222.3 385.2,198.5 374.3,191.6 356.1,181.4 368.3,169.7 389.0,153.8 416.6,138.2 437.6,136.3"/>
<path d="M416.6,138.2 410.5,150.1 419.4,170.4 428.7,181.4 427.0,188.7 433.0,208.3"/>
<path d="M392.8,131.1 389.0,153.8"/>
<path d="M392.8,131.1 396.6,92.4 413.0,76.3"/>
<path d="M386.2,123.9 396.6,92.4"/>
<path d="M374.3,191.6 354.8,192.3 344.7,217.6 341.4,228.4"/>
<path d="M450.2,484.6 458.1,499.9 468.7,512.5 468.7,529.7"/>
<path d="M458.1,499.9 433.3,503.0 421.9,509.3 397.1,496.7 375.1,497.3 367.5,513.4 341.4,518.7"/>
<path d="M692.6,352.5 702.0,352.2 708.5,359.9"/>
<path d="M702.0,352.2 693.9,327.1 687.8,314.4"/>
<path d="M702.0,352.2 693.9,373.3 693.4,381.3"/>
<path d="M750.3,453.6 739.4,464.9 742.9,472.2 749.5,485.6 759.9,492.3"/>
<path d="M750.3,453.6 767.2,460.0"/>
<path d="M725.5,430.9 728.0,407.7 736.9,399.8 752.1,386.6"/>
</g><g fill="none" stroke="#a8c4dc" stroke-width="0.6" opacity="0.9" stroke-linejoin="round">
<path d="M516.8,226.6 494.0,227.3 476.3,223.0 453.5,221.2 435.8,221.2 420.6,221.2 402.9,219.4 395.3,223.0"/>
<path d="M628.1,108.8 643.3,120.2 661.0,123.9 678.7,122.0 682.5,133.3 680.0,159.4 678.7,188.7 677.4,206.8 686.3,215.8 704.0,215.8 717.9,231.2 731.8,235.5 747.0,235.5 757.1,242.6"/>
<path d="M453.5,99.3 478.8,85.9 506.6,76.3 526.9,82.1 540.8,92.8 562.3,103.1 585.1,106.9 614.7,106.9 628.1,108.8"/>
<path d="M717.9,231.2 698.9,233.7 681.2,228.4 655.9,219.4 630.6,215.8 615.4,206.8 604.8,196.7 590.1,192.3 567.4,186.9"/>
<path d="M677.4,205.0 655.9,197.8 635.7,185.1 618.0,174.1 596.5,168.6 577.5,166.7"/>
<path d="M711.6,179.6 711.6,152.0 721.7,129.6 736.9,110.7"/>
<path d="M402.9,114.5 392.8,129.6 410.5,129.6 428.2,126.9"/>
<path d="M392.8,129.6 392.8,95.5 405.4,76.3 414.3,56.9 410.5,37.4"/>
<path d="M341.4,256.8 352.3,228.4 349.8,203.2 344.7,192.3 356.1,181.4"/>
</g><g fill="none" stroke="#d3a6d8" stroke-width="0.45" opacity="0.7" stroke-linejoin="round">
<path d="M421.9,245.5 433.3,237.3 440.9,240.8 453.5,246.2 459.8,249.7 468.7,256.8 483.9,256.8 496.5,260.3 509.2,269.1 523.1,261.3"/>
<path d="M377.6,251.5 392.8,253.2 405.4,247.9 418.1,239.1 433.3,237.3"/>
<path d="M418.1,239.1 425.7,223.0 416.8,212.2 420.6,197.8 414.3,179.6"/>
<path d="M433.3,237.3 440.9,221.2 466.2,227.7 488.9,226.6 511.7,226.6"/>
<path d="M464.9,168.6 466.2,194.2 470.0,208.6 483.9,221.2 488.9,226.6"/>
<path d="M470.0,208.6 478.8,199.6 499.1,188.7 514.2,177.8 522.6,165.6"/>
<path d="M514.2,177.8 516.8,190.5 528.2,194.2 531.9,201.4"/>
<path d="M483.9,315.8 499.1,302.1 509.2,284.8 509.2,269.1"/>
<path d="M509.2,284.8 524.4,298.6 534.5,302.1 539.5,308.9 552.2,298.6"/>
<path d="M524.4,298.6 519.3,312.4 529.4,326.1 542.1,336.3 553.5,346.4 548.6,355.2"/>
<path d="M529.4,326.1 539.5,308.9"/>
<path d="M553.5,346.4 567.4,348.1 580.0,344.7 583.6,332.2"/>
<path d="M557.2,339.7 567.4,332.9 572.9,325.7"/>
<path d="M580.0,344.7 587.6,359.9 597.7,366.6 605.3,363.3 615.4,371.6 625.6,383.3"/>
<path d="M596.0,394.2 600.3,386.6 592.7,376.6 587.6,359.9"/>
<path d="M599.0,398.2 610.4,398.2 621.3,392.6"/>
<path d="M375.8,237.3 359.9,228.4 352.3,242.6 341.4,244.4"/>
<path d="M359.9,228.4 357.4,210.4 349.8,196.0 351.6,180.7"/>
<path d="M378.1,133.3 370.0,118.3 375.1,103.1 380.1,85.9 390.3,72.5"/>
<path d="M442.1,131.8 451.0,106.9 456.0,87.9 456.0,60.8 440.9,47.2 430.7,55.0"/>
<path d="M408.7,77.5 415.6,58.9 430.7,55.0 440.9,37.4"/>
<path d="M530.7,120.2 544.6,125.8 549.7,140.8 529.4,148.2 507.2,152.0"/>
<path d="M549.7,140.8 572.4,144.5 580.0,166.0"/>
<path d="M544.6,125.8 567.4,118.3 577.5,106.9 572.4,91.7"/>
<path d="M572.4,144.5 592.7,129.6 607.8,135.2 616.7,137.1"/>
<path d="M577.5,106.9 600.3,110.7 618.0,114.5 626.8,101.2"/>
</g><g fill="none" stroke="#c893d0" stroke-width="0.7" opacity="0.8" stroke-linejoin="round">
<path d="M391.0,268.0 390.3,263.8 395.3,257.5 387.7,256.1 377.6,251.5 374.6,246.2 375.8,237.3 378.4,234.4 371.3,228.4 368.3,221.2 380.1,215.8 380.7,208.6 377.1,201.4 373.1,194.9 378.6,191.6"/>
<path d="M378.6,191.6 391.5,189.4 399.6,191.6 402.9,188.7 406.7,177.8 414.3,172.2 414.3,179.6 418.1,184.3 423.7,185.1 425.7,194.9 429.0,195.3 430.2,184.3 435.3,171.1 439.6,175.2 442.1,177.8 452.3,174.8 456.8,180.3 454.8,168.6 464.9,168.6 465.4,157.1"/>
<path d="M465.4,157.1 479.3,160.5 483.1,153.4 507.2,152.0 509.2,156.4 513.7,162.3 522.6,165.6 547.6,169.7"/>
<path d="M547.6,169.7 539.0,177.8 545.9,189.4 544.6,196.0 552.7,202.1 547.6,203.2"/>
<path d="M544.3,207.6 554.7,207.6 569.9,201.4 587.6,207.9 588.9,198.9 597.7,194.2 596.5,180.7 612.9,174.8 620.5,171.1"/>
<path d="M547.6,169.7 568.6,174.1 580.0,166.0 596.5,163.0 605.3,163.8 608.1,156.8"/>
<path d="M608.1,156.8 618.0,152.0 616.7,137.1 623.0,131.4 632.4,125.8 634.7,114.5"/>
<path d="M378.6,191.6 372.6,184.0 373.1,174.1 358.6,177.8 351.6,180.7 355.4,173.4 363.7,160.5 376.4,142.7 378.1,133.3 392.3,130.3"/>
<path d="M392.3,130.3 408.0,128.8 418.1,127.7 428.2,126.6 442.1,131.8"/>
<path d="M442.1,131.8 443.4,149.7 456.0,157.5 465.4,157.1"/>
<path d="M442.1,131.8 453.5,134.1 464.9,131.1 476.3,135.2 486.4,137.1 509.2,129.6 523.1,126.9 529.4,133.3 530.7,120.2 523.6,110.0 539.5,100.5 550.4,85.2"/>
<path d="M392.3,130.3 390.8,118.3 392.8,103.1 405.4,78.2 408.7,77.5 390.3,72.5 371.3,69.7 361.7,58.1 349.8,56.9 341.4,55.0"/>
<path d="M361.7,58.1 365.0,45.2 354.8,33.4"/>
<path d="M550.4,85.2 529.4,64.7 516.8,49.1 506.6,25.5"/>
<path d="M550.4,85.2 572.4,91.7 580.0,76.3 600.3,81.3 615.4,86.7 629.4,90.9"/>
<path d="M629.4,90.9 635.7,81.3 653.4,76.3 663.5,64.7 677.4,56.2"/>
<path d="M629.4,90.9 626.8,101.2 634.7,114.5"/>
<path d="M634.7,114.5 652.1,123.9 674.9,121.3 677.4,112.6 696.4,106.9 714.1,104.3 726.8,92.8 749.5,101.2 760.9,99.3 769.8,103.1"/>
<path d="M677.4,56.2 692.6,53.0 701.5,68.6 709.0,68.6 721.7,60.8 734.3,59.7 757.1,68.6 771.0,73.2"/>
<path d="M677.4,56.2 669.8,41.3 655.9,35.4"/>
<path d="M620.5,171.1 627.6,177.0 638.2,189.4 647.1,194.2 666.0,197.8 676.7,192.3"/>
<path d="M676.7,192.3 683.7,188.7 695.1,182.5 713.1,184.3"/>
<path d="M713.1,184.3 731.8,179.6 739.4,166.7 747.0,152.0 757.1,133.3 769.8,122.0"/>
<path d="M713.1,184.3 724.2,197.8 731.8,212.2 744.5,218.4 741.9,230.2 757.1,239.1 768.5,235.5"/>
<path d="M676.7,192.3 681.2,206.8 683.7,217.6 691.3,217.6 681.2,229.4"/>
<path d="M681.2,229.4 668.6,221.9 650.9,221.9 630.6,216.9 618.0,217.6 599.8,218.7 599.0,231.9 610.4,253.2 623.0,267.3 636.9,279.5 647.1,293.4 645.3,297.2"/>
<path d="M647.1,299.3 661.0,304.8 667.3,310.7 669.8,300.3 673.6,288.2 681.2,277.8 687.5,276.0"/>
<path d="M681.2,229.4 690.1,229.1 685.0,246.2 696.4,258.5 687.5,276.0 696.4,288.2 715.4,300.3 707.8,310.7"/>
<path d="M690.6,334.6 691.3,326.1 688.8,322.7 697.7,308.9 707.8,310.7 712.8,318.2 721.7,333.9 718.4,346.4 725.5,366.6 731.3,367.9 724.2,386.6 714.1,396.5 714.1,403.1 706.5,406.7"/>
<path d="M715.4,300.3 726.8,286.5 741.9,300.3 750.8,306.2 745.7,320.9 766.0,319.2 769.8,317.5"/>
<path d="M721.7,333.9 734.3,322.7 745.7,320.9"/>
<path d="M731.3,367.9 752.1,365.6 767.2,359.2"/>
<path d="M418.6,495.4 408.0,509.3 411.8,525.0"/>
</g><g fill="#8fc0ff" opacity="0.85">
<ellipse cx="399.1" cy="172.4" rx="1.1" ry="0.9"/>
<ellipse cx="401.0" cy="170.9" rx="0.7" ry="1.0"/>
<ellipse cx="399.2" cy="171.5" rx="1.7" ry="0.8"/>
<ellipse cx="405.9" cy="169.6" rx="1.3" ry="0.6"/>
<ellipse cx="404.9" cy="170.8" rx="1.2" ry="0.9"/>
<ellipse cx="405.0" cy="168.4" rx="1.5" ry="0.9"/>
<ellipse cx="394.3" cy="187.3" rx="1.6" ry="0.8"/>
<ellipse cx="396.4" cy="189.8" rx="1.4" ry="1.1"/>
<ellipse cx="394.8" cy="189.6" rx="1.1" ry="1.1"/>
<ellipse cx="401.0" cy="189.3" rx="0.8" ry="0.6"/>
<ellipse cx="401.4" cy="190.3" rx="1.3" ry="0.7"/>
<ellipse cx="399.2" cy="190.2" rx="1.1" ry="0.9"/>
<ellipse cx="375.5" cy="195.4" rx="1.4" ry="1.1"/>
<ellipse cx="376.9" cy="195.6" rx="1.4" ry="0.6"/>
<ellipse cx="376.9" cy="195.6" rx="1.6" ry="0.8"/>
<ellipse cx="387.5" cy="189.7" rx="1.5" ry="0.8"/>
<ellipse cx="385.4" cy="189.2" rx="1.6" ry="1.1"/>
<ellipse cx="384.4" cy="191.4" rx="1.1" ry="0.6"/>
<ellipse cx="406.9" cy="167.5" rx="1.6" ry="0.5"/>
<ellipse cx="408.5" cy="165.4" rx="1.4" ry="0.7"/>
<ellipse cx="409.9" cy="168.2" rx="1.2" ry="1.1"/>
<ellipse cx="450.0" cy="172.8" rx="1.3" ry="0.5"/>
<ellipse cx="449.5" cy="173.8" rx="1.3" ry="0.6"/>
<ellipse cx="448.7" cy="175.2" rx="1.0" ry="1.1"/>
<ellipse cx="456.8" cy="173.0" rx="1.2" ry="0.8"/>
<ellipse cx="455.5" cy="173.6" rx="1.3" ry="0.9"/>
<ellipse cx="457.0" cy="173.4" rx="1.1" ry="0.9"/>
<ellipse cx="466.1" cy="169.8" rx="1.7" ry="0.8"/>
<ellipse cx="467.7" cy="168.9" rx="1.1" ry="0.8"/>
<ellipse cx="465.0" cy="170.8" rx="1.3" ry="0.5"/>
<ellipse cx="469.3" cy="179.5" rx="1.4" ry="0.7"/>
<ellipse cx="469.7" cy="180.3" rx="0.7" ry="0.5"/>
<ellipse cx="469.6" cy="181.0" rx="1.0" ry="0.8"/>
<ellipse cx="475.5" cy="157.0" rx="1.1" ry="0.7"/>
<ellipse cx="474.4" cy="157.8" rx="1.0" ry="0.7"/>
<ellipse cx="476.4" cy="156.1" rx="1.3" ry="0.9"/>
<ellipse cx="477.9" cy="158.5" rx="1.5" ry="0.6"/>
<ellipse cx="477.3" cy="159.2" rx="1.4" ry="0.6"/>
<ellipse cx="477.9" cy="158.9" rx="1.5" ry="0.8"/>
<ellipse cx="484.4" cy="152.8" rx="1.0" ry="0.9"/>
<ellipse cx="484.5" cy="153.7" rx="0.9" ry="0.6"/>
<ellipse cx="482.8" cy="152.9" rx="1.5" ry="1.0"/>
<ellipse cx="505.1" cy="149.4" rx="1.5" ry="0.9"/>
<ellipse cx="508.2" cy="149.6" rx="0.8" ry="0.7"/>
<ellipse cx="508.1" cy="149.4" rx="1.0" ry="0.8"/>
<ellipse cx="512.6" cy="148.0" rx="1.6" ry="0.6"/>
<ellipse cx="510.5" cy="149.6" rx="1.6" ry="1.1"/>
<ellipse cx="512.6" cy="149.6" rx="1.6" ry="0.6"/>
<ellipse cx="523.1" cy="150.0" rx="1.4" ry="0.8"/>
<ellipse cx="520.8" cy="148.5" rx="0.9" ry="0.5"/>
<ellipse cx="522.3" cy="148.3" rx="1.5" ry="0.5"/>
<ellipse cx="460.6" cy="156.2" rx="1.6" ry="1.0"/>
<ellipse cx="460.6" cy="155.9" rx="0.7" ry="0.9"/>
<ellipse cx="456.9" cy="155.1" rx="1.4" ry="0.8"/>
<ellipse cx="427.8" cy="162.5" rx="1.3" ry="0.7"/>
<ellipse cx="427.0" cy="162.3" rx="1.2" ry="1.0"/>
<ellipse cx="427.5" cy="160.3" rx="1.2" ry="1.0"/>
<ellipse cx="412.7" cy="167.6" rx="1.6" ry="1.0"/>
<ellipse cx="415.9" cy="165.3" rx="1.3" ry="1.0"/>
<ellipse cx="412.1" cy="166.0" rx="1.0" ry="0.8"/>
<ellipse cx="383.6" cy="206.8" rx="1.5" ry="0.5"/>
<ellipse cx="381.7" cy="205.7" rx="0.8" ry="0.5"/>
<ellipse cx="386.3" cy="207.9" rx="0.8" ry="0.8"/>
<ellipse cx="376.7" cy="213.5" rx="1.1" ry="0.9"/>
<ellipse cx="378.1" cy="213.6" rx="0.9" ry="0.7"/>
<ellipse cx="375.7" cy="214.2" rx="1.4" ry="0.7"/>
<ellipse cx="359.1" cy="225.6" rx="1.1" ry="0.9"/>
<ellipse cx="362.6" cy="226.2" rx="1.5" ry="0.9"/>
<ellipse cx="360.8" cy="226.2" rx="1.2" ry="0.9"/>
<ellipse cx="531.5" cy="150.7" rx="1.2" ry="0.6"/>
<ellipse cx="532.1" cy="150.7" rx="0.8" ry="0.8"/>
<ellipse cx="531.6" cy="151.2" rx="1.6" ry="0.7"/>
</g><g fill="#b5d0d0">
<ellipse cx="366.2" cy="173.0" rx="8.0" ry="2.2" transform="rotate(-12 366.2 173.0)"/>
<ellipse cx="437.6" cy="129.6" rx="5.5" ry="1.6" transform="rotate(-25 437.6 129.6)"/>
<ellipse cx="471.2" cy="202.1" rx="1.5" ry="4.0" transform="rotate(10 471.2 202.1)"/>
<ellipse cx="419.4" cy="190.5" rx="1.1" ry="3.6" transform="rotate(20 419.4 190.5)"/>
<ellipse cx="435.0" cy="188.7" rx="0.9" ry="3.4" transform="rotate(5 435.0 188.7)"/>
<ellipse cx="373.8" cy="155.7" rx="3.2" ry="0.9" transform="rotate(-35 373.8 155.7)"/>
<ellipse cx="649.6" cy="157.5" rx="8.5" ry="1.3" transform="rotate(-25 649.6 157.5)"/>
<ellipse cx="454.8" cy="198.9" rx="0.8" ry="1.8" transform="rotate(0 454.8 198.9)"/>
<ellipse cx="410.5" cy="150.8" rx="1.8" ry="0.9" transform="rotate(0 410.5 150.8)"/>
<ellipse cx="506.6" cy="290.7" rx="1.5" ry="1.5" transform="rotate(0 506.6 290.7)"/>
<ellipse cx="502.3" cy="308.9" rx="1.3" ry="1.3" transform="rotate(0 502.3 308.9)"/>
<ellipse cx="688.8" cy="322.7" rx="3.0" ry="1.5" transform="rotate(-40 688.8 322.7)"/>
<ellipse cx="725.0" cy="362.2" rx="1.5" ry="3.0" transform="rotate(0 725.0 362.2)"/>
<ellipse cx="731.8" cy="366.6" rx="1.5" ry="2.0" transform="rotate(0 731.8 366.6)"/>
<ellipse cx="625.6" cy="122.0" rx="1.2" ry="3.0" transform="rotate(0 625.6 122.0)"/>
<ellipse cx="515.5" cy="119.4" rx="1.8" ry="1.2" transform="rotate(0 515.5 119.4)"/>
</g></g>
<g font-family="'Liberation Sans','DejaVu Sans',sans-serif" text-anchor="middle">
<g font-size="5" fill="#a06fb4" font-style="italic" opacity="0.8">
<text x="384.0" y="40.5">Rheinland-Pfalz</text>
<text x="354.0" y="85.5">Lorraine</text>
<text x="384.0" y="102.0">Alsace</text>
<text x="428.0" y="94.0">Baden-Württemberg</text>
<text x="488.5" y="78.0">Bayern</text>
<text x="354.0" y="144.5">Franche-Comté</text>
<text x="486.0" y="143.0">Tirol</text>
<text x="548.0" y="65.2">Plzeňský</text>
<text x="550.0" y="109.5">Oberösterreich</text>
<text x="587.0" y="47.5">Česko</text>
<text x="641.0" y="55.2">střední Morava</text>
<text x="605.0" y="66.5">jihovýchod</text>
<text x="693.0" y="87.7">Slovensko</text>
<text x="737.0" y="72.2">Prešovský kraj</text>
<text x="598.0" y="104.2">Niederösterreich</text>
<text x="722.7" y="138.2">Alföld és Észak</text>
<text x="691.6" y="145.0">Magyarország</text>
<text x="573.0" y="142.0">Steiermark</text>
<text x="713.0" y="40.5">województwo</text>
<text x="713.0" y="46.5">małopolskie</text>
<text x="759.0" y="41.5">podkarpackie</text>
<text x="649.0" y="156.4">Dunántúl</text>
<text x="574.6" y="185.2">Slovenija</text>
<text x="575.5" y="240.5">Hrvatska</text>
<text x="638.3" y="233.4">Republika Srpska</text>
<text x="649.0" y="254.6">Bosna i Hercegovina</text>
<text x="686.8" y="271.6">Republika Srpska</text>
<text x="707.7" y="210.2">Војводина</text>
<text x="725.5" y="251.2">Србија</text>
<text x="732.6" y="268.2">Централна Србија</text>
<text x="686.0" y="306.8">Crna Gora</text>
<text x="728.3" y="307.8">Republika e</text>
<text x="728.3" y="313.9">Kosovës</text>
<text x="748.9" y="343.7">Македонија</text>
<text x="705.3" y="360.4">Shqipëria</text>
<text x="428.9" y="323.5">France</text>
<text x="426.0" y="394.9">Italia</text>
<text x="367.0" y="256.0">Provence-Alpes-Côte</text>
<text x="357.0" y="262.0">d'Azur</text>
<text x="400.0" y="148.0">Schweiz/Suisse/</text>
<text x="402.0" y="155.0">Svizzera/Svizra</text>
<text x="469.0" y="241.5">Emilia-Romagna</text>
<text x="480.0" y="278.5">Toscana</text>
<text x="515.0" y="308.0">Lazio</text>
<text x="551.0" y="323.0">Abruzzo</text>
<text x="555.6" y="475.5">Sicilia</text>
<text x="736.0" y="395.0">Αποκεντρωμένη</text>
<text x="736.0" y="401.0">Διοίκηση Ηπείρου -</text>
<text x="736.0" y="407.0">Δυτικής Μακεδονίας</text>
<text x="750.0" y="463.0">Αποκεντρωμένη</text>
<text x="750.0" y="469.0">Διοίκηση Πελοποννήσου,</text>
<text x="752.0" y="475.0">Δυτικής Ελλάδας</text>
<text x="752.0" y="481.0">και Ιονίου</text>
<text x="766.0" y="424.0">Ελλάδα</text>
</g>
<g font-size="4.9" fill="#3a3a3a" stroke="#f4f1ea" stroke-width="1.2" paint-order="stroke">
<text x="413.6" y="58.2">Mannheim</text>
<text x="432.6" y="72.0">Heilbronn</text>
<text x="451.3" y="46.6">Würzburg</text>
<text x="477.9" y="53.9">Erlangen</text>
<text x="384.7" y="124.7">Mulhouse</text>
<text x="537.3" y="48.0">Plzeň</text>
<text x="662.4" y="44.6">Ostrava</text>
<text x="647.1" y="68.1">Zlín</text>
<text x="673.7" y="68.1">Žilina</text>
<text x="656.2" y="80.8">Trenčín</text>
<text x="562.0" y="78.0">České Budějovice</text>
<text x="644.8" y="100.4">Trnava</text>
<text x="737.4" y="87.9">Košice</text>
<text x="645.4" y="127.3">Győr</text>
<text x="619.9" y="144.5">Szombathely</text>
<text x="710.0" y="180.3">Szeged</text>
<text x="736.9" y="198.7">Timișoara</text>
<text x="595.3" y="169.2">Maribor</text>
<text x="650.0" y="176.9">Kaposvár</text>
<text x="672.6" y="206.1">Osijek</text>
<text x="655.6" y="219.4">Slavonski Brod</text>
<text x="565.6" y="214.3">Rijeka</text>
<text x="601.0" y="232.7">Bihać</text>
<text x="672.3" y="242.0">Tuzla</text>
<text x="585.4" y="257.6">Zadar</text>
<text x="615.7" y="278.3">Split</text>
<text x="650.5" y="284.5">Mostar</text>
<text x="718.6" y="291.4">Нови Пазар</text>
<text x="754.2" y="284.8">Ниш</text>
<text x="755.7" y="295.7">Лесковац</text>
<text x="693.9" y="328.4">Shkodra</text>
<text x="717.0" y="327.7">Kukës</text>
<text x="695.2" y="373.7">Fier</text>
<text x="725.9" y="376.8">Korçë</text>
<text x="636.2" y="381.5">Taranto</text>
<text x="659.8" y="385.5">Lecce</text>
<text x="526.0" y="348.5">Latina</text>
<text x="578.0" y="478.5">Catania</text>
<text x="587.0" y="492.5">Siracusa</text>
<text x="595.3" y="459.0">Reggio di Calabria</text>
<text x="415.8" y="373.1">Tàttari/Sassari</text>
<text x="724.7" y="431.4">Πρέβεζα</text>
<text x="741.6" y="450.6">Μεσολόγγι</text>
<text x="457.0" y="497.0">تونس</text>
<text x="566.8" y="529.5">Valletta</text>
<text x="550.0" y="229.5">Pula</text>
<text x="428.0" y="248.0">Genova</text>
<text x="352.0" y="180.5">Genève</text>
<text x="366.0" y="165.5">Lausanne</text>
<text x="449.0" y="258.5">La Spezia</text>
<text x="442.0" y="222.0">Piacenza</text>
<text x="336.0" y="286.5">Marseille</text>
<text x="765.0" y="492.0">Πύργος</text>
<text x="757.0" y="377.0">Νάουσα</text>
<text x="763.0" y="320.0">Кав</text>
<text x="759.0" y="257.0">Бор</text>
<text x="762.0" y="234.0">Orș</text>
</g>
<g font-size="5.9" fill="#3a3a3a" stroke="#f4f1ea" stroke-width="1.2" paint-order="stroke">
<text x="549.0" y="202.8">Trieste</text>
<text x="373.0" y="498.5">Skikda · سكيكدة</text>
<text x="351.5" y="512.0">Mila</text>
<text x="387.5" y="512.0">Guelma</text>
<text x="380.0" y="529.5">Oum El Bouaghi</text>
</g>
<g font-size="6.8" fill="#2b2b2b" stroke="#f4f1ea" stroke-width="1.4" paint-order="stroke">
<text x="492.3" y="111.0">München</text>
<text x="436.8" y="138.0">St. Gallen</text>
<text x="681.7" y="135.0">Budapest</text>
<text x="725.5" y="112.0">Miskolc</text>
<text x="754.0" y="151.5">Oradea</text>
<text x="734.0" y="165.5">Békéscsaba</text>
<text x="739.7" y="184.0">Arad</text>
<text x="753.9" y="216.5">Reșița</text>
<text x="717.9" y="233.5">Београд</text>
<text x="604.4" y="197.5">Zagreb</text>
<text x="387.4" y="271.3">Monaco</text>
<text x="513.0" y="292.0">Perugia</text>
<text x="537.7" y="459.5">Palermo</text>
<text x="742.1" y="331.0">Скопје</text>
<text x="379.0" y="68.5">Saarbrücken</text>
<text x="355.0" y="54.6">Luxembourg</text>
<text x="570.0" y="346.0">Campobasso</text>
<text x="543.0" y="275.5">Ancona</text>
<text x="388.0" y="200.5">Aosta</text>
<text x="429.7" y="423.5">Casteddu/Cagliari</text>
</g></g>
<g>
<use href="#pinG" x="529.0" y="166.7"/>
<use href="#pinG" x="543.7" y="170.2"/>
<use href="#pinR" x="487.5" y="170.3"/>
<use href="#pinG" x="528.0" y="171.9"/>
<use href="#pinG" x="518.3" y="173.2"/>
<use href="#pinG" x="533.0" y="176.2"/>
<use href="#pinG" x="521.0" y="177.2"/>
<use href="#pinG" x="526.8" y="177.4"/>
<use href="#pinG" x="523.0" y="177.7"/>
<use href="#pinG" x="522.6" y="178.9"/>
<use href="#pinG" x="518.0" y="179.0"/>
<use href="#pinG" x="527.0" y="179.4"/>
<use href="#pinG" x="520.1" y="179.5"/>
<use href="#pinG" x="523.4" y="179.6"/>
<use href="#pinG" x="521.9" y="179.7"/>
<use href="#pinG" x="520.3" y="180.1"/>
<use href="#pinG" x="527.5" y="180.6"/>
<use href="#pinG" x="516.9" y="181.0"/>
<use href="#pinG" x="538.0" y="181.2"/>
<use href="#pinG" x="531.2" y="181.6"/>
<use href="#pinB" x="449.7" y="182.4"/>
<use href="#pinR" x="508.7" y="182.9"/>
<use href="#pinG" x="524.5" y="182.9"/>
<use href="#pinG" x="519.4" y="183.4"/>
<use href="#pinG" x="534.0" y="183.4"/>
<use href="#pinG" x="524.7" y="183.5"/>
<use href="#pinG" x="537.4" y="183.6"/>
<use href="#pinG" x="535.3" y="184.3"/>
<use href="#pinG" x="529.1" y="184.4"/>
<use href="#pinG" x="525.3" y="184.8"/>
<use href="#pinG" x="516.1" y="184.9"/>
<use href="#pinG" x="538.8" y="185.2"/>
<use href="#pinG" x="514.5" y="185.2"/>
<use href="#pinG" x="517.3" y="185.3"/>
<use href="#pinB" x="519.0" y="185.7"/>
<use href="#pinG" x="518.7" y="185.8"/>
<use href="#pinG" x="535.4" y="186.0"/>
<use href="#pinG" x="516.8" y="186.1"/>
<use href="#pinB" x="481.2" y="186.5"/>
<use href="#pinG" x="541.1" y="186.6"/>
<use href="#pinG" x="544.2" y="186.6"/>
<use href="#pinG" x="531.6" y="186.7"/>
<use href="#pinG" x="523.8" y="186.8"/>
<use href="#pinG" x="521.1" y="186.9"/>
<use href="#pinG" x="517.9" y="187.4"/>
<use href="#pinG" x="523.6" y="187.7"/>
<use href="#pinG" x="527.7" y="188.6"/>
<use href="#pinG" x="528.4" y="189.1"/>
<use href="#pinG" x="546.0" y="189.2"/>
<use href="#pinG" x="541.6" y="189.2"/>
<use href="#pinG" x="524.2" y="189.3"/>
<use href="#pinG" x="522.1" y="189.5"/>
<use href="#pinG" x="526.5" y="189.6"/>
<use href="#pinR" x="417.4" y="189.6"/>
<use href="#pinG" x="539.3" y="189.8"/>
<use href="#pinG" x="533.3" y="190.5"/>
<use href="#pinG" x="519.5" y="191.0"/>
<use href="#pinG" x="548.5" y="191.4"/>
<use href="#pinG" x="548.8" y="191.6"/>
<use href="#pinG" x="518.8" y="191.7"/>
<use href="#pinG" x="531.9" y="191.8"/>
<use href="#pinG" x="517.3" y="191.9"/>
<use href="#pinG" x="528.9" y="191.9"/>
<use href="#pinG" x="547.9" y="192.5"/>
<use href="#pinG" x="524.7" y="192.6"/>
<use href="#pinG" x="544.9" y="192.7"/>
<use href="#pinG" x="542.6" y="192.8"/>
<use href="#pinR" x="457.9" y="192.9"/>
<use href="#pinB" x="437.8" y="193.3"/>
<use href="#pinB" x="412.8" y="193.6"/>
<use href="#pinG" x="543.4" y="193.9"/>
<use href="#pinG" x="518.9" y="194.3"/>
<use href="#pinG" x="530.0" y="194.4"/>
<use href="#pinB" x="422.2" y="194.8"/>
<use href="#pinB" x="429.3" y="194.8"/>
<use href="#pinG" x="533.8" y="195.0"/>
<use href="#pinG" x="546.1" y="195.0"/>
<use href="#pinG" x="546.5" y="195.1"/>
<use href="#pinG" x="545.3" y="195.5"/>
<use href="#pinG" x="537.9" y="195.6"/>
<use href="#pinG" x="524.5" y="195.7"/>
<use href="#pinG" x="544.6" y="195.8"/>
<use href="#pinG" x="546.3" y="195.8"/>
<use href="#pinG" x="543.4" y="197.4"/>
<use href="#pinB" x="384.5" y="198.5"/>
<use href="#pinB" x="444.1" y="199.3"/>
<use href="#pinG" x="531.0" y="199.5"/>
<use href="#pinR" x="510.0" y="200.0"/>
<use href="#pinG" x="538.3" y="200.2"/>
<use href="#pinR" x="431.8" y="200.8"/>
<use href="#pinR" x="423.6" y="202.2"/>
<use href="#pinG" x="549.1" y="202.6"/>
<use href="#pinB" x="433.3" y="203.0"/>
<use href="#pinB" x="404.0" y="203.8"/>
<use href="#pinB" x="491.6" y="204.6"/>
<use href="#pinR" x="442.6" y="205.2"/>
<use href="#pinR" x="457.9" y="205.7"/>
<use href="#pinB" x="509.6" y="206.4"/>
<use href="#pinR" x="398.3" y="208.2"/>
<use href="#pinR" x="418.0" y="208.2"/>
<use href="#pinR" x="477.6" y="208.7"/>
<use href="#pinB" x="434.1" y="209.7"/>
<use href="#pinB" x="499.7" y="210.0"/>
<use href="#pinR" x="425.1" y="210.5"/>
<use href="#pinB" x="412.8" y="213.4"/>
<use href="#pinR" x="439.6" y="213.7"/>
<use href="#pinB" x="430.8" y="218.7"/>
<use href="#pinB" x="472.8" y="218.7"/>
<use href="#pinB" x="453.5" y="219.7"/>
<use href="#pinR" x="393.8" y="220.8"/>
<use href="#pinB" x="498.5" y="221.7"/>
<use href="#pinR" x="445.3" y="223.1"/>
<use href="#pinR" x="393.8" y="223.7"/>
<use href="#pinB" x="406.8" y="227.6"/>
<use href="#pinB" x="417.7" y="227.6"/>
<use href="#pinR" x="493.3" y="231.7"/>
<use href="#pinR" x="461.4" y="232.7"/>
<use href="#pinR" x="403.1" y="235.8"/>
<use href="#pinR" x="469.0" y="235.8"/>
<use href="#pinR" x="475.1" y="238.1"/>
<use href="#pinB" x="487.2" y="242.2"/>
<use href="#pinR" x="508.5" y="244.9"/>
<use href="#pinB" x="426.0" y="245.5"/>
<use href="#pinR" x="390.6" y="246.8"/>
<use href="#pinB" x="414.3" y="248.3"/>
<use href="#pinB" x="504.0" y="252.1"/>
<use href="#pinR" x="509.4" y="255.7"/>
<use href="#pinB" x="448.6" y="256.0"/>
<use href="#pinB" x="517.8" y="257.5"/>
<use href="#pinR" x="455.6" y="259.1"/>
<use href="#pinR" x="473.0" y="262.7"/>
<use href="#pinR" x="480.0" y="263.2"/>
<use href="#pinB" x="525.6" y="263.8"/>
<use href="#pinB" x="403.1" y="264.2"/>
<use href="#pinR" x="467.0" y="264.2"/>
<use href="#pinR" x="396.8" y="266.1"/>
<use href="#pinR" x="487.0" y="266.2"/>
<use href="#pinB" x="485.0" y="267.4"/>
<use href="#pinB" x="463.4" y="269.9"/>
<use href="#pinR" x="476.9" y="270.1"/>
<use href="#pinB" x="541.8" y="273.7"/>
<use href="#pinR" x="460.5" y="276.2"/>
<use href="#pinR" x="496.8" y="280.0"/>
<use href="#pinR" x="486.8" y="283.7"/>
<use href="#pinR" x="540.0" y="285.5"/>
<use href="#pinB" x="513.9" y="291.8"/>
<use href="#pinB" x="551.4" y="296.3"/>
<use href="#pinB" x="559.8" y="313.7"/>
<use href="#pinD" x="516.5" y="329.7"/>
<use href="#pinR" x="514.2" y="332.9"/>
<use href="#pinR" x="515.1" y="335.6"/>
<use href="#pinB" x="537.7" y="341.0"/>
<use href="#pinB" x="593.9" y="347.9"/>
<use href="#pinB" x="526.8" y="348.2"/>
<use href="#pinB" x="612.9" y="355.6"/>
<use href="#pinB" x="627.2" y="358.4"/>
<use href="#pinB" x="574.2" y="359.1"/>
<use href="#pinB" x="562.9" y="360.9"/>
<use href="#pinB" x="574.2" y="365.4"/>
<use href="#pinR" x="560.2" y="369.0"/>
<use href="#pinB" x="416.6" y="371.8"/>
<use href="#pinB" x="620.0" y="374.3"/>
<use href="#pinB" x="573.7" y="374.4"/>
<use href="#pinB" x="600.0" y="375.4"/>
<use href="#pinB" x="654.2" y="375.5"/>
<use href="#pinB" x="636.8" y="380.9"/>
<use href="#pinB" x="660.2" y="384.6"/>
<use href="#pinB" x="611.6" y="419.0"/>
<use href="#pinB" x="432.5" y="420.5"/>
<use href="#pinR" x="430.8" y="421.9"/>
<use href="#pinB" x="632.8" y="425.9"/>
<use href="#pinB" x="619.9" y="431.6"/>
<use href="#pinB" x="607.5" y="439.9"/>
<use href="#pinB" x="592.7" y="454.7"/>
<use href="#pinD" x="536.8" y="456.4"/>
<use href="#pinB" x="537.7" y="457.4"/>
<use href="#pinB" x="595.8" y="457.8"/>
<use href="#pinB" x="516.5" y="460.4"/>
<use href="#pinB" x="561.2" y="475.3"/>
<use href="#pinB" x="582.0" y="476.9"/>
<use href="#pinB" x="543.7" y="483.1"/>
<use href="#pinR" x="588.1" y="490.3"/>
</g>
</svg>

<!-- zoom control -->
<div class="abs" style="left:347.8px;top:41.6px;width:14.4px;height:29.3px;background:#fff;border-radius:2.2px;box-shadow:0 0 3px rgba(0,0,0,.45)"></div>
<div class="abs" style="left:347.8px;top:56px;width:14.6px;height:0.6px;background:#ccc"></div>
<div class="abs" style="left:351.6px;top:48.2px;width:6.4px;height:1.5px;background:#222"></div>
<div class="abs" style="left:354.1px;top:45.8px;width:1.5px;height:6.4px;background:#222"></div>
<div class="abs" style="left:352.1px;top:62.8px;width:5.4px;height:1.5px;background:#222"></div>
</div>
</body></html>
